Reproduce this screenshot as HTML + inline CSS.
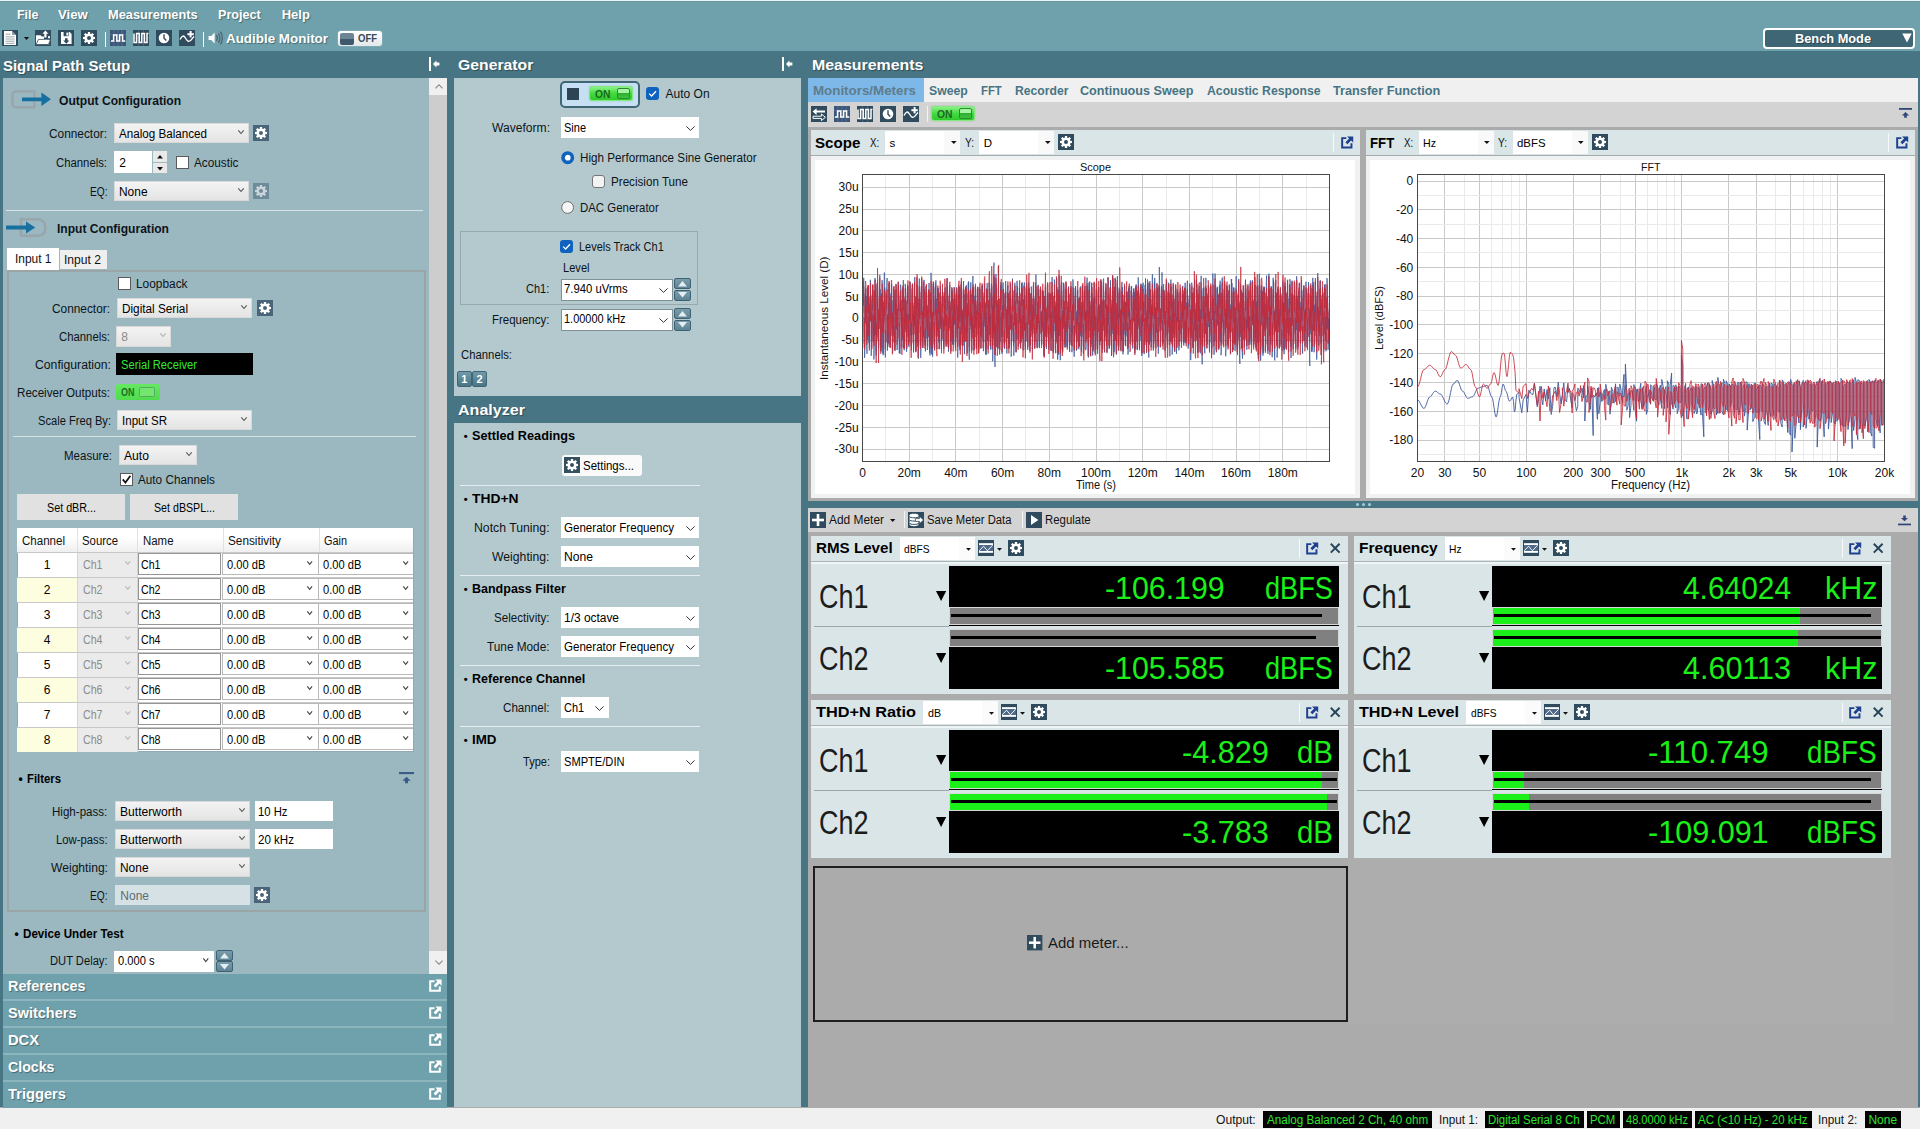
<!DOCTYPE html>
<html><head><meta charset="utf-8"><title>APx500</title><style>
html,body{margin:0;padding:0;}
body{width:1920px;height:1129px;position:relative;overflow:hidden;background:#ababab;
font-family:"Liberation Sans",sans-serif;font-size:12px;color:#000;}
div,span.t,svg.a{position:absolute;box-sizing:border-box;}
span.t{white-space:nowrap;transform-origin:0 0;line-height:normal;}
svg.a{overflow:visible;}
.cb{background:linear-gradient(#f3f3f3,#e4e4e4);border:1px solid #d9d9d9;}
.wb{background:#fff;border:1px solid #7a7a7a;}
</style></head><body>
<div style="left:0px;top:0px;width:1920px;height:51px;background:#6fa1ac;"></div>
<div style="left:0px;top:0px;width:1920px;height:1px;background:#e4f8f9;"></div>
<div style="left:0px;top:1px;width:1920px;height:1px;background:#6c959e;"></div>
<div style="left:0px;top:51px;width:1920px;height:1056px;background:#487584;"></div>
<span class="t" style="left:16.5px;top:7px;font-size:13px;color:#fff;font-weight:bold;transform:scaleX(0.960);text-shadow:1px 1px 1px rgba(0,0,0,.35);">File</span>
<span class="t" style="left:58.3px;top:7px;font-size:13px;color:#fff;font-weight:bold;transform:scaleX(1.011);text-shadow:1px 1px 1px rgba(0,0,0,.35);">View</span>
<span class="t" style="left:108.3px;top:7px;font-size:13px;color:#fff;font-weight:bold;transform:scaleX(0.985);text-shadow:1px 1px 1px rgba(0,0,0,.35);">Measurements</span>
<span class="t" style="left:218.3px;top:7px;font-size:13px;color:#fff;font-weight:bold;transform:scaleX(0.969);text-shadow:1px 1px 1px rgba(0,0,0,.35);">Project</span>
<span class="t" style="left:281.7px;top:7px;font-size:13px;color:#fff;font-weight:bold;text-shadow:1px 1px 1px rgba(0,0,0,.35);">Help</span>
<svg class="a" style="left:2px;top:30px;" width="16" height="16" viewBox="0 0 16 16"><rect width="16" height="16" fill="#2f4b5d"/><path d="M2 1H10L14 5V15H2Z" fill="#fff"/><path d="M10 1V5H14" fill="#2f4b5d" opacity=".55"/><path d="M3.5 4.2H8.5M3.5 6.8H12.5M3.5 9H12.5M3.5 11.2H12.5M3.5 13.3H12.5" stroke="#9aa6ae" stroke-width="1"/></svg>
<svg class="a" style="left:24px;top:37px;" width="5" height="3" viewBox="0 0 5 3"><path d="M0 0H5L2.5 3Z" fill="#111"/></svg>
<svg class="a" style="left:35px;top:30px;" width="16" height="16" viewBox="0 0 16 16"><rect width="16" height="16" fill="#2f4b5d"/><path d="M1 14.5V5.2H5.6L6.8 6.6H9V9H14.2V14.5Z" fill="#fff"/><path d="M3.4 9.4H15.6L13.4 14.5H1.2Z" fill="#fff" stroke="#2f4b5d" stroke-width="0.8"/><path d="M10.4 0.6L13.4 3.8H11.5V7.6H9.3V3.8H7.4Z" fill="#fff"/><rect x="13" y="6.2" width="2" height="2" fill="#fff"/></svg>
<svg class="a" style="left:58px;top:30px;" width="16" height="16" viewBox="0 0 16 16"><rect width="16" height="16" fill="#2f4b5d"/><path d="M3 2H11.6L13.6 4V14H3Z" fill="#fff"/><rect x="5.6" y="2" width="5" height="4.2" fill="#2f4b5d"/><rect x="8.4" y="2.6" width="1.6" height="3" fill="#fff"/><path d="M7 8.2H9.6V10.6H11.4L8.3 13.8L5.2 10.6H7Z" fill="#2f4b5d"/></svg>
<svg class="a" style="left:81px;top:30px;" width="16" height="16" viewBox="0 0 16 16"><rect width="16" height="16" fill="#2f4b5d"/><path d="M14.00 6.90 L14.00 9.10 L12.35 9.15 L11.89 10.26 L13.02 11.47 L11.47 13.02 L10.26 11.89 L9.15 12.35 L9.10 14.00 L6.90 14.00 L6.85 12.35 L5.74 11.89 L4.53 13.02 L2.98 11.47 L4.11 10.26 L3.65 9.15 L2.00 9.10 L2.00 6.90 L3.65 6.85 L4.11 5.74 L2.98 4.53 L4.53 2.98 L5.74 4.11 L6.85 3.65 L6.90 2.00 L9.10 2.00 L9.15 3.65 L10.26 4.11 L11.47 2.98 L13.02 4.53 L11.89 5.74 L12.35 6.85Z M10.00 8.00 A2.0 2.0 0 1 0 6.00 8.00 A2.0 2.0 0 1 0 10.00 8.00Z" fill="#fff" fill-rule="evenodd"/></svg>
<div style="left:104.5px;top:32px;width:1.5px;height:14.5px;background:#fff;"></div>
<svg class="a" style="left:110px;top:30px;" width="16" height="16" viewBox="0 0 16 16"><rect width="16" height="16" fill="#3c5679"/><path d="M0 4.5H16M0 11.5H16M4 0V16M8 0V16M12 0V16" stroke="#5a7599" stroke-width="0.7"/><path d="M1 11H3.6V5H6.8V11H9.6V5H12.6V11H15.2" fill="none" stroke="#fff" stroke-width="1.5"/></svg>
<svg class="a" style="left:133px;top:30px;" width="16" height="16" viewBox="0 0 16 16"><rect width="16" height="16" fill="#2f4b5d"/><path d="M0 8H16M5.5 0V16M10.5 0V16" stroke="#566f82" stroke-width="0.7"/><path d="M1 3.4V12.6H3.6V3.4H6.2V12.6H8.8V3.4H11.4V12.6H14V3.4H15.4" fill="none" stroke="#fff" stroke-width="1.5"/></svg>
<svg class="a" style="left:156px;top:30px;" width="16" height="16" viewBox="0 0 16 16"><rect width="16" height="16" fill="#2f4b5d"/><circle cx="8" cy="8" r="5.3" fill="#fff"/><path d="M8 4.2V8.2L10.3 10.6" fill="none" stroke="#2f4b5d" stroke-width="1.4"/></svg>
<svg class="a" style="left:179px;top:30px;" width="16" height="16" viewBox="0 0 16 16"><rect width="16" height="16" fill="#2f4b5d"/><path d="M1 9.5C3 5.5 4.6 5 6.4 8S10 13.5 13.4 8.4L15 6.5" fill="none" stroke="#fff" stroke-width="1.4"/><rect x="10.6" y="1" width="2" height="6.4" fill="#fff"/><rect x="8.4" y="3.2" width="6.4" height="2" fill="#fff"/></svg>
<div style="left:202.5px;top:32px;width:1.5px;height:14.5px;background:#fff;"></div>
<svg class="a" style="left:208px;top:30px;" width="15" height="16" viewBox="0 0 15 16"><path d="M0.6 6H3.4L6.6 2.6V13.4L3.4 10H0.6Z" fill="#fff"/><path d="M8.4 5.2C9.6 6.8 9.6 9.2 8.4 10.8M10.4 3.4C12.4 6 12.4 10 10.4 12.6M12.4 1.6C15 5.2 15 10.8 12.4 14.4" fill="none" stroke="#4c6670" stroke-width="1.3"/></svg>
<span class="t" style="left:226.0px;top:31px;font-size:13px;color:#fff;font-weight:bold;transform:scaleX(1.031);text-shadow:1px 1px 1px rgba(0,0,0,.35);">Audible Monitor</span>
<div style="left:338px;top:31px;width:44px;height:15px;border-radius:3px;background:linear-gradient(#ffffff,#e4e8ea);box-shadow:0 0 1px #fff;"></div>
<div style="left:340px;top:32.5px;width:14px;height:12px;border-radius:2px;background:linear-gradient(#6d8494 48%,#3f586b 52%);"></div>
<span class="t" style="left:357.5px;top:33.4px;font-size:10px;color:#34495a;font-weight:bold;transform:scaleX(0.950);">OFF</span>
<div style="left:1763px;top:28px;width:152px;height:21px;background:#3f6675;border:2px solid #fff;border-radius:4px;"></div>
<span class="t" style="left:1795.0px;top:32px;font-size:12.5px;color:#fff;font-weight:bold;transform:scaleX(1.023);text-shadow:1px 1px 1px rgba(0,0,0,.35);">Bench Mode</span>
<svg class="a" style="left:1902px;top:33px;" width="10" height="10" viewBox="0 0 10 10"><path d="M0.3 0.6H9.7L5 9.6Z" fill="#fff"/></svg>
<span class="t" style="left:3.2px;top:56.599999999999994px;font-size:15.5px;color:#fff;font-weight:bold;transform:scaleX(0.964);text-shadow:1px 1px 1px rgba(0,0,0,.35);">Signal Path Setup</span>
<svg class="a" style="left:429px;top:57px;" width="11" height="14" viewBox="0 0 11 14"><rect x="0" y="0" width="2" height="14" fill="#fff"/><path d="M4 7 L7.4 3.4 V5.6 H10.4 V8.4 H7.4 V10.6 Z" fill="#fff"/></svg>
<div style="left:3px;top:78px;width:426px;height:896px;background:#9bb7c0;"></div>
<div style="left:429px;top:78px;width:18px;height:896px;background:#cdcdcd;"></div>
<div style="left:429px;top:78px;width:18px;height:17px;background:#f0f0f0;"></div>
<div style="left:429px;top:951px;width:18px;height:23px;background:#f0f0f0;"></div>
<svg class="a" style="left:434.5px;top:84px;" width="8" height="5" viewBox="0 0 8 5"><path d="M0.4 4.4L4 0.8L7.6 4.4" fill="none" stroke="#8a8a8a" stroke-width="1.1"/></svg>
<svg class="a" style="left:434.5px;top:960px;" width="8" height="5" viewBox="0 0 8 5"><path d="M0.4 0.6L4 4.2L7.6 0.6" fill="none" stroke="#8a8a8a" stroke-width="1.1"/></svg>
<svg class="a" style="left:11px;top:90px;" width="42" height="19" viewBox="0 0 42 19"><path d="M23.4 1.4H5.4Q1.4 1.4 1.4 5.4V13.2Q1.4 17.2 5.4 17.2H23.4Z" fill="none" stroke="#98a6ac" stroke-width="2.4"/><path d="M11 7.4H30.4V2.6L40 9.3L30.4 16V11.2H11Z" fill="#17709f"/></svg>
<span class="t" style="left:59.3px;top:93.7px;font-size:12.5px;color:#0c1418;font-weight:bold;transform:scaleX(0.966);">Output Configuration</span>
<span class="t" style="left:49.3px;top:127px;font-size:12px;color:#0c1418;transform:scaleX(0.988);">Connector:</span>
<div class="cb" style="left:114px;top:123px;width:135px;height:20px;"></div>
<span class="t" style="left:119.2px;top:127px;font-size:12px;color:#000;transform:scaleX(0.970);">Analog Balanced</span>
<svg class="a" style="left:237.8px;top:129.7px;" width="6" height="4.5" viewBox="0 0 6 4.5"><path d="M0.3 0.3 L3.0 3.5 L5.7 0.3" fill="none" stroke="#555" stroke-width="1.1"/></svg>
<svg class="a" style="left:253px;top:125px;" width="16" height="16" viewBox="0 0 16 16"><rect width="16" height="16" fill="#4a6579"/><path d="M14.00 6.90 L14.00 9.10 L12.35 9.15 L11.89 10.26 L13.02 11.47 L11.47 13.02 L10.26 11.89 L9.15 12.35 L9.10 14.00 L6.90 14.00 L6.85 12.35 L5.74 11.89 L4.53 13.02 L2.98 11.47 L4.11 10.26 L3.65 9.15 L2.00 9.10 L2.00 6.90 L3.65 6.85 L4.11 5.74 L2.98 4.53 L4.53 2.98 L5.74 4.11 L6.85 3.65 L6.90 2.00 L9.10 2.00 L9.15 3.65 L10.26 4.11 L11.47 2.98 L13.02 4.53 L11.89 5.74 L12.35 6.85Z M10.00 8.00 A2.0 2.0 0 1 0 6.00 8.00 A2.0 2.0 0 1 0 10.00 8.00Z" fill="#fff" fill-rule="evenodd"/></svg>
<span class="t" style="left:56.3px;top:155.7px;font-size:12px;color:#0c1418;transform:scaleX(0.944);">Channels:</span>
<div style="left:114px;top:151px;width:38px;height:22px;background:#fff;"></div>
<span class="t" style="left:119.3px;top:155.7px;font-size:12px;color:#000;">2</span>
<div style="left:153px;top:151px;width:14px;height:10.5px;background:#e9e9e9;"></div>
<div style="left:153px;top:162.5px;width:14px;height:10.5px;background:#e9e9e9;"></div>
<svg class="a" style="left:157px;top:155px;" width="6" height="3.5" viewBox="0 0 6 3.5"><path d="M0 3.5H6L3.0 0Z" fill="#111"/></svg>
<svg class="a" style="left:157px;top:166.5px;" width="6" height="3.5" viewBox="0 0 6 3.5"><path d="M0 0H6L3.0 3.5Z" fill="#111"/></svg>
<div style="left:175.5px;top:156px;width:13px;height:13px;background:#fff;border:1px solid #5a5a5a;"></div>
<span class="t" style="left:194.2px;top:155.7px;font-size:12px;color:#0c1418;transform:scaleX(0.981);">Acoustic</span>
<span class="t" style="left:89.8px;top:184.8px;font-size:12px;color:#0c1418;transform:scaleX(0.846);">EQ:</span>
<div class="cb" style="left:114px;top:181px;width:135px;height:20px;"></div>
<span class="t" style="left:119.2px;top:185px;font-size:12px;color:#000;transform:scaleX(0.994);">None</span>
<svg class="a" style="left:237.8px;top:187.7px;" width="6" height="4.5" viewBox="0 0 6 4.5"><path d="M0.3 0.3 L3.0 3.5 L5.7 0.3" fill="none" stroke="#555" stroke-width="1.1"/></svg>
<svg class="a" style="left:253px;top:183px;" width="16" height="16" viewBox="0 0 16 16"><rect width="16" height="16" fill="#6e8b9b"/><path d="M14.00 6.90 L14.00 9.10 L12.35 9.15 L11.89 10.26 L13.02 11.47 L11.47 13.02 L10.26 11.89 L9.15 12.35 L9.10 14.00 L6.90 14.00 L6.85 12.35 L5.74 11.89 L4.53 13.02 L2.98 11.47 L4.11 10.26 L3.65 9.15 L2.00 9.10 L2.00 6.90 L3.65 6.85 L4.11 5.74 L2.98 4.53 L4.53 2.98 L5.74 4.11 L6.85 3.65 L6.90 2.00 L9.10 2.00 L9.15 3.65 L10.26 4.11 L11.47 2.98 L13.02 4.53 L11.89 5.74 L12.35 6.85Z M10.00 8.00 A2.0 2.0 0 1 0 6.00 8.00 A2.0 2.0 0 1 0 10.00 8.00Z" fill="#c9d5da" fill-rule="evenodd"/></svg>
<div style="left:6px;top:210px;width:417px;height:1px;background:#d9e3e7;"></div>
<svg class="a" style="left:6px;top:217px;" width="42" height="21" viewBox="0 0 42 21"><path d="M15 2.2H31C37 2.2 39.4 5 39.4 10.5S37 18.8 31 18.8H15Z" fill="none" stroke="#98a6ac" stroke-width="2.4"/><path d="M0 8.6H20V4.4L29.2 10.5L20 16.6V12.4H0Z" fill="#17709f"/></svg>
<span class="t" style="left:57.2px;top:222px;font-size:12.5px;color:#0c1418;font-weight:bold;transform:scaleX(0.966);">Input Configuration</span>
<div style="left:7px;top:269.5px;width:419px;height:642.5px;border:2px solid #9ba5a5;"></div>
<div style="left:7px;top:248px;width:52px;height:22.3px;background:#fff;"></div>
<div style="left:60px;top:250px;width:47.3px;height:19.2px;background:#efefef;"></div>
<span class="t" style="left:14.5px;top:251.60000000000002px;font-size:12px;color:#111;transform:scaleX(0.995);">Input 1</span>
<span class="t" style="left:64.2px;top:252.60000000000002px;font-size:12px;color:#111;transform:scaleX(1.008);">Input 2</span>
<div style="left:117.5px;top:277px;width:13px;height:13px;background:#fff;border:1px solid #5a5a5a;"></div>
<span class="t" style="left:136.4px;top:277px;font-size:12px;color:#0c1418;transform:scaleX(0.990);">Loopback</span>
<span class="t" style="left:52.0px;top:302px;font-size:12px;color:#0c1418;transform:scaleX(0.988);">Connector:</span>
<div class="cb" style="left:117px;top:298px;width:135px;height:20px;"></div>
<span class="t" style="left:122.2px;top:302px;font-size:12px;color:#000;transform:scaleX(0.980);">Digital Serial</span>
<svg class="a" style="left:240.8px;top:304.7px;" width="6" height="4.5" viewBox="0 0 6 4.5"><path d="M0.3 0.3 L3.0 3.5 L5.7 0.3" fill="none" stroke="#555" stroke-width="1.1"/></svg>
<svg class="a" style="left:257px;top:300px;" width="16" height="16" viewBox="0 0 16 16"><rect width="16" height="16" fill="#4a6579"/><path d="M14.00 6.90 L14.00 9.10 L12.35 9.15 L11.89 10.26 L13.02 11.47 L11.47 13.02 L10.26 11.89 L9.15 12.35 L9.10 14.00 L6.90 14.00 L6.85 12.35 L5.74 11.89 L4.53 13.02 L2.98 11.47 L4.11 10.26 L3.65 9.15 L2.00 9.10 L2.00 6.90 L3.65 6.85 L4.11 5.74 L2.98 4.53 L4.53 2.98 L5.74 4.11 L6.85 3.65 L6.90 2.00 L9.10 2.00 L9.15 3.65 L10.26 4.11 L11.47 2.98 L13.02 4.53 L11.89 5.74 L12.35 6.85Z M10.00 8.00 A2.0 2.0 0 1 0 6.00 8.00 A2.0 2.0 0 1 0 10.00 8.00Z" fill="#fff" fill-rule="evenodd"/></svg>
<span class="t" style="left:59.0px;top:330px;font-size:12px;color:#0c1418;transform:scaleX(0.944);">Channels:</span>
<div class="cb" style="left:116px;top:326px;width:55px;height:21px;"></div>
<span class="t" style="left:121.2px;top:330px;font-size:12px;color:#8a8a8a;">8</span>
<svg class="a" style="left:159.8px;top:332.7px;" width="6" height="4.5" viewBox="0 0 6 4.5"><path d="M0.3 0.3 L3.0 3.5 L5.7 0.3" fill="none" stroke="#b0b0b0" stroke-width="1.1"/></svg>
<span class="t" style="left:34.5px;top:358px;font-size:12px;color:#0c1418;transform:scaleX(1.017);">Configuration:</span>
<div style="left:116px;top:353px;width:137px;height:22px;background:#000;"></div>
<span class="t" style="left:121.0px;top:358px;font-size:12px;color:#33e833;transform:scaleX(0.934);">Serial Receiver</span>
<span class="t" style="left:17.0px;top:386px;font-size:12px;color:#0c1418;transform:scaleX(0.968);">Receiver Outputs:</span>
<div style="left:116px;top:384px;width:44px;height:16px;border-radius:2px;background:linear-gradient(#66e863,#4fdc4c);"></div>
<span class="t" style="left:121.2px;top:385.8px;font-size:10.5px;color:#1f6b24;font-weight:bold;transform:scaleX(0.857);">ON</span>
<div style="left:139px;top:386.6px;width:16.4px;height:10.6px;border-radius:1.5px;background:#72e66f;border:1.2px solid #58a865;"></div>
<span class="t" style="left:37.5px;top:414px;font-size:12px;color:#0c1418;transform:scaleX(0.928);">Scale Freq By:</span>
<div class="cb" style="left:117px;top:410px;width:135px;height:20px;"></div>
<span class="t" style="left:122.2px;top:414px;font-size:12px;color:#000;transform:scaleX(0.964);">Input SR</span>
<svg class="a" style="left:240.8px;top:416.7px;" width="6" height="4.5" viewBox="0 0 6 4.5"><path d="M0.3 0.3 L3.0 3.5 L5.7 0.3" fill="none" stroke="#555" stroke-width="1.1"/></svg>
<div style="left:13px;top:436px;width:403px;height:1px;background:#d9e3e7;"></div>
<span class="t" style="left:64.0px;top:449px;font-size:12px;color:#0c1418;transform:scaleX(0.960);">Measure:</span>
<div class="cb" style="left:119px;top:445px;width:78px;height:20px;"></div>
<span class="t" style="left:124.2px;top:449px;font-size:12px;color:#000;transform:scaleX(1.013);">Auto</span>
<svg class="a" style="left:185.8px;top:451.7px;" width="6" height="4.5" viewBox="0 0 6 4.5"><path d="M0.3 0.3 L3.0 3.5 L5.7 0.3" fill="none" stroke="#555" stroke-width="1.1"/></svg>
<div style="left:119.5px;top:473px;width:13px;height:13px;background:#fff;border:1px solid #5a5a5a;"></div>
<svg class="a" style="left:119.5px;top:473px;" width="13" height="13" viewBox="0 0 13 13"><path d="M2.8 6.4L5.4 9.6L10.4 2.8" fill="none" stroke="#111" stroke-width="1.7"/></svg>
<span class="t" style="left:138.3px;top:473px;font-size:12px;color:#0c1418;transform:scaleX(0.978);">Auto Channels</span>
<div style="left:17px;top:494px;width:108px;height:26px;background:#e1e1e1;"></div>
<span class="t" style="left:46.5px;top:500.5px;font-size:12px;color:#000;transform:scaleX(0.896);">Set dBR...</span>
<div style="left:130px;top:494px;width:108px;height:26px;background:#e1e1e1;"></div>
<span class="t" style="left:153.5px;top:500.5px;font-size:12px;color:#000;transform:scaleX(0.888);">Set dBSPL...</span>
<div style="left:16.5px;top:527.5px;width:397px;height:224px;background:#fff;border:1px solid #8faab4;"></div>
<div style="left:17px;top:528px;width:396px;height:23.5px;background:linear-gradient(#fff 40%,#efefef);"></div>
<div style="left:76.5px;top:528px;width:1px;height:23.5px;background:#e2e2e2;"></div>
<div style="left:136.5px;top:528px;width:1px;height:23.5px;background:#e2e2e2;"></div>
<div style="left:222.5px;top:528px;width:1px;height:23.5px;background:#e2e2e2;"></div>
<div style="left:318.5px;top:528px;width:1px;height:23.5px;background:#e2e2e2;"></div>
<span class="t" style="left:22.0px;top:534px;font-size:12px;color:#111;transform:scaleX(0.962);">Channel</span>
<span class="t" style="left:82.2px;top:534px;font-size:12px;color:#111;transform:scaleX(0.947);">Source</span>
<span class="t" style="left:142.5px;top:534px;font-size:12px;color:#111;transform:scaleX(0.953);">Name</span>
<span class="t" style="left:228.0px;top:534px;font-size:12px;color:#111;transform:scaleX(0.981);">Sensitivity</span>
<span class="t" style="left:324.4px;top:534px;font-size:12px;color:#111;transform:scaleX(0.907);">Gain</span>
<div style="left:17px;top:551.5px;width:396px;height:1px;background:#c8c8c8;"></div>
<div style="left:76.5px;top:552.5px;width:60px;height:24px;background:#ebebeb;"></div>
<div style="left:76.5px;top:552.5px;width:1px;height:24px;background:#d5d5d5;"></div>
<div style="left:136.5px;top:552.5px;width:1px;height:24px;background:#d5d5d5;"></div>
<span class="t" style="left:43.7px;top:558.0px;font-size:12px;color:#000;">1</span>
<span class="t" style="left:82.5px;top:558.0px;font-size:12px;color:#8c8c8c;transform:scaleX(0.886);">Ch1</span>
<svg class="a" style="left:125px;top:561.1px;" width="5.6" height="4.2" viewBox="0 0 5.6 4.2"><path d="M0.3 0.3 L2.8 3.2 L5.3 0.3" fill="none" stroke="#b8b8b8" stroke-width="1.1"/></svg>
<div style="left:138px;top:553.0px;width:83px;height:22px;background:#fff;border:1px solid #959595;"></div>
<span class="t" style="left:141.3px;top:558.0px;font-size:12px;color:#000;transform:scaleX(0.886);">Ch1</span>
<div style="left:222px;top:553.0px;width:97px;height:22px;background:#fff;border:1px solid #b9b9b9;"></div>
<div style="left:318px;top:553.0px;width:95px;height:22px;background:#fff;border:1px solid #b9b9b9;border-right:none;"></div>
<span class="t" style="left:227.3px;top:558.0px;font-size:12px;color:#000;transform:scaleX(0.926);">0.00 dB</span>
<span class="t" style="left:323.2px;top:558.0px;font-size:12px;color:#000;transform:scaleX(0.926);">0.00 dB</span>
<svg class="a" style="left:307.2px;top:560.9px;" width="5.4" height="4.4" viewBox="0 0 5.4 4.4"><path d="M0.3 0.3 L2.7 3.4 L5.1000000000000005 0.3" fill="none" stroke="#444" stroke-width="1.1"/></svg>
<svg class="a" style="left:403.2px;top:560.9px;" width="5.4" height="4.4" viewBox="0 0 5.4 4.4"><path d="M0.3 0.3 L2.7 3.4 L5.1000000000000005 0.3" fill="none" stroke="#444" stroke-width="1.1"/></svg>
<div style="left:17px;top:576.5px;width:396px;height:1px;background:#c8c8c8;"></div>
<div style="left:17px;top:577.5px;width:59.5px;height:24px;background:#fdfde0;"></div>
<div style="left:76.5px;top:577.5px;width:60px;height:24px;background:#ebebeb;"></div>
<div style="left:76.5px;top:577.5px;width:1px;height:24px;background:#d5d5d5;"></div>
<div style="left:136.5px;top:577.5px;width:1px;height:24px;background:#d5d5d5;"></div>
<span class="t" style="left:43.7px;top:583.0px;font-size:12px;color:#000;">2</span>
<span class="t" style="left:82.5px;top:583.0px;font-size:12px;color:#8c8c8c;transform:scaleX(0.886);">Ch2</span>
<svg class="a" style="left:125px;top:586.1px;" width="5.6" height="4.2" viewBox="0 0 5.6 4.2"><path d="M0.3 0.3 L2.8 3.2 L5.3 0.3" fill="none" stroke="#b8b8b8" stroke-width="1.1"/></svg>
<div style="left:138px;top:578.0px;width:83px;height:22px;background:#fff;border:1px solid #959595;"></div>
<span class="t" style="left:141.3px;top:583.0px;font-size:12px;color:#000;transform:scaleX(0.886);">Ch2</span>
<div style="left:222px;top:578.0px;width:97px;height:22px;background:#fff;border:1px solid #b9b9b9;"></div>
<div style="left:318px;top:578.0px;width:95px;height:22px;background:#fff;border:1px solid #b9b9b9;border-right:none;"></div>
<span class="t" style="left:227.3px;top:583.0px;font-size:12px;color:#000;transform:scaleX(0.926);">0.00 dB</span>
<span class="t" style="left:323.2px;top:583.0px;font-size:12px;color:#000;transform:scaleX(0.926);">0.00 dB</span>
<svg class="a" style="left:307.2px;top:585.9px;" width="5.4" height="4.4" viewBox="0 0 5.4 4.4"><path d="M0.3 0.3 L2.7 3.4 L5.1000000000000005 0.3" fill="none" stroke="#444" stroke-width="1.1"/></svg>
<svg class="a" style="left:403.2px;top:585.9px;" width="5.4" height="4.4" viewBox="0 0 5.4 4.4"><path d="M0.3 0.3 L2.7 3.4 L5.1000000000000005 0.3" fill="none" stroke="#444" stroke-width="1.1"/></svg>
<div style="left:17px;top:601.5px;width:396px;height:1px;background:#c8c8c8;"></div>
<div style="left:76.5px;top:602.5px;width:60px;height:24px;background:#ebebeb;"></div>
<div style="left:76.5px;top:602.5px;width:1px;height:24px;background:#d5d5d5;"></div>
<div style="left:136.5px;top:602.5px;width:1px;height:24px;background:#d5d5d5;"></div>
<span class="t" style="left:43.7px;top:608.0px;font-size:12px;color:#000;">3</span>
<span class="t" style="left:82.5px;top:608.0px;font-size:12px;color:#8c8c8c;transform:scaleX(0.886);">Ch3</span>
<svg class="a" style="left:125px;top:611.1px;" width="5.6" height="4.2" viewBox="0 0 5.6 4.2"><path d="M0.3 0.3 L2.8 3.2 L5.3 0.3" fill="none" stroke="#b8b8b8" stroke-width="1.1"/></svg>
<div style="left:138px;top:603.0px;width:83px;height:22px;background:#fff;border:1px solid #959595;"></div>
<span class="t" style="left:141.3px;top:608.0px;font-size:12px;color:#000;transform:scaleX(0.886);">Ch3</span>
<div style="left:222px;top:603.0px;width:97px;height:22px;background:#fff;border:1px solid #b9b9b9;"></div>
<div style="left:318px;top:603.0px;width:95px;height:22px;background:#fff;border:1px solid #b9b9b9;border-right:none;"></div>
<span class="t" style="left:227.3px;top:608.0px;font-size:12px;color:#000;transform:scaleX(0.926);">0.00 dB</span>
<span class="t" style="left:323.2px;top:608.0px;font-size:12px;color:#000;transform:scaleX(0.926);">0.00 dB</span>
<svg class="a" style="left:307.2px;top:610.9px;" width="5.4" height="4.4" viewBox="0 0 5.4 4.4"><path d="M0.3 0.3 L2.7 3.4 L5.1000000000000005 0.3" fill="none" stroke="#444" stroke-width="1.1"/></svg>
<svg class="a" style="left:403.2px;top:610.9px;" width="5.4" height="4.4" viewBox="0 0 5.4 4.4"><path d="M0.3 0.3 L2.7 3.4 L5.1000000000000005 0.3" fill="none" stroke="#444" stroke-width="1.1"/></svg>
<div style="left:17px;top:626.5px;width:396px;height:1px;background:#c8c8c8;"></div>
<div style="left:17px;top:627.5px;width:59.5px;height:24px;background:#fdfde0;"></div>
<div style="left:76.5px;top:627.5px;width:60px;height:24px;background:#ebebeb;"></div>
<div style="left:76.5px;top:627.5px;width:1px;height:24px;background:#d5d5d5;"></div>
<div style="left:136.5px;top:627.5px;width:1px;height:24px;background:#d5d5d5;"></div>
<span class="t" style="left:43.7px;top:633.0px;font-size:12px;color:#000;">4</span>
<span class="t" style="left:82.5px;top:633.0px;font-size:12px;color:#8c8c8c;transform:scaleX(0.886);">Ch4</span>
<svg class="a" style="left:125px;top:636.1px;" width="5.6" height="4.2" viewBox="0 0 5.6 4.2"><path d="M0.3 0.3 L2.8 3.2 L5.3 0.3" fill="none" stroke="#b8b8b8" stroke-width="1.1"/></svg>
<div style="left:138px;top:628.0px;width:83px;height:22px;background:#fff;border:1px solid #959595;"></div>
<span class="t" style="left:141.3px;top:633.0px;font-size:12px;color:#000;transform:scaleX(0.886);">Ch4</span>
<div style="left:222px;top:628.0px;width:97px;height:22px;background:#fff;border:1px solid #b9b9b9;"></div>
<div style="left:318px;top:628.0px;width:95px;height:22px;background:#fff;border:1px solid #b9b9b9;border-right:none;"></div>
<span class="t" style="left:227.3px;top:633.0px;font-size:12px;color:#000;transform:scaleX(0.926);">0.00 dB</span>
<span class="t" style="left:323.2px;top:633.0px;font-size:12px;color:#000;transform:scaleX(0.926);">0.00 dB</span>
<svg class="a" style="left:307.2px;top:635.9px;" width="5.4" height="4.4" viewBox="0 0 5.4 4.4"><path d="M0.3 0.3 L2.7 3.4 L5.1000000000000005 0.3" fill="none" stroke="#444" stroke-width="1.1"/></svg>
<svg class="a" style="left:403.2px;top:635.9px;" width="5.4" height="4.4" viewBox="0 0 5.4 4.4"><path d="M0.3 0.3 L2.7 3.4 L5.1000000000000005 0.3" fill="none" stroke="#444" stroke-width="1.1"/></svg>
<div style="left:17px;top:651.5px;width:396px;height:1px;background:#c8c8c8;"></div>
<div style="left:76.5px;top:652.5px;width:60px;height:24px;background:#ebebeb;"></div>
<div style="left:76.5px;top:652.5px;width:1px;height:24px;background:#d5d5d5;"></div>
<div style="left:136.5px;top:652.5px;width:1px;height:24px;background:#d5d5d5;"></div>
<span class="t" style="left:43.7px;top:658.0px;font-size:12px;color:#000;">5</span>
<span class="t" style="left:82.5px;top:658.0px;font-size:12px;color:#8c8c8c;transform:scaleX(0.886);">Ch5</span>
<svg class="a" style="left:125px;top:661.1px;" width="5.6" height="4.2" viewBox="0 0 5.6 4.2"><path d="M0.3 0.3 L2.8 3.2 L5.3 0.3" fill="none" stroke="#b8b8b8" stroke-width="1.1"/></svg>
<div style="left:138px;top:653.0px;width:83px;height:22px;background:#fff;border:1px solid #959595;"></div>
<span class="t" style="left:141.3px;top:658.0px;font-size:12px;color:#000;transform:scaleX(0.886);">Ch5</span>
<div style="left:222px;top:653.0px;width:97px;height:22px;background:#fff;border:1px solid #b9b9b9;"></div>
<div style="left:318px;top:653.0px;width:95px;height:22px;background:#fff;border:1px solid #b9b9b9;border-right:none;"></div>
<span class="t" style="left:227.3px;top:658.0px;font-size:12px;color:#000;transform:scaleX(0.926);">0.00 dB</span>
<span class="t" style="left:323.2px;top:658.0px;font-size:12px;color:#000;transform:scaleX(0.926);">0.00 dB</span>
<svg class="a" style="left:307.2px;top:660.9px;" width="5.4" height="4.4" viewBox="0 0 5.4 4.4"><path d="M0.3 0.3 L2.7 3.4 L5.1000000000000005 0.3" fill="none" stroke="#444" stroke-width="1.1"/></svg>
<svg class="a" style="left:403.2px;top:660.9px;" width="5.4" height="4.4" viewBox="0 0 5.4 4.4"><path d="M0.3 0.3 L2.7 3.4 L5.1000000000000005 0.3" fill="none" stroke="#444" stroke-width="1.1"/></svg>
<div style="left:17px;top:676.5px;width:396px;height:1px;background:#c8c8c8;"></div>
<div style="left:17px;top:677.5px;width:59.5px;height:24px;background:#fdfde0;"></div>
<div style="left:76.5px;top:677.5px;width:60px;height:24px;background:#ebebeb;"></div>
<div style="left:76.5px;top:677.5px;width:1px;height:24px;background:#d5d5d5;"></div>
<div style="left:136.5px;top:677.5px;width:1px;height:24px;background:#d5d5d5;"></div>
<span class="t" style="left:43.7px;top:683.0px;font-size:12px;color:#000;">6</span>
<span class="t" style="left:82.5px;top:683.0px;font-size:12px;color:#8c8c8c;transform:scaleX(0.886);">Ch6</span>
<svg class="a" style="left:125px;top:686.1px;" width="5.6" height="4.2" viewBox="0 0 5.6 4.2"><path d="M0.3 0.3 L2.8 3.2 L5.3 0.3" fill="none" stroke="#b8b8b8" stroke-width="1.1"/></svg>
<div style="left:138px;top:678.0px;width:83px;height:22px;background:#fff;border:1px solid #959595;"></div>
<span class="t" style="left:141.3px;top:683.0px;font-size:12px;color:#000;transform:scaleX(0.886);">Ch6</span>
<div style="left:222px;top:678.0px;width:97px;height:22px;background:#fff;border:1px solid #b9b9b9;"></div>
<div style="left:318px;top:678.0px;width:95px;height:22px;background:#fff;border:1px solid #b9b9b9;border-right:none;"></div>
<span class="t" style="left:227.3px;top:683.0px;font-size:12px;color:#000;transform:scaleX(0.926);">0.00 dB</span>
<span class="t" style="left:323.2px;top:683.0px;font-size:12px;color:#000;transform:scaleX(0.926);">0.00 dB</span>
<svg class="a" style="left:307.2px;top:685.9px;" width="5.4" height="4.4" viewBox="0 0 5.4 4.4"><path d="M0.3 0.3 L2.7 3.4 L5.1000000000000005 0.3" fill="none" stroke="#444" stroke-width="1.1"/></svg>
<svg class="a" style="left:403.2px;top:685.9px;" width="5.4" height="4.4" viewBox="0 0 5.4 4.4"><path d="M0.3 0.3 L2.7 3.4 L5.1000000000000005 0.3" fill="none" stroke="#444" stroke-width="1.1"/></svg>
<div style="left:17px;top:701.5px;width:396px;height:1px;background:#c8c8c8;"></div>
<div style="left:76.5px;top:702.5px;width:60px;height:24px;background:#ebebeb;"></div>
<div style="left:76.5px;top:702.5px;width:1px;height:24px;background:#d5d5d5;"></div>
<div style="left:136.5px;top:702.5px;width:1px;height:24px;background:#d5d5d5;"></div>
<span class="t" style="left:43.7px;top:708.0px;font-size:12px;color:#000;">7</span>
<span class="t" style="left:82.5px;top:708.0px;font-size:12px;color:#8c8c8c;transform:scaleX(0.886);">Ch7</span>
<svg class="a" style="left:125px;top:711.1px;" width="5.6" height="4.2" viewBox="0 0 5.6 4.2"><path d="M0.3 0.3 L2.8 3.2 L5.3 0.3" fill="none" stroke="#b8b8b8" stroke-width="1.1"/></svg>
<div style="left:138px;top:703.0px;width:83px;height:22px;background:#fff;border:1px solid #959595;"></div>
<span class="t" style="left:141.3px;top:708.0px;font-size:12px;color:#000;transform:scaleX(0.886);">Ch7</span>
<div style="left:222px;top:703.0px;width:97px;height:22px;background:#fff;border:1px solid #b9b9b9;"></div>
<div style="left:318px;top:703.0px;width:95px;height:22px;background:#fff;border:1px solid #b9b9b9;border-right:none;"></div>
<span class="t" style="left:227.3px;top:708.0px;font-size:12px;color:#000;transform:scaleX(0.926);">0.00 dB</span>
<span class="t" style="left:323.2px;top:708.0px;font-size:12px;color:#000;transform:scaleX(0.926);">0.00 dB</span>
<svg class="a" style="left:307.2px;top:710.9px;" width="5.4" height="4.4" viewBox="0 0 5.4 4.4"><path d="M0.3 0.3 L2.7 3.4 L5.1000000000000005 0.3" fill="none" stroke="#444" stroke-width="1.1"/></svg>
<svg class="a" style="left:403.2px;top:710.9px;" width="5.4" height="4.4" viewBox="0 0 5.4 4.4"><path d="M0.3 0.3 L2.7 3.4 L5.1000000000000005 0.3" fill="none" stroke="#444" stroke-width="1.1"/></svg>
<div style="left:17px;top:726.5px;width:396px;height:1px;background:#c8c8c8;"></div>
<div style="left:17px;top:727.5px;width:59.5px;height:24px;background:#fdfde0;"></div>
<div style="left:76.5px;top:727.5px;width:60px;height:24px;background:#ebebeb;"></div>
<div style="left:76.5px;top:727.5px;width:1px;height:24px;background:#d5d5d5;"></div>
<div style="left:136.5px;top:727.5px;width:1px;height:24px;background:#d5d5d5;"></div>
<span class="t" style="left:43.7px;top:733.0px;font-size:12px;color:#000;">8</span>
<span class="t" style="left:82.5px;top:733.0px;font-size:12px;color:#8c8c8c;transform:scaleX(0.886);">Ch8</span>
<svg class="a" style="left:125px;top:736.1px;" width="5.6" height="4.2" viewBox="0 0 5.6 4.2"><path d="M0.3 0.3 L2.8 3.2 L5.3 0.3" fill="none" stroke="#b8b8b8" stroke-width="1.1"/></svg>
<div style="left:138px;top:728.0px;width:83px;height:22px;background:#fff;border:1px solid #959595;"></div>
<span class="t" style="left:141.3px;top:733.0px;font-size:12px;color:#000;transform:scaleX(0.886);">Ch8</span>
<div style="left:222px;top:728.0px;width:97px;height:22px;background:#fff;border:1px solid #b9b9b9;"></div>
<div style="left:318px;top:728.0px;width:95px;height:22px;background:#fff;border:1px solid #b9b9b9;border-right:none;"></div>
<span class="t" style="left:227.3px;top:733.0px;font-size:12px;color:#000;transform:scaleX(0.926);">0.00 dB</span>
<span class="t" style="left:323.2px;top:733.0px;font-size:12px;color:#000;transform:scaleX(0.926);">0.00 dB</span>
<svg class="a" style="left:307.2px;top:735.9px;" width="5.4" height="4.4" viewBox="0 0 5.4 4.4"><path d="M0.3 0.3 L2.7 3.4 L5.1000000000000005 0.3" fill="none" stroke="#444" stroke-width="1.1"/></svg>
<svg class="a" style="left:403.2px;top:735.9px;" width="5.4" height="4.4" viewBox="0 0 5.4 4.4"><path d="M0.3 0.3 L2.7 3.4 L5.1000000000000005 0.3" fill="none" stroke="#444" stroke-width="1.1"/></svg>
<span class="t" style="left:18.6px;top:771.9px;font-size:12px;color:#000;font-weight:bold;">•</span>
<span class="t" style="left:26.5px;top:771.9px;font-size:12px;color:#000;font-weight:bold;transform:scaleX(0.944);">Filters</span>
<svg class="a" style="left:399px;top:772px;" width="15" height="11.6" viewBox="0 0 13 10"><rect x="0" y="0" width="13" height="1.8" fill="#3a5a88"/><path d="M6.5 4.1 L10.1 7.5 H7.8 V9.8 H5.2 V7.5 H2.9 Z" fill="#3a5a88"/></svg>
<span class="t" style="left:52.4px;top:804.6px;font-size:12px;color:#0c1418;transform:scaleX(0.964);">High-pass:</span>
<div class="cb" style="left:115px;top:801px;width:135px;height:20px;"></div>
<span class="t" style="left:120.2px;top:805px;font-size:12px;color:#000;transform:scaleX(1.010);">Butterworth</span>
<svg class="a" style="left:238.8px;top:807.7px;" width="6" height="4.5" viewBox="0 0 6 4.5"><path d="M0.3 0.3 L3.0 3.5 L5.7 0.3" fill="none" stroke="#555" stroke-width="1.1"/></svg>
<div style="left:254.8px;top:801px;width:78.2px;height:20px;background:#fff;"></div>
<span class="t" style="left:257.5px;top:804.6px;font-size:12px;color:#000;transform:scaleX(0.941);">10 Hz</span>
<span class="t" style="left:56.2px;top:832.7px;font-size:12px;color:#0c1418;transform:scaleX(0.942);">Low-pass:</span>
<div class="cb" style="left:115px;top:829px;width:135px;height:20px;"></div>
<span class="t" style="left:120.2px;top:833px;font-size:12px;color:#000;transform:scaleX(1.010);">Butterworth</span>
<svg class="a" style="left:238.8px;top:835.7px;" width="6" height="4.5" viewBox="0 0 6 4.5"><path d="M0.3 0.3 L3.0 3.5 L5.7 0.3" fill="none" stroke="#555" stroke-width="1.1"/></svg>
<div style="left:254.8px;top:829px;width:78.2px;height:20px;background:#fff;"></div>
<span class="t" style="left:257.5px;top:832.7px;font-size:12px;color:#000;transform:scaleX(0.964);">20 kHz</span>
<span class="t" style="left:50.7px;top:860.7px;font-size:12px;color:#0c1418;transform:scaleX(1.009);">Weighting:</span>
<div class="cb" style="left:115px;top:857px;width:135px;height:20px;"></div>
<span class="t" style="left:120.2px;top:861px;font-size:12px;color:#000;transform:scaleX(0.994);">None</span>
<svg class="a" style="left:238.8px;top:863.7px;" width="6" height="4.5" viewBox="0 0 6 4.5"><path d="M0.3 0.3 L3.0 3.5 L5.7 0.3" fill="none" stroke="#555" stroke-width="1.1"/></svg>
<span class="t" style="left:90.2px;top:888.7px;font-size:12px;color:#0c1418;transform:scaleX(0.846);">EQ:</span>
<div style="left:115px;top:885px;width:135px;height:20px;background:#d5e1e5;"></div>
<span class="t" style="left:120.3px;top:888.7px;font-size:12px;color:#5f6b70;">None</span>
<svg class="a" style="left:254px;top:887px;" width="16" height="16" viewBox="0 0 16 16"><rect width="16" height="16" fill="#4a6579"/><path d="M14.00 6.90 L14.00 9.10 L12.35 9.15 L11.89 10.26 L13.02 11.47 L11.47 13.02 L10.26 11.89 L9.15 12.35 L9.10 14.00 L6.90 14.00 L6.85 12.35 L5.74 11.89 L4.53 13.02 L2.98 11.47 L4.11 10.26 L3.65 9.15 L2.00 9.10 L2.00 6.90 L3.65 6.85 L4.11 5.74 L2.98 4.53 L4.53 2.98 L5.74 4.11 L6.85 3.65 L6.90 2.00 L9.10 2.00 L9.15 3.65 L10.26 4.11 L11.47 2.98 L13.02 4.53 L11.89 5.74 L12.35 6.85Z M10.00 8.00 A2.0 2.0 0 1 0 6.00 8.00 A2.0 2.0 0 1 0 10.00 8.00Z" fill="#fff" fill-rule="evenodd"/></svg>
<span class="t" style="left:14.6px;top:926.6px;font-size:12px;color:#000;font-weight:bold;">•</span>
<span class="t" style="left:22.6px;top:926.6px;font-size:12px;color:#000;font-weight:bold;transform:scaleX(0.968);">Device Under Test</span>
<span class="t" style="left:49.8px;top:954.3px;font-size:12px;color:#0c1418;transform:scaleX(0.931);">DUT Delay:</span>
<div style="left:114px;top:951px;width:100px;height:20.5px;background:#fff;"></div>
<span class="t" style="left:118.0px;top:954.3px;font-size:12px;color:#000;transform:scaleX(0.927);">0.000 s</span>
<svg class="a" style="left:203px;top:958px;" width="5.6" height="4.6" viewBox="0 0 5.6 4.6"><path d="M0.3 0.3 L2.8 3.6 L5.3 0.3" fill="none" stroke="#444" stroke-width="1.1"/></svg>
<div style="left:215.5px;top:950.3px;width:17.5px;height:10.75px;background:linear-gradient(#7a9dad,#5d8394);border:1px solid #3f6273;border-radius:2px;"></div>
<div style="left:215.5px;top:961.05px;width:17.5px;height:10.75px;background:linear-gradient(#7a9dad,#5d8394);border:1px solid #3f6273;border-radius:2px;"></div>
<svg class="a" style="left:219.75px;top:952.9px;" width="9" height="5.5" viewBox="0 0 9 5.5"><path d="M0 5.5L4.5 0L9 5.5Z" fill="#e6eef1"/></svg>
<svg class="a" style="left:219.75px;top:963.8499999999999px;" width="9" height="5.5" viewBox="0 0 9 5.5"><path d="M0 0L4.5 5.5L9 0Z" fill="#e6eef1"/></svg>
<div style="left:3px;top:974px;width:444px;height:27px;background:#8db5be;"></div>
<div style="left:3px;top:974px;width:444px;height:25px;background:#6fa1ac;"></div>
<span class="t" style="left:7.5px;top:976.8px;font-size:15.5px;color:#fff;font-weight:bold;transform:scaleX(0.927);text-shadow:1px 1px 1px rgba(0,0,0,.35);">References</span>
<svg class="a" style="left:428.5px;top:979px;" width="13" height="13" viewBox="0 0 13 13"><path d="M5.5 2.2H1.2V11.8H10.8V7.5" fill="none" stroke="#fff" stroke-width="2"/><path d="M6.2 0.4H12.6V6.8L10.4 4.6L6.6 8.4L4.6 6.4L8.4 2.6Z" fill="#fff"/></svg>
<div style="left:3px;top:1001px;width:444px;height:27px;background:#8db5be;"></div>
<div style="left:3px;top:1001px;width:444px;height:25px;background:#6fa1ac;"></div>
<span class="t" style="left:7.5px;top:1003.8px;font-size:15.5px;color:#fff;font-weight:bold;transform:scaleX(0.935);text-shadow:1px 1px 1px rgba(0,0,0,.35);">Switchers</span>
<svg class="a" style="left:428.5px;top:1006px;" width="13" height="13" viewBox="0 0 13 13"><path d="M5.5 2.2H1.2V11.8H10.8V7.5" fill="none" stroke="#fff" stroke-width="2"/><path d="M6.2 0.4H12.6V6.8L10.4 4.6L6.6 8.4L4.6 6.4L8.4 2.6Z" fill="#fff"/></svg>
<div style="left:3px;top:1028px;width:444px;height:27px;background:#8db5be;"></div>
<div style="left:3px;top:1028px;width:444px;height:25px;background:#6fa1ac;"></div>
<span class="t" style="left:7.5px;top:1030.8px;font-size:15.5px;color:#fff;font-weight:bold;transform:scaleX(0.947);text-shadow:1px 1px 1px rgba(0,0,0,.35);">DCX</span>
<svg class="a" style="left:428.5px;top:1033px;" width="13" height="13" viewBox="0 0 13 13"><path d="M5.5 2.2H1.2V11.8H10.8V7.5" fill="none" stroke="#fff" stroke-width="2"/><path d="M6.2 0.4H12.6V6.8L10.4 4.6L6.6 8.4L4.6 6.4L8.4 2.6Z" fill="#fff"/></svg>
<div style="left:3px;top:1055px;width:444px;height:27px;background:#8db5be;"></div>
<div style="left:3px;top:1055px;width:444px;height:25px;background:#6fa1ac;"></div>
<span class="t" style="left:7.5px;top:1057.8px;font-size:15.5px;color:#fff;font-weight:bold;transform:scaleX(0.915);text-shadow:1px 1px 1px rgba(0,0,0,.35);">Clocks</span>
<svg class="a" style="left:428.5px;top:1060px;" width="13" height="13" viewBox="0 0 13 13"><path d="M5.5 2.2H1.2V11.8H10.8V7.5" fill="none" stroke="#fff" stroke-width="2"/><path d="M6.2 0.4H12.6V6.8L10.4 4.6L6.6 8.4L4.6 6.4L8.4 2.6Z" fill="#fff"/></svg>
<div style="left:3px;top:1082px;width:444px;height:27px;background:#8db5be;"></div>
<div style="left:3px;top:1082px;width:444px;height:25px;background:#6fa1ac;"></div>
<span class="t" style="left:7.5px;top:1084.8px;font-size:15.5px;color:#fff;font-weight:bold;transform:scaleX(0.948);text-shadow:1px 1px 1px rgba(0,0,0,.35);">Triggers</span>
<svg class="a" style="left:428.5px;top:1087px;" width="13" height="13" viewBox="0 0 13 13"><path d="M5.5 2.2H1.2V11.8H10.8V7.5" fill="none" stroke="#fff" stroke-width="2"/><path d="M6.2 0.4H12.6V6.8L10.4 4.6L6.6 8.4L4.6 6.4L8.4 2.6Z" fill="#fff"/></svg>
<div style="left:3px;top:1106px;width:444px;height:1.5px;background:#6fa1ac;"></div>
<span class="t" style="left:458.3px;top:56.2px;font-size:15.5px;color:#fff;font-weight:bold;transform:scaleX(1.016);text-shadow:1px 1px 1px rgba(0,0,0,.35);">Generator</span>
<svg class="a" style="left:782px;top:56.5px;" width="11" height="14" viewBox="0 0 11 14"><rect x="0" y="0" width="2" height="14" fill="#fff"/><path d="M4 7 L7.4 3.4 V5.6 H10.4 V8.4 H7.4 V10.6 Z" fill="#fff"/></svg>
<div style="left:454px;top:78px;width:347px;height:317.5px;background:#b4c9ce;"></div>
<div style="left:560px;top:81px;width:80px;height:27px;background:#c6dff3;border:2px solid #3f6675;border-radius:5px;"></div>
<div style="left:567px;top:88.3px;width:12px;height:11.7px;background:#2c4454;"></div>
<div style="left:589px;top:86px;width:44px;height:15px;border-radius:3px;background:linear-gradient(#8af287,#43da40 50%,#2fc92d);border:1px solid #86e883;box-shadow:0 0 1px #3aa63a;"></div>
<span class="t" style="left:594.6px;top:87.5px;font-size:11px;color:#1c6a22;font-weight:bold;transform:scaleX(0.939);">ON</span>
<div style="left:616.8px;top:88.4px;width:13.6px;height:10.2px;border-radius:2px;background:linear-gradient(#a5f3a3 42%,#2fae33 50%,#3fc43f);border:1px solid #2a8a30;"></div>
<div style="left:646px;top:87.2px;width:13px;height:13px;background:#0f63bf;border-radius:3px;"></div>
<svg class="a" style="left:646px;top:87.2px;" width="13" height="13" viewBox="0 0 13 13"><path d="M3.2 6.6L5.6 9L10 4.2" fill="none" stroke="#fff" stroke-width="1.3"/></svg>
<span class="t" style="left:665.6px;top:87.1px;font-size:12px;color:#0c1418;">Auto On</span>
<span class="t" style="left:492.0px;top:120.5px;font-size:12px;color:#0c1418;transform:scaleX(1.008);">Waveform:</span>
<div style="left:560.5px;top:117px;width:138.4px;height:21px;background:#fff;border:1px solid #fff;"></div>
<span class="t" style="left:564.3px;top:121.19999999999999px;font-size:12px;color:#000;transform:scaleX(0.916);">Sine</span>
<svg class="a" style="left:685.6999999999999px;top:125.5px;" width="9" height="5" viewBox="0 0 9 5"><path d="M0.4 0.4L4.5 4.4L8.6 0.4" fill="none" stroke="#333" stroke-width="1"/></svg>
<svg class="a" style="left:561px;top:151px;" width="13.4" height="13.4" viewBox="0 0 13.4 13.4"><circle cx="6.7" cy="6.7" r="4.7" fill="#fff" stroke="#0f63bf" stroke-width="3.6"/></svg>
<span class="t" style="left:580.4px;top:150.5px;font-size:12px;color:#0c1418;transform:scaleX(0.973);">High Performance Sine Generator</span>
<div style="left:592px;top:175.4px;width:13px;height:12.4px;background:#f3f3f3;border:1px solid #767676;border-radius:3px;"></div>
<span class="t" style="left:611.0px;top:174.9px;font-size:12px;color:#0c1418;transform:scaleX(0.970);">Precision Tune</span>
<svg class="a" style="left:561px;top:201px;" width="13.4" height="13.4" viewBox="0 0 13.4 13.4"><circle cx="6.6" cy="6.5" r="5.9" fill="#f5f5f5" stroke="#6a6a6a" stroke-width="1"/></svg>
<span class="t" style="left:580.2px;top:201px;font-size:12px;color:#0c1418;transform:scaleX(0.952);">DAC Generator</span>
<div style="left:460px;top:230.5px;width:238px;height:74px;border:1px solid #97a9b0;"></div>
<div style="left:560px;top:239.8px;width:13px;height:13px;background:#0f63bf;border-radius:3px;"></div>
<svg class="a" style="left:560px;top:239.8px;" width="13" height="13" viewBox="0 0 13 13"><path d="M3.2 6.6L5.6 9L10 4.2" fill="none" stroke="#fff" stroke-width="1.3"/></svg>
<span class="t" style="left:579.2px;top:240px;font-size:12px;color:#0c1418;transform:scaleX(0.914);">Levels Track Ch1</span>
<span class="t" style="left:563.0px;top:260.6px;font-size:12px;color:#0c1418;transform:scaleX(0.924);">Level</span>
<span class="t" style="left:526.4px;top:282.2px;font-size:12px;color:#0c1418;transform:scaleX(0.915);">Ch1:</span>
<div style="left:560.5px;top:278.5px;width:112px;height:22px;background:#fff;border:1px solid #7f9198;"></div>
<span class="t" style="left:563.5px;top:281.7px;font-size:12px;color:#000;transform:scaleX(0.941);">7.940 uVrms</span>
<svg class="a" style="left:659.3px;top:287.5px;" width="9" height="5" viewBox="0 0 9 5"><path d="M0.4 0.4L4.5 4.4L8.6 0.4" fill="none" stroke="#333" stroke-width="1"/></svg>
<div style="left:674.4px;top:278.2px;width:16.8px;height:11.3px;background:linear-gradient(#7a9dad,#5d8394);border:1px solid #3f6273;border-radius:2px;"></div>
<div style="left:674.4px;top:289.5px;width:16.8px;height:11.3px;background:linear-gradient(#7a9dad,#5d8394);border:1px solid #3f6273;border-radius:2px;"></div>
<svg class="a" style="left:678.3px;top:280.8px;" width="9" height="5.5" viewBox="0 0 9 5.5"><path d="M0 5.5L4.5 0L9 5.5Z" fill="#e6eef1"/></svg>
<svg class="a" style="left:678.3px;top:292.3px;" width="9" height="5.5" viewBox="0 0 9 5.5"><path d="M0 0L4.5 5.5L9 0Z" fill="#e6eef1"/></svg>
<span class="t" style="left:492.3px;top:312.7px;font-size:12px;color:#0c1418;transform:scaleX(0.955);">Frequency:</span>
<div style="left:560.5px;top:308.5px;width:112px;height:22px;background:#fff;border:1px solid #7f9198;"></div>
<span class="t" style="left:563.5px;top:311.7px;font-size:12px;color:#000;transform:scaleX(0.913);">1.00000 kHz</span>
<svg class="a" style="left:659.3px;top:317.5px;" width="9" height="5" viewBox="0 0 9 5"><path d="M0.4 0.4L4.5 4.4L8.6 0.4" fill="none" stroke="#333" stroke-width="1"/></svg>
<div style="left:674.4px;top:308.2px;width:16.8px;height:11.3px;background:linear-gradient(#7a9dad,#5d8394);border:1px solid #3f6273;border-radius:2px;"></div>
<div style="left:674.4px;top:319.5px;width:16.8px;height:11.3px;background:linear-gradient(#7a9dad,#5d8394);border:1px solid #3f6273;border-radius:2px;"></div>
<svg class="a" style="left:678.3px;top:310.8px;" width="9" height="5.5" viewBox="0 0 9 5.5"><path d="M0 5.5L4.5 0L9 5.5Z" fill="#e6eef1"/></svg>
<svg class="a" style="left:678.3px;top:322.3px;" width="9" height="5.5" viewBox="0 0 9 5.5"><path d="M0 0L4.5 5.5L9 0Z" fill="#e6eef1"/></svg>
<span class="t" style="left:460.5px;top:347.9px;font-size:12px;color:#0c1418;transform:scaleX(0.944);">Channels:</span>
<div style="left:457.0px;top:371.4px;width:14.6px;height:15.4px;background:linear-gradient(#7199a9,#4a7585);border:1px solid #3f6677;border-radius:2px;"></div>
<span class="t" style="left:461.2px;top:373.3px;font-size:11px;color:#fff;font-weight:bold;">1</span>
<div style="left:472.3px;top:371.4px;width:14.6px;height:15.4px;background:linear-gradient(#7199a9,#4a7585);border:1px solid #3f6677;border-radius:2px;"></div>
<span class="t" style="left:476.5px;top:373.3px;font-size:11px;color:#fff;font-weight:bold;">2</span>
<span class="t" style="left:458.3px;top:401.2px;font-size:15.5px;color:#fff;font-weight:bold;transform:scaleX(1.037);text-shadow:1px 1px 1px rgba(0,0,0,.35);">Analyzer</span>
<div style="left:454px;top:423px;width:347px;height:684px;background:#b4c9ce;"></div>
<span class="t" style="left:463.8px;top:429.7px;font-size:11px;color:#000;font-weight:bold;">•</span>
<span class="t" style="left:472.0px;top:428.7px;font-size:12.5px;color:#000;font-weight:bold;transform:scaleX(1.016);">Settled Readings</span>
<div style="left:561.5px;top:454.8px;width:80.6px;height:21.2px;background:#fafafa;border-radius:3px;"></div>
<svg class="a" style="left:564px;top:457px;" width="16" height="16" viewBox="0 0 16 16"><rect width="16" height="16" fill="#35505f"/><path d="M14.00 6.90 L14.00 9.10 L12.35 9.15 L11.89 10.26 L13.02 11.47 L11.47 13.02 L10.26 11.89 L9.15 12.35 L9.10 14.00 L6.90 14.00 L6.85 12.35 L5.74 11.89 L4.53 13.02 L2.98 11.47 L4.11 10.26 L3.65 9.15 L2.00 9.10 L2.00 6.90 L3.65 6.85 L4.11 5.74 L2.98 4.53 L4.53 2.98 L5.74 4.11 L6.85 3.65 L6.90 2.00 L9.10 2.00 L9.15 3.65 L10.26 4.11 L11.47 2.98 L13.02 4.53 L11.89 5.74 L12.35 6.85Z M10.00 8.00 A2.0 2.0 0 1 0 6.00 8.00 A2.0 2.0 0 1 0 10.00 8.00Z" fill="#fff" fill-rule="evenodd"/></svg>
<span class="t" style="left:583.2px;top:459.2px;font-size:12px;color:#000;transform:scaleX(0.956);">Settings...</span>
<div style="left:460px;top:485px;width:240px;height:1px;background:#e6edef;"></div>
<span class="t" style="left:463.8px;top:492.6px;font-size:11px;color:#000;font-weight:bold;">•</span>
<span class="t" style="left:472.0px;top:491.6px;font-size:12.5px;color:#000;font-weight:bold;transform:scaleX(1.107);">THD+N</span>
<span class="t" style="left:474.3px;top:520.9px;font-size:12px;color:#0c1418;transform:scaleX(1.020);">Notch Tuning:</span>
<div style="left:560.5px;top:517px;width:138.4px;height:21px;background:#fff;border:1px solid #fff;"></div>
<span class="t" style="left:564.3px;top:521.2px;font-size:12px;color:#000;transform:scaleX(0.964);">Generator Frequency</span>
<svg class="a" style="left:685.6999999999999px;top:525.5px;" width="9" height="5" viewBox="0 0 9 5"><path d="M0.4 0.4L4.5 4.4L8.6 0.4" fill="none" stroke="#333" stroke-width="1"/></svg>
<span class="t" style="left:492.3px;top:549.9px;font-size:12px;color:#0c1418;transform:scaleX(1.018);">Weighting:</span>
<div style="left:560.5px;top:546px;width:138.4px;height:21px;background:#fff;border:1px solid #fff;"></div>
<span class="t" style="left:564.3px;top:550.2px;font-size:12px;color:#000;transform:scaleX(1.011);">None</span>
<svg class="a" style="left:685.6999999999999px;top:554.5px;" width="9" height="5" viewBox="0 0 9 5"><path d="M0.4 0.4L4.5 4.4L8.6 0.4" fill="none" stroke="#333" stroke-width="1"/></svg>
<div style="left:460px;top:575px;width:240px;height:1px;background:#e6edef;"></div>
<span class="t" style="left:463.8px;top:582.6px;font-size:11px;color:#000;font-weight:bold;">•</span>
<span class="t" style="left:472.0px;top:581.6px;font-size:12.5px;color:#000;font-weight:bold;">Bandpass Filter</span>
<span class="t" style="left:494.3px;top:610.9px;font-size:12px;color:#0c1418;transform:scaleX(0.968);">Selectivity:</span>
<div style="left:560.5px;top:607px;width:138.4px;height:21px;background:#fff;border:1px solid #fff;"></div>
<span class="t" style="left:564.3px;top:611.2px;font-size:12px;color:#000;transform:scaleX(0.993);">1/3 octave</span>
<svg class="a" style="left:685.6999999999999px;top:615.5px;" width="9" height="5" viewBox="0 0 9 5"><path d="M0.4 0.4L4.5 4.4L8.6 0.4" fill="none" stroke="#333" stroke-width="1"/></svg>
<span class="t" style="left:487.3px;top:639.9px;font-size:12px;color:#0c1418;transform:scaleX(0.983);">Tune Mode:</span>
<div style="left:560.5px;top:636px;width:138.4px;height:21px;background:#fff;border:1px solid #fff;"></div>
<span class="t" style="left:564.3px;top:640.2px;font-size:12px;color:#000;transform:scaleX(0.964);">Generator Frequency</span>
<svg class="a" style="left:685.6999999999999px;top:644.5px;" width="9" height="5" viewBox="0 0 9 5"><path d="M0.4 0.4L4.5 4.4L8.6 0.4" fill="none" stroke="#333" stroke-width="1"/></svg>
<div style="left:460px;top:665px;width:240px;height:1px;background:#e6edef;"></div>
<span class="t" style="left:463.8px;top:672.6px;font-size:11px;color:#000;font-weight:bold;">•</span>
<span class="t" style="left:472.0px;top:671.6px;font-size:12.5px;color:#000;font-weight:bold;">Reference Channel</span>
<span class="t" style="left:503.3px;top:700.9px;font-size:12px;color:#0c1418;transform:scaleX(0.968);">Channel:</span>
<div style="left:560.5px;top:697px;width:48px;height:21px;background:#fff;border:1px solid #fff;"></div>
<span class="t" style="left:564.3px;top:701.2px;font-size:12px;color:#000;transform:scaleX(0.909);">Ch1</span>
<svg class="a" style="left:595.3px;top:705.5px;" width="9" height="5" viewBox="0 0 9 5"><path d="M0.4 0.4L4.5 4.4L8.6 0.4" fill="none" stroke="#333" stroke-width="1"/></svg>
<div style="left:460px;top:726px;width:240px;height:1px;background:#e6edef;"></div>
<span class="t" style="left:463.8px;top:733.6px;font-size:11px;color:#000;font-weight:bold;">•</span>
<span class="t" style="left:472.0px;top:732.6px;font-size:12.5px;color:#000;font-weight:bold;transform:scaleX(1.069);">IMD</span>
<span class="t" style="left:522.8px;top:754.9px;font-size:12px;color:#0c1418;transform:scaleX(0.920);">Type:</span>
<div style="left:560.5px;top:751px;width:138.4px;height:21px;background:#fff;border:1px solid #fff;"></div>
<span class="t" style="left:564.3px;top:755.2px;font-size:12px;color:#000;transform:scaleX(0.926);">SMPTE/DIN</span>
<svg class="a" style="left:685.6999999999999px;top:759.5px;" width="9" height="5" viewBox="0 0 9 5"><path d="M0.4 0.4L4.5 4.4L8.6 0.4" fill="none" stroke="#333" stroke-width="1"/></svg>
<span class="t" style="left:812.3px;top:56.2px;font-size:15.5px;color:#fff;font-weight:bold;transform:scaleX(1.027);text-shadow:1px 1px 1px rgba(0,0,0,.35);">Measurements</span>
<div style="left:808px;top:78px;width:1110px;height:24px;background:#f0f0f0;"></div>
<div style="left:808px;top:78px;width:116px;height:24px;background:#7db8e8;"></div>
<span class="t" style="left:813.3px;top:83px;font-size:13px;color:#5d7c8c;font-weight:bold;transform:scaleX(1.026);">Monitors/Meters</span>
<span class="t" style="left:929.2px;top:83px;font-size:13px;color:#467484;font-weight:bold;transform:scaleX(0.940);">Sweep</span>
<span class="t" style="left:980.7px;top:83px;font-size:13px;color:#467484;font-weight:bold;transform:scaleX(0.869);">FFT</span>
<span class="t" style="left:1014.5px;top:83px;font-size:13px;color:#467484;font-weight:bold;transform:scaleX(0.937);">Recorder</span>
<span class="t" style="left:1080.2px;top:83px;font-size:13px;color:#467484;font-weight:bold;transform:scaleX(0.970);">Continuous Sweep</span>
<span class="t" style="left:1206.5px;top:83px;font-size:13px;color:#467484;font-weight:bold;transform:scaleX(0.941);">Acoustic Response</span>
<span class="t" style="left:1332.5px;top:83px;font-size:13px;color:#467484;font-weight:bold;transform:scaleX(0.977);">Transfer Function</span>
<div style="left:808px;top:102px;width:1110px;height:25px;background:#d3d3d3;"></div>
<div style="left:808px;top:127px;width:1110px;height:374px;background:#ababab;"></div>
<svg class="a" style="left:811px;top:106px;" width="16" height="16" viewBox="0 0 16 16"><rect width="16" height="16" fill="#2f4b5d"/><path d="M14 4.6H5.6V2.2L1.6 5.6L5.6 9V6.6H14Z" fill="#fff"/><path d="M2 10.2H10.4V8L14.4 11.3L10.4 14.6V12.4H2Z" fill="none" stroke="#fff" stroke-width="1"/></svg>
<svg class="a" style="left:834px;top:106px;" width="16" height="16" viewBox="0 0 16 16"><rect width="16" height="16" fill="#3c5679"/><path d="M0 4.5H16M0 11.5H16M4 0V16M8 0V16M12 0V16" stroke="#5a7599" stroke-width="0.7"/><path d="M1 11H3.6V5H6.8V11H9.6V5H12.6V11H15.2" fill="none" stroke="#fff" stroke-width="1.5"/></svg>
<svg class="a" style="left:857px;top:106px;" width="16" height="16" viewBox="0 0 16 16"><rect width="16" height="16" fill="#2f4b5d"/><path d="M0 8H16M5.5 0V16M10.5 0V16" stroke="#566f82" stroke-width="0.7"/><path d="M1 3.4V12.6H3.6V3.4H6.2V12.6H8.8V3.4H11.4V12.6H14V3.4H15.4" fill="none" stroke="#fff" stroke-width="1.5"/></svg>
<svg class="a" style="left:880px;top:106px;" width="16" height="16" viewBox="0 0 16 16"><rect width="16" height="16" fill="#2f4b5d"/><circle cx="8" cy="8" r="5.3" fill="#fff"/><path d="M8 4.2V8.2L10.3 10.6" fill="none" stroke="#2f4b5d" stroke-width="1.4"/></svg>
<svg class="a" style="left:903px;top:106px;" width="16" height="16" viewBox="0 0 16 16"><rect width="16" height="16" fill="#2f4b5d"/><path d="M1 9.5C3 5.5 4.6 5 6.4 8S10 13.5 13.4 8.4L15 6.5" fill="none" stroke="#fff" stroke-width="1.4"/><rect x="10.6" y="1" width="2" height="6.4" fill="#fff"/><rect x="8.4" y="3.2" width="6.4" height="2" fill="#fff"/></svg>
<div style="left:926.6px;top:106px;width:1px;height:16px;background:#f4f4f4;"></div>
<div style="left:931px;top:106px;width:44px;height:15.4px;border-radius:3px;background:linear-gradient(#8af287,#43da40 50%,#2fc92d);border:1px solid #86e883;box-shadow:0 0 1px #3aa63a;"></div>
<span class="t" style="left:936.6px;top:107.7px;font-size:11px;color:#1c6a22;font-weight:bold;transform:scaleX(0.939);">ON</span>
<div style="left:958.8px;top:108.4px;width:13.6px;height:10.600000000000001px;border-radius:2px;background:linear-gradient(#a5f3a3 42%,#2fae33 50%,#3fc43f);border:1px solid #2a8a30;"></div>
<svg class="a" style="left:1899px;top:108px;" width="13" height="10" viewBox="0 0 13 10"><rect x="0" y="0" width="13" height="1.8" fill="#2f4678"/><path d="M6.5 4.1 L10.1 7.5 H7.8 V9.8 H5.2 V7.5 H2.9 Z" fill="#2f4678"/></svg>
<div style="left:811px;top:130px;width:549px;height:368px;background:#f0f1f1;"></div>
<div style="left:811px;top:130px;width:549px;height:24.6px;background:#dae5e8;"></div>
<div style="left:811px;top:154.6px;width:549px;height:1.2px;background:#a4abae;"></div>
<span class="t" style="left:815.4px;top:133.6px;font-size:15.5px;color:#000;font-weight:bold;transform:scaleX(0.976);">Scope</span>
<span class="t" style="left:870.4px;top:135.6px;font-size:12px;color:#0c1418;transform:scaleX(0.811);">X:</span>
<div style="left:884.9px;top:130.6px;width:75.2px;height:23.6px;background:#fff;"></div>
<div style="left:943.9px;top:130.6px;width:16.2px;height:23.6px;background:#f9f9f9;"></div>
<span class="t" style="left:889.4px;top:136.8px;font-size:11.5px;color:#000;">s</span>
<svg class="a" style="left:950.6999999999999px;top:141.2px;" width="5.6" height="3" viewBox="0 0 5.6 3"><path d="M0 0H5.6L2.8 3Z" fill="#111"/></svg>
<span class="t" style="left:964.5px;top:135.6px;font-size:12px;color:#0c1418;transform:scaleX(0.843);">Y:</span>
<div style="left:978.9px;top:130.6px;width:75.2px;height:23.6px;background:#fff;"></div>
<div style="left:1037.9px;top:130.6px;width:16.2px;height:23.6px;background:#f9f9f9;"></div>
<span class="t" style="left:983.7px;top:136.8px;font-size:11.5px;color:#000;">D</span>
<svg class="a" style="left:1044.7px;top:141.2px;" width="5.6" height="3" viewBox="0 0 5.6 3"><path d="M0 0H5.6L2.8 3Z" fill="#111"/></svg>
<svg class="a" style="left:1058.1px;top:134.2px;" width="16" height="16" viewBox="0 0 16 16"><rect width="16" height="16" fill="#2f4b5d"/><path d="M14.00 6.90 L14.00 9.10 L12.35 9.15 L11.89 10.26 L13.02 11.47 L11.47 13.02 L10.26 11.89 L9.15 12.35 L9.10 14.00 L6.90 14.00 L6.85 12.35 L5.74 11.89 L4.53 13.02 L2.98 11.47 L4.11 10.26 L3.65 9.15 L2.00 9.10 L2.00 6.90 L3.65 6.85 L4.11 5.74 L2.98 4.53 L4.53 2.98 L5.74 4.11 L6.85 3.65 L6.90 2.00 L9.10 2.00 L9.15 3.65 L10.26 4.11 L11.47 2.98 L13.02 4.53 L11.89 5.74 L12.35 6.85Z M10.00 8.00 A2.0 2.0 0 1 0 6.00 8.00 A2.0 2.0 0 1 0 10.00 8.00Z" fill="#fff" fill-rule="evenodd"/></svg>
<div style="left:1333.4px;top:133px;width:1px;height:19px;background:#f7f9fa;"></div>
<svg class="a" style="left:1340.6px;top:135.6px;" width="12.6" height="12.6" viewBox="0 0 13 13"><path d="M5.5 2.2H1.2V11.8H10.8V7.5" fill="none" stroke="#1f3f8f" stroke-width="2"/><path d="M6.2 0.4H12.6V6.8L10.4 4.6L6.6 8.4L4.6 6.4L8.4 2.6Z" fill="#1f3f8f"/></svg>
<div style="left:1365.8px;top:130px;width:549.2px;height:368px;background:#f0f1f1;"></div>
<div style="left:1365.8px;top:130px;width:549.2px;height:24.6px;background:#dae5e8;"></div>
<div style="left:1365.8px;top:154.6px;width:549.2px;height:1.2px;background:#a4abae;"></div>
<span class="t" style="left:1370.2px;top:133.6px;font-size:15.5px;color:#000;font-weight:bold;transform:scaleX(0.852);">FFT</span>
<span class="t" style="left:1404.0px;top:135.6px;font-size:12px;color:#0c1418;transform:scaleX(0.811);">X:</span>
<div style="left:1418.5px;top:130.6px;width:75.2px;height:23.6px;background:#fff;"></div>
<div style="left:1477.5px;top:130.6px;width:16.2px;height:23.6px;background:#f9f9f9;"></div>
<span class="t" style="left:1423.0px;top:136.8px;font-size:11.5px;color:#000;transform:scaleX(0.925);">Hz</span>
<svg class="a" style="left:1484.3px;top:141.2px;" width="5.6" height="3" viewBox="0 0 5.6 3"><path d="M0 0H5.6L2.8 3Z" fill="#111"/></svg>
<span class="t" style="left:1498.1px;top:135.6px;font-size:12px;color:#0c1418;transform:scaleX(0.843);">Y:</span>
<div style="left:1512.5px;top:130.6px;width:75.2px;height:23.6px;background:#fff;"></div>
<div style="left:1571.5px;top:130.6px;width:16.2px;height:23.6px;background:#f9f9f9;"></div>
<span class="t" style="left:1517.3px;top:136.8px;font-size:11.5px;color:#000;transform:scaleX(0.991);">dBFS</span>
<svg class="a" style="left:1578.3px;top:141.2px;" width="5.6" height="3" viewBox="0 0 5.6 3"><path d="M0 0H5.6L2.8 3Z" fill="#111"/></svg>
<svg class="a" style="left:1591.7px;top:134.2px;" width="16" height="16" viewBox="0 0 16 16"><rect width="16" height="16" fill="#2f4b5d"/><path d="M14.00 6.90 L14.00 9.10 L12.35 9.15 L11.89 10.26 L13.02 11.47 L11.47 13.02 L10.26 11.89 L9.15 12.35 L9.10 14.00 L6.90 14.00 L6.85 12.35 L5.74 11.89 L4.53 13.02 L2.98 11.47 L4.11 10.26 L3.65 9.15 L2.00 9.10 L2.00 6.90 L3.65 6.85 L4.11 5.74 L2.98 4.53 L4.53 2.98 L5.74 4.11 L6.85 3.65 L6.90 2.00 L9.10 2.00 L9.15 3.65 L10.26 4.11 L11.47 2.98 L13.02 4.53 L11.89 5.74 L12.35 6.85Z M10.00 8.00 A2.0 2.0 0 1 0 6.00 8.00 A2.0 2.0 0 1 0 10.00 8.00Z" fill="#fff" fill-rule="evenodd"/></svg>
<div style="left:1888.4px;top:133px;width:1px;height:19px;background:#f7f9fa;"></div>
<svg class="a" style="left:1895.6px;top:135.6px;" width="12.6" height="12.6" viewBox="0 0 13 13"><path d="M5.5 2.2H1.2V11.8H10.8V7.5" fill="none" stroke="#1f3f8f" stroke-width="2"/><path d="M6.2 0.4H12.6V6.8L10.4 4.6L6.6 8.4L4.6 6.4L8.4 2.6Z" fill="#1f3f8f"/></svg>
<div style="left:815px;top:159.6px;width:540px;height:334.4px;background:#fff;"></div>
<svg class="a" style="left:0;top:0" width="1920" height="520" viewBox="0 0 1920 520"><path d="M885.5 174.5V461.5" stroke="#eaeaea" stroke-width="1"/><path d="M909.5 174.5V461.5" stroke="#c9c9c9" stroke-width="1"/><path d="M932.5 174.5V461.5" stroke="#eaeaea" stroke-width="1"/><path d="M955.5 174.5V461.5" stroke="#c9c9c9" stroke-width="1"/><path d="M979.5 174.5V461.5" stroke="#eaeaea" stroke-width="1"/><path d="M1002.5 174.5V461.5" stroke="#c9c9c9" stroke-width="1"/><path d="M1025.5 174.5V461.5" stroke="#eaeaea" stroke-width="1"/><path d="M1049.5 174.5V461.5" stroke="#c9c9c9" stroke-width="1"/><path d="M1072.5 174.5V461.5" stroke="#eaeaea" stroke-width="1"/><path d="M1096.5 174.5V461.5" stroke="#c9c9c9" stroke-width="1"/><path d="M1119.5 174.5V461.5" stroke="#eaeaea" stroke-width="1"/><path d="M1142.5 174.5V461.5" stroke="#c9c9c9" stroke-width="1"/><path d="M1166.5 174.5V461.5" stroke="#eaeaea" stroke-width="1"/><path d="M1189.5 174.5V461.5" stroke="#c9c9c9" stroke-width="1"/><path d="M1212.5 174.5V461.5" stroke="#eaeaea" stroke-width="1"/><path d="M1236.5 174.5V461.5" stroke="#c9c9c9" stroke-width="1"/><path d="M1259.5 174.5V461.5" stroke="#eaeaea" stroke-width="1"/><path d="M1282.5 174.5V461.5" stroke="#c9c9c9" stroke-width="1"/><path d="M1306.5 174.5V461.5" stroke="#eaeaea" stroke-width="1"/><path d="M862.5 449.5H1329.5" stroke="#c9c9c9" stroke-width="1"/><path d="M862.5 427.5H1329.5" stroke="#c9c9c9" stroke-width="1"/><path d="M862.5 405.5H1329.5" stroke="#c9c9c9" stroke-width="1"/><path d="M862.5 383.5H1329.5" stroke="#c9c9c9" stroke-width="1"/><path d="M862.5 361.5H1329.5" stroke="#c9c9c9" stroke-width="1"/><path d="M862.5 340.5H1329.5" stroke="#c9c9c9" stroke-width="1"/><path d="M862.5 318.5H1329.5" stroke="#c9c9c9" stroke-width="1"/><path d="M862.5 296.5H1329.5" stroke="#c9c9c9" stroke-width="1"/><path d="M862.5 274.5H1329.5" stroke="#c9c9c9" stroke-width="1"/><path d="M862.5 252.5H1329.5" stroke="#c9c9c9" stroke-width="1"/><path d="M862.5 230.5H1329.5" stroke="#c9c9c9" stroke-width="1"/><path d="M862.5 209.5H1329.5" stroke="#c9c9c9" stroke-width="1"/><path d="M862.5 187.5H1329.5" stroke="#c9c9c9" stroke-width="1"/><path d="M863.0 300.1 L863.0 291.7 L863.3 294.3 L863.3 301.7 L863.7 305.3 L863.7 277.8 L864.0 302.4 L864.0 323.7 L864.3 343.9 L864.3 317.4 L864.6 335.3 L864.6 357.8 L865.0 337.3 L865.0 315.7 L865.3 293.7 L865.3 312.1 L865.6 303.9 L865.6 289.3 L866.0 288.5 L866.0 302.3 L866.3 322.2 L866.3 296.0 L866.6 321.7 L866.6 342.6 L867.0 353.8 L867.0 326.0 L867.3 322.4 L867.3 339.9 L867.6 325.2 L867.6 304.5 L867.9 286.9 L867.9 305.2 L868.3 313.3 L868.3 289.2 L868.6 304.4 L868.6 334.6 L868.9 343.2 L868.9 318.1 L869.3 338.1 L869.3 347.8 L869.6 346.1 L869.6 320.1 L869.9 296.8 L869.9 322.0 L870.3 305.8 L870.3 279.8 L870.6 286.9 L870.6 311.1 L870.9 321.1 L870.9 295.5 L871.2 318.5 L871.2 355.8 L871.6 345.3 L871.6 326.9 L871.9 312.5 L871.9 340.9 L872.2 321.0 L872.2 300.9 L872.6 284.8 L872.6 310.3 L872.9 303.9 L872.9 289.9 L873.2 305.4 L873.2 332.9 L873.6 342.4 L873.6 314.4 L873.9 336.4 L873.9 359.4 L874.2 344.5 L874.2 308.9 L874.5 294.3 L874.5 335.9 L874.9 306.0 L874.9 278.0 L875.2 279.1 L875.2 296.0 L875.5 334.7 L875.5 296.1 L875.9 321.9 L875.9 339.6 L876.2 355.5 L876.2 330.8 L876.5 323.4 L876.5 351.6 L876.9 331.0 L876.9 292.5 L877.2 284.1 L877.2 309.0 L877.5 310.5 L877.5 280.9 L877.8 292.9 L877.8 329.7 L878.2 340.7 L878.2 310.6 L878.5 332.2 L878.5 348.5 L878.8 344.4 L878.8 324.3 L879.2 313.1 L879.2 329.0 L879.5 314.4 L879.5 285.5 L879.8 274.9 L879.8 297.8 L880.2 319.8 L880.2 289.2 L880.5 311.3 L880.5 345.9 L880.8 350.6 L880.8 330.0 L881.1 325.3 L881.1 346.8 L881.5 322.1 L881.5 298.9 L881.8 293.2 L881.8 306.8 L882.1 305.8 L882.1 280.2 L882.5 291.6 L882.5 310.1 L882.8 353.5 L882.8 313.5 L883.1 329.5 L883.1 355.2 L883.5 354.6 L883.5 331.4 L883.8 302.1 L883.8 322.5 L884.1 311.0 L884.1 286.3 L884.4 272.5 L884.4 316.1 L884.8 310.2 L884.8 287.6 L885.1 310.6 L885.1 350.4 L885.4 357.4 L885.4 332.8 L885.8 333.3 L885.8 342.6 L886.1 328.7 L886.1 310.5 L886.4 294.8 L886.4 309.6 L886.8 300.2 L886.8 285.3 L887.1 278.0 L887.1 314.8 L887.4 350.7 L887.4 314.5 L887.7 330.5 L887.7 346.7 L888.1 340.6 L888.1 332.7 L888.4 302.8 L888.4 343.5 L888.7 313.7 L888.7 292.4 L889.1 282.8 L889.1 302.0 L889.4 308.7 L889.4 282.4 L889.7 312.7 L889.7 328.0 L890.1 347.5 L890.1 335.8 L890.4 329.3 L890.4 344.6 L890.7 329.9 L890.7 307.4 L891.0 293.3 L891.0 318.4 L891.4 303.2 L891.4 284.9 L891.7 284.3 L891.7 311.4 L892.0 335.9 L892.0 300.2 L892.4 323.8 L892.4 352.8 L892.7 352.6 L892.7 328.3 L893.0 313.7 L893.0 335.9 L893.4 325.0 L893.4 296.6 L893.7 291.8 L893.7 310.0 L894.0 307.7 L894.0 289.5 L894.3 305.1 L894.3 339.4 L894.7 347.6 L894.7 329.4 L895.0 325.6 L895.0 350.9 L895.3 349.2 L895.3 315.3 L895.7 299.9 L895.7 321.8 L896.0 292.8 L896.0 283.9 L896.3 293.1 L896.3 303.4 L896.7 329.4 L896.7 312.8 L897.0 328.5 L897.0 350.0 L897.3 348.8 L897.3 336.3 L897.6 309.2 L897.6 338.0 L898.0 312.5 L898.0 289.6 L898.3 282.1 L898.3 303.8 L898.6 310.4 L898.6 292.1 L899.0 302.6 L899.0 330.4 L899.3 353.2 L899.3 329.6 L899.6 329.3 L899.6 344.2 L900.0 353.9 L900.0 311.1 L900.3 295.7 L900.3 308.7 L900.6 300.9 L900.6 284.6 L900.9 288.7 L900.9 307.5 L901.3 322.0 L901.3 308.3 L901.6 319.1 L901.6 341.5 L901.9 347.3 L901.9 334.0 L902.3 313.8 L902.3 340.0 L902.6 310.2 L902.6 298.4 L902.9 287.8 L902.9 308.4 L903.3 309.3 L903.3 280.1 L903.6 304.7 L903.6 322.7 L903.9 347.9 L903.9 329.4 L904.2 334.7 L904.2 350.3 L904.6 343.5 L904.6 324.9 L904.9 299.7 L904.9 329.8 L905.2 303.5 L905.2 283.9 L905.6 288.9 L905.6 301.2 L905.9 321.8 L905.9 301.0 L906.2 314.2 L906.2 342.6 L906.6 351.7 L906.6 332.5 L906.9 314.0 L906.9 336.8 L907.2 323.3 L907.2 303.3 L907.5 284.9 L907.5 304.1 L907.9 297.7 L907.9 285.8 L908.2 306.3 L908.2 326.8 L908.5 343.1 L908.5 314.3 L908.9 329.5 L908.9 346.9 L909.2 339.5 L909.2 315.2 L909.5 303.7 L909.5 320.4 L909.9 307.0 L909.9 281.3 L910.2 284.7 L910.2 304.3 L910.5 334.9 L910.5 302.8 L910.8 321.5 L910.8 333.2 L911.2 345.6 L911.2 334.2 L911.5 324.2 L911.5 350.3 L911.8 323.0 L911.8 299.1 L912.2 288.4 L912.2 297.5 L912.5 307.5 L912.5 283.6 L912.8 295.9 L912.8 314.9 L913.2 334.5 L913.2 313.7 L913.5 325.9 L913.5 351.7 L913.8 342.2 L913.8 324.4 L914.1 305.6 L914.1 324.4 L914.5 304.5 L914.5 288.8 L914.8 277.1 L914.8 304.7 L915.1 327.0 L915.1 297.2 L915.5 320.5 L915.5 348.4 L915.8 352.2 L915.8 327.5 L916.1 332.8 L916.1 342.7 L916.5 325.5 L916.5 306.6 L916.8 293.4 L916.8 309.3 L917.1 304.6 L917.1 285.1 L917.4 295.8 L917.4 318.7 L917.8 346.7 L917.8 318.4 L918.1 323.1 L918.1 345.3 L918.4 358.7 L918.4 328.0 L918.8 303.2 L918.8 325.2 L919.1 303.6 L919.1 284.1 L919.4 278.5 L919.4 304.7 L919.8 318.7 L919.8 298.8 L920.1 327.7 L920.1 340.3 L920.4 345.4 L920.4 335.5 L920.7 326.8 L920.7 357.8 L921.1 342.0 L921.1 306.0 L921.4 287.1 L921.4 303.9 L921.7 311.2 L921.7 278.3 L922.1 291.1 L922.1 315.0 L922.4 327.3 L922.4 313.5 L922.7 326.5 L922.7 347.9 L923.1 342.1 L923.1 328.6 L923.4 306.1 L923.4 337.3 L923.7 314.0 L923.7 289.9 L924.0 279.9 L924.0 303.1 L924.4 309.6 L924.4 289.2 L924.7 312.7 L924.7 336.5 L925.0 345.2 L925.0 333.9 L925.4 329.2 L925.4 351.4 L925.7 329.8 L925.7 316.4 L926.0 286.3 L926.0 310.6 L926.4 309.8 L926.4 285.5 L926.7 295.8 L926.7 312.7 L927.0 338.7 L927.0 306.4 L927.3 322.7 L927.3 350.0 L927.7 347.1 L927.7 325.6 L928.0 310.2 L928.0 337.5 L928.3 313.2 L928.3 302.2 L928.7 291.7 L928.7 298.9 L929.0 303.5 L929.0 283.0 L929.3 302.3 L929.3 333.2 L929.7 352.7 L929.7 329.8 L930.0 322.3 L930.0 355.4 L930.3 338.0 L930.3 315.2 L930.6 300.2 L930.6 317.6 L931.0 300.1 L931.0 272.8 L931.3 285.8 L931.3 316.2 L931.6 354.3 L931.6 310.7 L932.0 327.3 L932.0 347.8 L932.3 348.6 L932.3 329.0 L932.6 312.8 L932.6 356.6 L933.0 307.1 L933.0 286.7 L933.3 284.0 L933.3 299.4 L933.6 303.9 L933.6 282.2 L933.9 302.6 L933.9 338.4 L934.3 347.2 L934.3 322.5 L934.6 327.7 L934.6 348.5 L934.9 332.8 L934.9 319.8 L935.3 286.7 L935.3 314.5 L935.6 307.3 L935.6 288.1 L935.9 280.3 L935.9 313.8 L936.3 327.2 L936.3 298.6 L936.6 323.4 L936.6 340.8 L936.9 349.0 L936.9 329.4 L937.2 322.6 L937.2 331.0 L937.6 317.1 L937.6 297.9 L937.9 287.7 L937.9 301.6 L938.2 314.0 L938.2 288.3 L938.6 295.9 L938.6 326.7 L938.9 342.9 L938.9 320.5 L939.2 334.4 L939.2 349.1 L939.6 337.7 L939.6 317.5 L939.9 292.7 L939.9 325.1 L940.2 301.9 L940.2 286.9 L940.5 285.7 L940.5 311.4 L940.9 327.4 L940.9 303.3 L941.2 323.8 L941.2 342.5 L941.5 349.7 L941.5 334.9 L941.9 318.2 L941.9 340.6 L942.2 320.3 L942.2 300.0 L942.5 289.6 L942.5 303.1 L942.9 305.9 L942.9 295.8 L943.2 303.3 L943.2 326.7 L943.5 343.1 L943.5 319.7 L943.8 322.1 L943.8 348.8 L944.2 338.3 L944.2 323.1 L944.5 306.7 L944.5 326.7 L944.8 307.0 L944.8 289.3 L945.2 287.5 L945.2 303.9 L945.5 325.7 L945.5 298.7 L945.8 316.9 L945.8 342.1 L946.2 346.6 L946.2 334.0 L946.5 317.6 L946.5 342.7 L946.8 324.5 L946.8 296.3 L947.1 278.5 L947.1 310.2 L947.5 303.8 L947.5 290.9 L947.8 298.2 L947.8 322.2 L948.1 347.2 L948.1 321.3 L948.5 330.8 L948.5 351.8 L948.8 340.4 L948.8 324.6 L949.1 300.8 L949.1 328.1 L949.5 305.2 L949.5 289.4 L949.8 285.3 L949.8 305.1 L950.1 319.0 L950.1 306.1 L950.4 321.9 L950.4 338.1 L950.8 342.5 L950.8 331.8 L951.1 326.4 L951.1 340.9 L951.4 326.4 L951.4 302.6 L951.8 290.5 L951.8 305.4 L952.1 305.8 L952.1 288.2 L952.4 301.6 L952.4 316.7 L952.8 344.4 L952.8 313.2 L953.1 331.8 L953.1 345.0 L953.4 343.0 L953.4 322.0 L953.7 305.3 L953.7 324.1 L954.1 303.5 L954.1 287.0 L954.4 289.2 L954.4 303.6 L954.7 324.7 L954.7 294.6 L955.1 310.6 L955.1 334.9 L955.4 347.6 L955.4 332.7 L955.7 326.7 L955.7 342.4 L956.1 328.4 L956.1 304.3 L956.4 290.6 L956.4 308.7 L956.7 300.5 L956.7 287.5 L957.0 302.2 L957.0 317.4 L957.4 337.4 L957.4 319.1 L957.7 333.5 L957.7 357.6 L958.0 341.7 L958.0 326.4 L958.4 293.7 L958.4 328.4 L958.7 309.3 L958.7 285.3 L959.0 290.3 L959.0 301.7 L959.4 316.9 L959.4 286.8 L959.7 312.7 L959.7 344.4 L960.0 350.4 L960.0 327.0 L960.3 327.6 L960.3 349.0 L960.7 326.1 L960.7 304.8 L961.0 287.5 L961.0 321.7 L961.3 302.7 L961.3 281.6 L961.7 291.1 L961.7 314.3 L962.0 334.5 L962.0 316.1 L962.3 325.5 L962.3 342.5 L962.7 345.4 L962.7 324.1 L963.0 311.4 L963.0 345.9 L963.3 302.4 L963.3 287.8 L963.6 281.0 L963.6 313.4 L964.0 328.4 L964.0 297.6 L964.3 294.6 L964.3 343.0 L964.6 354.2 L964.6 333.8 L965.0 328.0 L965.0 341.7 L965.3 332.1 L965.3 313.3 L965.6 286.7 L965.6 310.5 L966.0 300.2 L966.0 291.1 L966.3 285.1 L966.3 307.7 L966.6 334.6 L966.6 315.3 L966.9 333.4 L966.9 347.9 L967.3 353.4 L967.3 331.0 L967.6 303.3 L967.6 330.6 L967.9 310.7 L967.9 293.9 L968.3 282.5 L968.3 300.6 L968.6 301.3 L968.6 281.4 L968.9 307.4 L968.9 347.7 L969.3 359.7 L969.3 330.8 L969.6 328.0 L969.6 339.8 L969.9 329.4 L969.9 318.3 L970.2 291.1 L970.2 325.4 L970.6 310.0 L970.6 284.1 L970.9 282.3 L970.9 313.6 L971.2 328.6 L971.2 294.1 L971.6 329.8 L971.6 343.8 L971.9 350.3 L971.9 337.2 L972.2 317.0 L972.2 332.6 L972.6 323.0 L972.6 298.3 L972.9 276.0 L972.9 304.2 L973.2 301.2 L973.2 288.2 L973.5 296.2 L973.5 334.2 L973.9 345.1 L973.9 324.5 L974.2 337.8 L974.2 350.0 L974.5 348.2 L974.5 304.0 L974.9 295.8 L974.9 315.4 L975.2 300.0 L975.2 288.6 L975.5 283.8 L975.5 317.2 L975.9 328.0 L975.9 304.8 L976.2 324.5 L976.2 348.5 L976.5 348.6 L976.5 328.1 L976.8 311.2 L976.8 335.0 L977.2 317.5 L977.2 296.0 L977.5 286.8 L977.5 302.0 L977.8 314.3 L977.8 287.4 L978.2 311.5 L978.2 330.3 L978.5 349.5 L978.5 319.7 L978.8 332.5 L978.8 349.7 L979.2 340.2 L979.2 319.0 L979.5 302.6 L979.5 318.7 L979.8 308.0 L979.8 291.2 L980.1 289.3 L980.1 306.3 L980.5 317.2 L980.5 303.6 L980.8 322.9 L980.8 347.1 L981.1 348.4 L981.1 330.3 L981.5 313.2 L981.5 337.3 L981.8 322.9 L981.8 306.7 L982.1 285.9 L982.1 307.7 L982.5 300.4 L982.5 284.7 L982.8 310.5 L982.8 321.9 L983.1 341.6 L983.1 320.9 L983.4 336.7 L983.4 351.2 L983.8 341.4 L983.8 320.6 L984.1 297.5 L984.1 326.7 L984.4 309.9 L984.4 283.6 L984.8 290.3 L984.8 304.7 L985.1 318.9 L985.1 302.2 L985.4 315.9 L985.4 349.6 L985.8 354.4 L985.8 336.2 L986.1 312.6 L986.1 355.0 L986.4 325.9 L986.4 305.0 L986.7 288.5 L986.7 308.8 L987.1 303.2 L987.1 283.1 L987.4 293.8 L987.4 326.3 L987.7 339.5 L987.7 325.3 L988.1 326.5 L988.1 349.3 L988.4 340.3 L988.4 324.0 L988.7 304.0 L988.7 322.5 L989.1 310.4 L989.1 282.5 L989.4 287.8 L989.4 311.5 L989.7 335.2 L989.7 292.9 L990.0 316.9 L990.0 336.1 L990.4 346.3 L990.4 337.5 L990.7 314.1 L990.7 349.8 L991.0 324.8 L991.0 308.4 L991.4 283.7 L991.4 302.5 L991.7 298.7 L991.7 285.3 L992.0 292.3 L992.0 325.2 L992.4 349.1 L992.4 304.9 L992.7 335.6 L992.7 361.2 L993.0 344.9 L993.0 315.5 L993.3 297.4 L993.3 333.2 L993.7 318.9 L993.7 268.4 L994.0 262.6 L994.0 303.7 L994.3 332.1 L994.3 276.9 L994.7 314.5 L994.7 340.8 L995.0 366.9 L995.0 337.9 L995.3 324.4 L995.3 355.0 L995.7 324.4 L995.7 293.3 L996.0 274.2 L996.0 307.5 L996.3 296.0 L996.3 287.3 L996.6 288.0 L996.6 307.9 L997.0 347.1 L997.0 304.1 L997.3 324.8 L997.3 347.4 L997.6 343.2 L997.6 321.4 L998.0 299.8 L998.0 348.9 L998.3 309.8 L998.3 266.2 L998.6 281.6 L998.6 297.1 L999.0 315.6 L999.0 298.4 L999.3 319.0 L999.3 326.1 L999.6 354.5 L999.6 338.1 L999.9 316.5 L999.9 341.4 L1000.3 341.9 L1000.3 304.7 L1000.6 285.6 L1000.6 304.3 L1000.9 300.5 L1000.9 282.4 L1001.3 284.6 L1001.3 314.7 L1001.6 337.1 L1001.6 315.1 L1001.9 328.7 L1001.9 353.8 L1002.3 351.8 L1002.3 319.5 L1002.6 305.6 L1002.6 335.0 L1002.9 322.0 L1002.9 285.9 L1003.2 282.5 L1003.2 301.8 L1003.6 315.8 L1003.6 289.0 L1003.9 308.5 L1003.9 332.3 L1004.2 342.7 L1004.2 331.0 L1004.6 329.8 L1004.6 348.8 L1004.9 332.2 L1004.9 305.4 L1005.2 293.7 L1005.2 307.7 L1005.6 302.3 L1005.6 281.1 L1005.9 295.7 L1005.9 315.3 L1006.2 328.6 L1006.2 309.4 L1006.5 327.8 L1006.5 338.5 L1006.9 353.5 L1006.9 333.2 L1007.2 314.5 L1007.2 337.6 L1007.5 312.9 L1007.5 299.7 L1007.9 285.5 L1007.9 312.6 L1008.2 314.3 L1008.2 293.1 L1008.5 294.2 L1008.5 332.1 L1008.9 348.8 L1008.9 329.7 L1009.2 324.4 L1009.2 344.1 L1009.5 333.9 L1009.5 317.4 L1009.8 290.9 L1009.8 322.9 L1010.2 307.8 L1010.2 283.6 L1010.5 284.5 L1010.5 309.4 L1010.8 329.1 L1010.8 298.0 L1011.2 331.5 L1011.2 356.7 L1011.5 347.2 L1011.5 327.8 L1011.8 314.6 L1011.8 341.4 L1012.2 317.5 L1012.2 288.8 L1012.5 278.6 L1012.5 301.7 L1012.8 310.2 L1012.8 290.7 L1013.1 307.2 L1013.1 328.2 L1013.5 342.1 L1013.5 328.1 L1013.8 334.0 L1013.8 355.7 L1014.1 344.7 L1014.1 315.4 L1014.5 289.2 L1014.5 321.0 L1014.8 299.1 L1014.8 282.8 L1015.1 288.3 L1015.1 306.4 L1015.5 329.3 L1015.5 307.9 L1015.8 330.5 L1015.8 338.7 L1016.1 352.5 L1016.1 324.4 L1016.4 316.4 L1016.4 340.1 L1016.8 319.8 L1016.8 301.0 L1017.1 280.8 L1017.1 301.1 L1017.4 304.0 L1017.4 286.1 L1017.8 305.5 L1017.8 321.3 L1018.1 339.1 L1018.1 329.9 L1018.4 330.8 L1018.4 339.0 L1018.8 337.2 L1018.8 315.5 L1019.1 300.3 L1019.1 323.3 L1019.4 304.0 L1019.4 287.7 L1019.7 294.3 L1019.7 307.2 L1020.1 321.7 L1020.1 300.6 L1020.4 325.2 L1020.4 348.0 L1020.7 347.8 L1020.7 335.2 L1021.1 325.3 L1021.1 343.0 L1021.4 326.8 L1021.4 296.0 L1021.7 283.1 L1021.7 305.3 L1022.1 300.2 L1022.1 282.3 L1022.4 295.5 L1022.4 324.2 L1022.7 336.5 L1022.7 316.8 L1023.0 332.8 L1023.0 350.3 L1023.4 342.1 L1023.4 324.4 L1023.7 299.5 L1023.7 324.0 L1024.0 297.2 L1024.0 287.5 L1024.4 282.5 L1024.4 300.8 L1024.7 330.0 L1024.7 295.0 L1025.0 319.9 L1025.0 342.0 L1025.4 350.0 L1025.4 331.1 L1025.7 322.5 L1025.7 341.9 L1026.0 323.8 L1026.0 308.3 L1026.3 287.8 L1026.3 302.2 L1026.7 303.3 L1026.7 283.3 L1027.0 298.8 L1027.0 324.4 L1027.3 341.6 L1027.3 321.6 L1027.7 328.6 L1027.7 349.9 L1028.0 341.7 L1028.0 313.7 L1028.3 303.5 L1028.3 322.0 L1028.7 301.9 L1028.7 282.4 L1029.0 292.4 L1029.0 303.7 L1029.3 317.8 L1029.3 292.9 L1029.6 307.6 L1029.6 344.0 L1030.0 351.0 L1030.0 329.9 L1030.3 320.5 L1030.3 345.7 L1030.6 331.4 L1030.6 301.0 L1031.0 293.0 L1031.0 316.2 L1031.3 302.8 L1031.3 286.5 L1031.6 301.7 L1031.6 326.2 L1032.0 330.8 L1032.0 317.4 L1032.3 329.0 L1032.3 349.0 L1032.6 344.8 L1032.6 329.9 L1032.9 304.4 L1032.9 334.0 L1033.3 325.5 L1033.3 287.5 L1033.6 282.7 L1033.6 300.4 L1033.9 316.8 L1033.9 297.5 L1034.3 317.7 L1034.3 337.8 L1034.6 344.8 L1034.6 332.0 L1034.9 328.0 L1034.9 348.5 L1035.3 334.0 L1035.3 308.9 L1035.6 289.6 L1035.6 316.1 L1035.9 298.1 L1035.9 274.7 L1036.2 294.0 L1036.2 317.4 L1036.6 330.4 L1036.6 318.7 L1036.9 328.8 L1036.9 343.1 L1037.2 347.8 L1037.2 323.7 L1037.6 309.9 L1037.6 327.3 L1037.9 313.1 L1037.9 290.3 L1038.2 284.8 L1038.2 299.0 L1038.6 308.3 L1038.6 289.9 L1038.9 318.9 L1038.9 327.7 L1039.2 347.1 L1039.2 332.5 L1039.5 326.6 L1039.5 348.1 L1039.9 331.2 L1039.9 300.7 L1040.2 296.3 L1040.2 308.4 L1040.5 297.2 L1040.5 288.9 L1040.9 290.8 L1040.9 308.9 L1041.2 333.9 L1041.2 312.4 L1041.5 330.2 L1041.5 344.2 L1041.9 344.5 L1041.9 337.3 L1042.2 310.2 L1042.2 328.2 L1042.5 318.5 L1042.5 294.9 L1042.8 290.3 L1042.8 301.7 L1043.2 309.2 L1043.2 291.1 L1043.5 314.3 L1043.5 334.9 L1043.8 346.4 L1043.8 322.0 L1044.2 325.2 L1044.2 356.7 L1044.5 340.4 L1044.5 318.1 L1044.8 296.0 L1044.8 323.5 L1045.2 304.8 L1045.2 288.9 L1045.5 285.6 L1045.5 305.4 L1045.8 336.3 L1045.8 308.6 L1046.1 326.2 L1046.1 345.9 L1046.5 348.9 L1046.5 330.7 L1046.8 312.9 L1046.8 337.2 L1047.1 316.2 L1047.1 299.3 L1047.5 293.6 L1047.5 304.9 L1047.8 308.7 L1047.8 292.2 L1048.1 308.5 L1048.1 326.8 L1048.5 344.5 L1048.5 330.9 L1048.8 327.8 L1048.8 349.7 L1049.1 336.8 L1049.1 308.1 L1049.4 293.6 L1049.4 317.9 L1049.8 303.3 L1049.8 294.8 L1050.1 293.0 L1050.1 310.4 L1050.4 326.0 L1050.4 314.4 L1050.8 323.8 L1050.8 334.8 L1051.1 350.5 L1051.1 330.5 L1051.4 316.4 L1051.4 338.6 L1051.8 318.1 L1051.8 299.4 L1052.1 277.0 L1052.1 318.3 L1052.4 313.5 L1052.4 292.1 L1052.7 316.2 L1052.7 332.3 L1053.1 351.4 L1053.1 325.7 L1053.4 327.6 L1053.4 336.4 L1053.7 334.9 L1053.7 308.4 L1054.1 296.5 L1054.1 318.3 L1054.4 307.4 L1054.4 279.6 L1054.7 283.3 L1054.7 312.3 L1055.1 331.4 L1055.1 305.1 L1055.4 317.5 L1055.4 349.4 L1055.7 352.4 L1055.7 337.3 L1056.0 316.2 L1056.0 341.4 L1056.4 335.4 L1056.4 297.8 L1056.7 278.0 L1056.7 292.2 L1057.0 327.3 L1057.0 287.0 L1057.4 301.9 L1057.4 332.2 L1057.7 359.6 L1057.7 316.1 L1058.0 329.4 L1058.0 345.5 L1058.4 354.7 L1058.4 326.7 L1058.7 289.4 L1058.7 336.0 L1059.0 301.5 L1059.0 275.3 L1059.3 290.0 L1059.3 320.5 L1059.7 323.4 L1059.7 299.0 L1060.0 329.0 L1060.0 342.4 L1060.3 360.2 L1060.3 331.8 L1060.7 317.0 L1060.7 340.6 L1061.0 322.9 L1061.0 293.9 L1061.3 284.6 L1061.3 304.3 L1061.7 302.7 L1061.7 282.1 L1062.0 301.8 L1062.0 319.2 L1062.3 348.5 L1062.3 311.0 L1062.6 328.1 L1062.6 351.9 L1063.0 342.6 L1063.0 321.2 L1063.3 308.2 L1063.3 328.6 L1063.6 312.6 L1063.6 283.0 L1064.0 287.8 L1064.0 302.5 L1064.3 317.0 L1064.3 307.7 L1064.6 323.0 L1064.6 346.7 L1065.0 347.7 L1065.0 333.9 L1065.3 321.1 L1065.3 342.4 L1065.6 333.5 L1065.6 297.9 L1065.9 281.4 L1065.9 302.8 L1066.3 303.3 L1066.3 291.9 L1066.6 300.8 L1066.6 315.0 L1066.9 346.6 L1066.9 322.6 L1067.3 331.6 L1067.3 347.9 L1067.6 339.5 L1067.6 321.1 L1067.9 306.6 L1067.9 328.9 L1068.3 302.4 L1068.3 290.6 L1068.6 286.5 L1068.6 299.8 L1068.9 312.0 L1068.9 293.6 L1069.2 319.3 L1069.2 334.3 L1069.6 351.7 L1069.6 327.7 L1069.9 325.8 L1069.9 345.1 L1070.2 330.1 L1070.2 307.5 L1070.6 298.1 L1070.6 304.6 L1070.9 297.7 L1070.9 286.1 L1071.2 291.8 L1071.2 324.7 L1071.6 332.6 L1071.6 323.8 L1071.9 332.9 L1071.9 352.2 L1072.2 340.6 L1072.2 317.5 L1072.5 305.9 L1072.5 334.3 L1072.9 309.7 L1072.9 279.4 L1073.2 284.1 L1073.2 302.7 L1073.5 313.3 L1073.5 302.3 L1073.9 311.7 L1073.9 334.0 L1074.2 356.7 L1074.2 325.8 L1074.5 333.4 L1074.5 342.9 L1074.9 334.1 L1074.9 310.8 L1075.2 288.1 L1075.2 306.9 L1075.5 305.0 L1075.5 286.1 L1075.8 291.2 L1075.8 318.4 L1076.2 335.5 L1076.2 311.7 L1076.5 326.5 L1076.5 350.7 L1076.8 343.8 L1076.8 328.8 L1077.2 310.4 L1077.2 324.4 L1077.5 317.0 L1077.5 294.6 L1077.8 290.2 L1077.8 304.7 L1078.2 314.0 L1078.2 297.9 L1078.5 308.8 L1078.5 337.8 L1078.8 349.3 L1078.8 325.0 L1079.1 322.4 L1079.1 346.6 L1079.5 340.4 L1079.5 306.2 L1079.8 297.0 L1079.8 315.2 L1080.1 302.3 L1080.1 286.9 L1080.5 286.6 L1080.5 316.4 L1080.8 336.3 L1080.8 305.4 L1081.1 331.6 L1081.1 349.2 L1081.5 351.7 L1081.5 330.9 L1081.8 311.9 L1081.8 337.3 L1082.1 314.9 L1082.1 298.8 L1082.4 285.5 L1082.4 298.9 L1082.8 317.4 L1082.8 300.8 L1083.1 302.3 L1083.1 336.0 L1083.4 353.9 L1083.4 324.3 L1083.8 330.9 L1083.8 349.2 L1084.1 333.6 L1084.1 305.6 L1084.4 291.2 L1084.4 304.6 L1084.8 310.3 L1084.8 287.9 L1085.1 286.0 L1085.1 315.0 L1085.4 331.2 L1085.4 311.2 L1085.7 320.0 L1085.7 350.2 L1086.1 347.7 L1086.1 329.3 L1086.4 310.1 L1086.4 332.7 L1086.7 310.6 L1086.7 297.2 L1087.1 277.6 L1087.1 296.5 L1087.4 305.9 L1087.4 287.2 L1087.7 302.5 L1087.7 324.8 L1088.1 340.3 L1088.1 320.7 L1088.4 332.0 L1088.4 357.5 L1088.7 341.2 L1088.7 315.3 L1089.0 282.5 L1089.0 318.1 L1089.4 299.0 L1089.4 287.5 L1089.7 281.5 L1089.7 310.5 L1090.0 330.6 L1090.0 305.1 L1090.4 325.8 L1090.4 354.3 L1090.7 355.6 L1090.7 327.6 L1091.0 321.5 L1091.0 344.2 L1091.4 320.1 L1091.4 296.3 L1091.7 283.2 L1091.7 302.5 L1092.0 324.6 L1092.0 293.4 L1092.3 301.9 L1092.3 348.3 L1092.7 355.5 L1092.7 320.9 L1093.0 323.6 L1093.0 351.5 L1093.3 339.1 L1093.3 308.1 L1093.7 302.6 L1093.7 336.2 L1094.0 294.5 L1094.0 282.9 L1094.3 287.3 L1094.3 317.7 L1094.7 330.0 L1094.7 297.8 L1095.0 328.5 L1095.0 351.9 L1095.3 353.5 L1095.3 335.0 L1095.6 316.3 L1095.6 346.1 L1096.0 313.0 L1096.0 297.8 L1096.3 288.7 L1096.3 304.4 L1096.6 304.2 L1096.6 288.9 L1097.0 292.8 L1097.0 323.7 L1097.3 340.5 L1097.3 324.7 L1097.6 337.5 L1097.6 354.0 L1098.0 335.0 L1098.0 316.1 L1098.3 307.1 L1098.3 323.3 L1098.6 295.0 L1098.6 287.1 L1098.9 287.2 L1098.9 307.9 L1099.3 318.6 L1099.3 304.5 L1099.6 325.6 L1099.6 338.0 L1099.9 345.1 L1099.9 336.6 L1100.3 305.7 L1100.3 341.1 L1100.6 332.2 L1100.6 300.9 L1100.9 280.2 L1100.9 315.2 L1101.3 310.3 L1101.3 281.6 L1101.6 285.0 L1101.6 336.5 L1101.9 340.4 L1101.9 322.8 L1102.2 322.1 L1102.2 348.4 L1102.6 340.4 L1102.6 324.8 L1102.9 301.6 L1102.9 326.7 L1103.2 302.2 L1103.2 280.8 L1103.6 278.5 L1103.6 308.9 L1103.9 330.8 L1103.9 300.5 L1104.2 322.0 L1104.2 342.5 L1104.6 352.4 L1104.6 331.7 L1104.9 325.8 L1104.9 341.3 L1105.2 326.3 L1105.2 301.4 L1105.5 288.2 L1105.5 300.6 L1105.9 301.3 L1105.9 284.3 L1106.2 291.4 L1106.2 321.3 L1106.5 342.1 L1106.5 316.6 L1106.9 330.9 L1106.9 352.2 L1107.2 345.8 L1107.2 328.1 L1107.5 305.5 L1107.5 333.9 L1107.9 308.0 L1107.9 292.8 L1108.2 277.3 L1108.2 303.9 L1108.5 324.8 L1108.5 302.1 L1108.8 321.6 L1108.8 334.9 L1109.2 349.0 L1109.2 331.4 L1109.5 324.8 L1109.5 347.9 L1109.8 331.0 L1109.8 296.4 L1110.2 287.5 L1110.2 303.1 L1110.5 303.4 L1110.5 280.3 L1110.8 298.7 L1110.8 318.7 L1111.2 336.3 L1111.2 307.1 L1111.5 324.4 L1111.5 355.9 L1111.8 346.6 L1111.8 319.9 L1112.1 299.6 L1112.1 333.8 L1112.5 313.9 L1112.5 293.6 L1112.8 275.4 L1112.8 307.0 L1113.1 323.4 L1113.1 291.0 L1113.5 315.7 L1113.5 357.3 L1113.8 354.8 L1113.8 330.3 L1114.1 326.5 L1114.1 352.2 L1114.5 327.7 L1114.5 307.5 L1114.8 286.8 L1114.8 315.1 L1115.1 301.0 L1115.1 277.7 L1115.4 281.1 L1115.4 312.7 L1115.8 340.9 L1115.8 306.5 L1116.1 324.4 L1116.1 347.7 L1116.4 354.4 L1116.4 324.0 L1116.8 314.1 L1116.8 334.8 L1117.1 322.2 L1117.1 289.7 L1117.4 276.0 L1117.4 306.0 L1117.8 314.2 L1117.8 287.3 L1118.1 320.8 L1118.1 336.9 L1118.4 350.5 L1118.4 313.7 L1118.7 332.1 L1118.7 346.6 L1119.1 331.1 L1119.1 318.7 L1119.4 294.2 L1119.4 317.8 L1119.7 313.1 L1119.7 289.7 L1120.1 293.6 L1120.1 309.5 L1120.4 335.4 L1120.4 311.1 L1120.7 329.0 L1120.7 350.2 L1121.1 344.7 L1121.1 323.3 L1121.4 308.2 L1121.4 339.8 L1121.7 319.1 L1121.7 286.1 L1122.0 281.9 L1122.0 300.2 L1122.4 315.2 L1122.4 287.0 L1122.7 309.6 L1122.7 328.8 L1123.0 354.4 L1123.0 329.1 L1123.4 322.1 L1123.4 350.7 L1123.7 336.8 L1123.7 310.7 L1124.0 294.9 L1124.0 318.6 L1124.4 305.5 L1124.4 290.9 L1124.7 286.0 L1124.7 309.7 L1125.0 334.6 L1125.0 302.3 L1125.3 329.8 L1125.3 344.5 L1125.7 345.8 L1125.7 329.0 L1126.0 302.3 L1126.0 336.5 L1126.3 314.1 L1126.3 292.0 L1126.7 292.0 L1126.7 303.3 L1127.0 306.2 L1127.0 291.2 L1127.3 304.0 L1127.3 322.9 L1127.7 349.1 L1127.7 322.9 L1128.0 329.6 L1128.0 354.6 L1128.3 346.1 L1128.3 322.0 L1128.6 288.0 L1128.6 316.4 L1129.0 303.3 L1129.0 285.9 L1129.3 289.0 L1129.3 305.6 L1129.6 322.5 L1129.6 308.7 L1130.0 323.1 L1130.0 341.7 L1130.3 343.9 L1130.3 329.3 L1130.6 320.3 L1130.6 337.4 L1131.0 320.4 L1131.0 303.5 L1131.3 286.3 L1131.3 302.2 L1131.6 310.6 L1131.6 286.1 L1131.9 311.1 L1131.9 329.5 L1132.3 341.7 L1132.3 326.2 L1132.6 323.9 L1132.6 348.5 L1132.9 347.8 L1132.9 315.3 L1133.3 292.9 L1133.3 320.9 L1133.6 298.0 L1133.6 292.6 L1133.9 288.3 L1133.9 307.3 L1134.3 323.6 L1134.3 291.6 L1134.6 323.2 L1134.6 347.5 L1134.9 353.1 L1134.9 331.8 L1135.2 324.3 L1135.2 349.7 L1135.6 329.3 L1135.6 297.1 L1135.9 286.8 L1135.9 309.3 L1136.2 309.6 L1136.2 284.4 L1136.6 298.3 L1136.6 322.8 L1136.9 340.2 L1136.9 314.5 L1137.2 329.1 L1137.2 350.1 L1137.6 337.1 L1137.6 312.9 L1137.9 290.3 L1137.9 328.8 L1138.2 302.6 L1138.2 277.4 L1138.5 285.0 L1138.5 302.2 L1138.9 323.9 L1138.9 296.3 L1139.2 313.2 L1139.2 338.5 L1139.5 348.3 L1139.5 336.6 L1139.9 318.6 L1139.9 340.9 L1140.2 334.6 L1140.2 290.7 L1140.5 286.9 L1140.5 307.3 L1140.9 310.6 L1140.9 283.6 L1141.2 284.9 L1141.2 333.8 L1141.5 351.8 L1141.5 315.1 L1141.8 341.8 L1141.8 356.0 L1142.2 336.4 L1142.2 327.3 L1142.5 285.6 L1142.5 326.3 L1142.8 311.9 L1142.8 287.9 L1143.2 282.8 L1143.2 300.5 L1143.5 318.2 L1143.5 302.3 L1143.8 316.8 L1143.8 343.8 L1144.2 354.1 L1144.2 324.8 L1144.5 322.9 L1144.5 333.9 L1144.8 328.9 L1144.8 300.2 L1145.1 284.8 L1145.1 314.2 L1145.5 296.5 L1145.5 278.3 L1145.8 293.3 L1145.8 337.0 L1146.1 345.2 L1146.1 318.2 L1146.5 327.5 L1146.5 352.7 L1146.8 343.3 L1146.8 330.1 L1147.1 310.3 L1147.1 342.2 L1147.5 312.3 L1147.5 279.5 L1147.8 282.4 L1147.8 297.1 L1148.1 319.0 L1148.1 283.3 L1148.4 321.1 L1148.4 345.5 L1148.8 357.5 L1148.8 338.0 L1149.1 323.8 L1149.1 343.9 L1149.4 336.6 L1149.4 303.0 L1149.8 281.0 L1149.8 301.6 L1150.1 312.6 L1150.1 290.1 L1150.4 301.7 L1150.4 319.3 L1150.8 341.9 L1150.8 299.0 L1151.1 323.9 L1151.1 347.2 L1151.4 340.4 L1151.4 320.0 L1151.7 304.6 L1151.7 335.6 L1152.1 308.6 L1152.1 296.5 L1152.4 274.2 L1152.4 300.7 L1152.7 316.4 L1152.7 292.9 L1153.1 310.9 L1153.1 337.4 L1153.4 350.6 L1153.4 335.9 L1153.7 334.5 L1153.7 344.4 L1154.1 331.3 L1154.1 300.7 L1154.4 282.2 L1154.4 318.2 L1154.7 297.9 L1154.7 277.9 L1155.0 293.5 L1155.0 311.7 L1155.4 340.9 L1155.4 311.3 L1155.7 326.1 L1155.7 348.2 L1156.0 347.7 L1156.0 307.6 L1156.4 317.8 L1156.4 332.7 L1156.7 310.5 L1156.7 296.3 L1157.0 284.1 L1157.0 305.7 L1157.4 311.2 L1157.4 292.9 L1157.7 309.5 L1157.7 333.4 L1158.0 346.8 L1158.0 326.2 L1158.3 317.3 L1158.3 353.7 L1158.7 325.6 L1158.7 311.4 L1159.0 286.8 L1159.0 309.8 L1159.3 303.7 L1159.3 267.1 L1159.7 289.2 L1159.7 311.3 L1160.0 331.6 L1160.0 308.3 L1160.3 318.8 L1160.3 346.8 L1160.7 341.7 L1160.7 324.5 L1161.0 311.9 L1161.0 330.5 L1161.3 320.5 L1161.3 290.4 L1161.6 285.9 L1161.6 304.7 L1162.0 311.7 L1162.0 272.4 L1162.3 307.8 L1162.3 340.5 L1162.6 342.1 L1162.6 320.3 L1163.0 329.8 L1163.0 343.5 L1163.3 335.7 L1163.3 318.9 L1163.6 294.0 L1163.6 310.3 L1164.0 298.6 L1164.0 289.9 L1164.3 295.4 L1164.3 307.0 L1164.6 322.5 L1164.6 306.4 L1164.9 328.0 L1164.9 350.7 L1165.3 349.5 L1165.3 325.1 L1165.6 321.4 L1165.6 336.7 L1165.9 316.9 L1165.9 296.7 L1166.3 284.2 L1166.3 303.1 L1166.6 309.6 L1166.6 280.4 L1166.9 311.7 L1166.9 330.8 L1167.3 340.2 L1167.3 328.7 L1167.6 334.7 L1167.6 345.0 L1167.9 334.4 L1167.9 314.9 L1168.2 291.1 L1168.2 323.7 L1168.6 300.2 L1168.6 282.7 L1168.9 286.4 L1168.9 310.0 L1169.2 332.0 L1169.2 301.0 L1169.6 327.7 L1169.6 339.5 L1169.9 356.3 L1169.9 329.1 L1170.2 315.5 L1170.2 341.7 L1170.6 327.3 L1170.6 301.6 L1170.9 279.6 L1170.9 306.1 L1171.2 307.4 L1171.2 287.2 L1171.5 313.5 L1171.5 330.5 L1171.9 341.4 L1171.9 319.0 L1172.2 325.2 L1172.2 354.6 L1172.5 337.4 L1172.5 308.6 L1172.9 300.5 L1172.9 321.0 L1173.2 300.6 L1173.2 284.8 L1173.5 294.9 L1173.5 306.0 L1173.9 338.3 L1173.9 299.6 L1174.2 323.6 L1174.2 338.9 L1174.5 349.2 L1174.5 335.4 L1174.8 319.6 L1174.8 351.9 L1175.2 317.3 L1175.2 299.0 L1175.5 289.8 L1175.5 310.4 L1175.8 317.1 L1175.8 288.6 L1176.2 295.2 L1176.2 327.3 L1176.5 353.8 L1176.5 317.4 L1176.8 332.3 L1176.8 347.7 L1177.2 339.4 L1177.2 318.7 L1177.5 292.8 L1177.5 321.6 L1177.8 310.6 L1177.8 292.5 L1178.1 293.4 L1178.1 308.7 L1178.5 321.8 L1178.5 307.8 L1178.8 322.9 L1178.8 350.4 L1179.1 348.3 L1179.1 330.3 L1179.5 319.9 L1179.5 342.0 L1179.8 332.7 L1179.8 301.1 L1180.1 290.8 L1180.1 302.9 L1180.5 300.6 L1180.5 287.8 L1180.8 294.6 L1180.8 323.6 L1181.1 334.1 L1181.1 311.5 L1181.4 330.5 L1181.4 343.8 L1181.8 340.9 L1181.8 322.5 L1182.1 301.2 L1182.1 321.8 L1182.4 307.8 L1182.4 289.3 L1182.8 285.9 L1182.8 299.7 L1183.1 318.4 L1183.1 293.9 L1183.4 321.2 L1183.4 337.3 L1183.8 345.7 L1183.8 337.0 L1184.1 322.2 L1184.1 342.4 L1184.4 319.0 L1184.4 304.7 L1184.7 287.6 L1184.7 309.6 L1185.1 300.6 L1185.1 282.8 L1185.4 296.4 L1185.4 321.7 L1185.7 343.2 L1185.7 321.0 L1186.1 322.7 L1186.1 341.1 L1186.4 339.1 L1186.4 322.8 L1186.7 302.6 L1186.7 331.9 L1187.1 315.6 L1187.1 286.4 L1187.4 280.7 L1187.4 309.2 L1187.7 311.1 L1187.7 295.1 L1188.0 319.4 L1188.0 348.6 L1188.4 347.1 L1188.4 330.5 L1188.7 327.9 L1188.7 345.3 L1189.0 327.6 L1189.0 302.2 L1189.4 298.7 L1189.4 305.7 L1189.7 297.7 L1189.7 283.5 L1190.0 289.8 L1190.0 315.2 L1190.4 332.7 L1190.4 309.7 L1190.7 329.6 L1190.7 360.1 L1191.0 347.2 L1191.0 331.0 L1191.3 305.0 L1191.3 338.3 L1191.7 319.9 L1191.7 282.7 L1192.0 286.1 L1192.0 310.3 L1192.3 324.1 L1192.3 293.0 L1192.7 312.1 L1192.7 337.2 L1193.0 347.5 L1193.0 330.0 L1193.3 330.0 L1193.3 353.5 L1193.7 327.6 L1193.7 299.1 L1194.0 287.8 L1194.0 313.5 L1194.3 308.8 L1194.3 288.8 L1194.6 279.8 L1194.6 327.0 L1195.0 330.6 L1195.0 313.9 L1195.3 327.6 L1195.3 342.1 L1195.6 341.1 L1195.6 322.9 L1196.0 309.6 L1196.0 339.7 L1196.3 312.1 L1196.3 281.6 L1196.6 279.7 L1196.6 295.3 L1197.0 309.8 L1197.0 284.0 L1197.3 308.4 L1197.3 332.3 L1197.6 352.8 L1197.6 331.0 L1197.9 324.7 L1197.9 352.6 L1198.3 339.1 L1198.3 315.6 L1198.6 294.7 L1198.6 321.7 L1198.9 315.9 L1198.9 288.7 L1199.3 285.8 L1199.3 315.5 L1199.6 330.5 L1199.6 315.2 L1199.9 324.6 L1199.9 343.7 L1200.3 353.3 L1200.3 332.1 L1200.6 309.5 L1200.6 344.5 L1200.9 320.0 L1200.9 282.2 L1201.2 275.8 L1201.2 294.7 L1201.6 318.2 L1201.6 290.3 L1201.9 310.2 L1201.9 347.0 L1202.2 364.3 L1202.2 333.5 L1202.6 329.0 L1202.6 346.6 L1202.9 335.6 L1202.9 317.2 L1203.2 288.1 L1203.2 319.2 L1203.6 313.2 L1203.6 289.1 L1203.9 287.6 L1203.9 309.6 L1204.2 338.1 L1204.2 301.2 L1204.5 327.8 L1204.5 352.3 L1204.9 353.3 L1204.9 321.6 L1205.2 312.7 L1205.2 333.9 L1205.5 322.1 L1205.5 299.7 L1205.9 277.8 L1205.9 307.3 L1206.2 305.4 L1206.2 288.0 L1206.5 298.6 L1206.5 325.6 L1206.9 347.9 L1206.9 322.7 L1207.2 328.8 L1207.2 344.3 L1207.5 344.1 L1207.5 314.9 L1207.8 296.7 L1207.8 317.3 L1208.2 306.7 L1208.2 285.3 L1208.5 286.0 L1208.5 311.3 L1208.8 327.1 L1208.8 307.8 L1209.2 324.5 L1209.2 344.9 L1209.5 352.5 L1209.5 334.1 L1209.8 311.6 L1209.8 342.9 L1210.2 314.4 L1210.2 289.6 L1210.5 286.9 L1210.5 300.1 L1210.8 312.9 L1210.8 286.0 L1211.1 302.1 L1211.1 324.5 L1211.5 358.2 L1211.5 319.4 L1211.8 329.2 L1211.8 348.1 L1212.1 339.0 L1212.1 320.2 L1212.5 294.9 L1212.5 320.0 L1212.8 308.0 L1212.8 273.4 L1213.1 288.1 L1213.1 307.8 L1213.5 326.9 L1213.5 298.1 L1213.8 313.5 L1213.8 343.5 L1214.1 354.7 L1214.1 335.6 L1214.4 310.8 L1214.4 341.9 L1214.8 322.0 L1214.8 294.5 L1215.1 273.6 L1215.1 295.9 L1215.4 306.0 L1215.4 284.5 L1215.8 286.1 L1215.8 318.8 L1216.1 340.5 L1216.1 319.7 L1216.4 335.1 L1216.4 352.3 L1216.8 344.7 L1216.8 326.0 L1217.1 287.6 L1217.1 316.7 L1217.4 301.3 L1217.4 289.0 L1217.7 286.9 L1217.7 300.4 L1218.1 325.1 L1218.1 294.6 L1218.4 318.0 L1218.4 341.7 L1218.7 349.8 L1218.7 323.5 L1219.1 321.7 L1219.1 339.8 L1219.4 321.3 L1219.4 297.5 L1219.7 284.8 L1219.7 305.8 L1220.1 300.8 L1220.1 280.7 L1220.4 297.2 L1220.4 324.4 L1220.7 342.5 L1220.7 314.1 L1221.0 330.0 L1221.0 355.2 L1221.4 351.2 L1221.4 311.3 L1221.7 293.3 L1221.7 327.9 L1222.0 307.1 L1222.0 277.8 L1222.4 277.7 L1222.4 294.2 L1222.7 322.0 L1222.7 288.6 L1223.0 320.5 L1223.0 333.9 L1223.4 343.8 L1223.4 333.8 L1223.7 323.4 L1223.7 335.6 L1224.0 318.9 L1224.0 299.5 L1224.3 289.6 L1224.3 309.1 L1224.7 307.0 L1224.7 283.7 L1225.0 302.3 L1225.0 320.0 L1225.3 333.0 L1225.3 322.9 L1225.7 313.1 L1225.7 356.3 L1226.0 347.8 L1226.0 330.2 L1226.3 300.0 L1226.3 325.2 L1226.7 313.5 L1226.7 285.3 L1227.0 288.2 L1227.0 297.1 L1227.3 317.1 L1227.3 293.7 L1227.6 318.9 L1227.6 344.6 L1228.0 345.2 L1228.0 328.5 L1228.3 326.7 L1228.3 342.5 L1228.6 338.6 L1228.6 306.4 L1229.0 290.6 L1229.0 317.7 L1229.3 297.2 L1229.3 284.4 L1229.6 299.6 L1229.6 325.4 L1230.0 338.6 L1230.0 321.4 L1230.3 329.7 L1230.3 347.2 L1230.6 353.3 L1230.6 323.1 L1230.9 304.5 L1230.9 332.6 L1231.3 309.1 L1231.3 279.2 L1231.6 283.9 L1231.6 299.9 L1231.9 310.5 L1231.9 283.0 L1232.3 309.4 L1232.3 336.1 L1232.6 351.6 L1232.6 332.8 L1232.9 331.3 L1232.9 344.9 L1233.3 349.9 L1233.3 310.8 L1233.6 287.5 L1233.6 322.7 L1233.9 306.9 L1233.9 287.7 L1234.2 300.8 L1234.2 315.1 L1234.6 330.1 L1234.6 318.6 L1234.9 333.5 L1234.9 350.6 L1235.2 351.1 L1235.2 324.0 L1235.6 313.1 L1235.6 342.6 L1235.9 316.4 L1235.9 291.5 L1236.2 276.1 L1236.2 295.4 L1236.6 309.6 L1236.6 290.6 L1236.9 300.1 L1236.9 338.2 L1237.2 348.5 L1237.2 325.8 L1237.5 329.4 L1237.5 355.1 L1237.9 336.2 L1237.9 310.4 L1238.2 295.7 L1238.2 312.6 L1238.5 301.0 L1238.5 279.5 L1238.9 278.9 L1238.9 324.0 L1239.2 338.7 L1239.2 302.8 L1239.5 326.6 L1239.5 357.2 L1239.9 364.0 L1239.9 338.2 L1240.2 315.1 L1240.2 337.1 L1240.5 321.1 L1240.5 284.5 L1240.8 284.3 L1240.8 306.5 L1241.2 312.8 L1241.2 291.1 L1241.5 312.3 L1241.5 328.6 L1241.8 348.5 L1241.8 322.5 L1242.2 326.7 L1242.2 353.3 L1242.5 358.6 L1242.5 307.4 L1242.8 292.5 L1242.8 315.4 L1243.2 299.3 L1243.2 288.1 L1243.5 285.9 L1243.5 306.4 L1243.8 339.7 L1243.8 308.0 L1244.1 325.9 L1244.1 347.3 L1244.5 345.5 L1244.5 334.1 L1244.8 319.4 L1244.8 339.4 L1245.1 325.2 L1245.1 295.3 L1245.5 279.6 L1245.5 302.3 L1245.8 310.6 L1245.8 288.5 L1246.1 301.8 L1246.1 325.9 L1246.5 345.9 L1246.5 320.1 L1246.8 333.1 L1246.8 349.7 L1247.1 344.4 L1247.1 317.8 L1247.4 298.0 L1247.4 325.4 L1247.8 297.2 L1247.8 284.5 L1248.1 284.3 L1248.1 295.9 L1248.4 330.8 L1248.4 309.0 L1248.8 325.6 L1248.8 345.1 L1249.1 343.1 L1249.1 332.8 L1249.4 316.2 L1249.4 342.5 L1249.8 325.1 L1249.8 299.5 L1250.1 289.6 L1250.1 299.0 L1250.4 299.8 L1250.4 280.5 L1250.7 299.3 L1250.7 324.2 L1251.1 344.6 L1251.1 325.8 L1251.4 332.0 L1251.4 344.8 L1251.7 341.5 L1251.7 321.4 L1252.1 301.3 L1252.1 321.5 L1252.4 301.6 L1252.4 280.1 L1252.7 289.0 L1252.7 303.9 L1253.1 325.0 L1253.1 301.2 L1253.4 319.1 L1253.4 343.1 L1253.7 346.5 L1253.7 327.1 L1254.0 313.3 L1254.0 341.0 L1254.4 320.6 L1254.4 290.2 L1254.7 284.8 L1254.7 298.1 L1255.0 305.5 L1255.0 284.9 L1255.4 304.9 L1255.4 318.9 L1255.7 337.1 L1255.7 327.0 L1256.0 329.3 L1256.0 342.4 L1256.4 349.7 L1256.4 316.3 L1256.7 301.3 L1256.7 329.5 L1257.0 304.9 L1257.0 286.6 L1257.3 290.6 L1257.3 298.9 L1257.7 326.6 L1257.7 298.0 L1258.0 321.4 L1258.0 345.6 L1258.3 358.9 L1258.3 338.4 L1258.7 329.7 L1258.7 339.3 L1259.0 340.1 L1259.0 303.3 L1259.3 273.7 L1259.3 305.7 L1259.7 306.9 L1259.7 285.0 L1260.0 291.3 L1260.0 323.1 L1260.3 343.0 L1260.3 320.4 L1260.6 336.9 L1260.6 360.7 L1261.0 347.7 L1261.0 306.6 L1261.3 290.1 L1261.3 325.5 L1261.6 307.8 L1261.6 285.8 L1262.0 291.4 L1262.0 309.7 L1262.3 313.4 L1262.3 290.8 L1262.6 312.6 L1262.6 343.4 L1263.0 355.6 L1263.0 333.7 L1263.3 325.4 L1263.3 353.2 L1263.6 319.4 L1263.6 299.1 L1263.9 286.6 L1263.9 327.3 L1264.3 302.3 L1264.3 286.9 L1264.6 299.6 L1264.6 313.3 L1264.9 331.1 L1264.9 316.6 L1265.3 325.1 L1265.3 352.7 L1265.6 351.9 L1265.6 313.0 L1265.9 303.7 L1265.9 327.5 L1266.3 311.8 L1266.3 282.2 L1266.6 275.5 L1266.6 298.0 L1266.9 321.0 L1266.9 296.4 L1267.2 312.6 L1267.2 343.6 L1267.6 344.6 L1267.6 323.0 L1267.9 316.8 L1267.9 353.9 L1268.2 329.2 L1268.2 304.5 L1268.6 276.6 L1268.6 307.2 L1268.9 302.6 L1268.9 273.7 L1269.2 290.7 L1269.2 314.2 L1269.6 336.1 L1269.6 289.5 L1269.9 327.0 L1269.9 352.2 L1270.2 344.8 L1270.2 317.6 L1270.5 307.5 L1270.5 344.2 L1270.9 315.8 L1270.9 296.9 L1271.2 286.1 L1271.2 303.7 L1271.5 315.3 L1271.5 293.3 L1271.9 307.0 L1271.9 330.6 L1272.2 357.2 L1272.2 332.5 L1272.5 326.2 L1272.5 349.1 L1272.9 335.7 L1272.9 308.7 L1273.2 277.8 L1273.2 302.0 L1273.5 301.7 L1273.5 280.1 L1273.8 294.0 L1273.8 312.5 L1274.2 327.6 L1274.2 310.6 L1274.5 326.4 L1274.5 357.3 L1274.8 360.4 L1274.8 333.2 L1275.2 311.0 L1275.2 330.3 L1275.5 308.5 L1275.5 288.1 L1275.8 280.2 L1275.8 297.1 L1276.2 313.6 L1276.2 293.2 L1276.5 311.1 L1276.5 326.0 L1276.8 344.4 L1276.8 320.3 L1277.1 332.4 L1277.1 357.6 L1277.5 346.6 L1277.5 311.9 L1277.8 286.7 L1277.8 323.9 L1278.1 312.6 L1278.1 289.2 L1278.5 296.0 L1278.5 314.9 L1278.8 327.0 L1278.8 299.9 L1279.1 328.5 L1279.1 341.9 L1279.5 348.6 L1279.5 331.2 L1279.8 316.7 L1279.8 346.8 L1280.1 307.0 L1280.1 293.6 L1280.4 288.5 L1280.4 309.5 L1280.8 316.3 L1280.8 294.6 L1281.1 305.8 L1281.1 326.3 L1281.4 344.6 L1281.4 331.9 L1281.8 333.8 L1281.8 348.7 L1282.1 350.8 L1282.1 317.6 L1282.4 299.1 L1282.4 316.4 L1282.8 295.2 L1282.8 280.7 L1283.1 287.3 L1283.1 308.1 L1283.4 336.6 L1283.4 302.1 L1283.7 326.3 L1283.7 347.4 L1284.1 354.2 L1284.1 331.7 L1284.4 317.7 L1284.4 350.2 L1284.7 332.9 L1284.7 285.6 L1285.1 282.7 L1285.1 305.0 L1285.4 307.4 L1285.4 286.4 L1285.7 309.0 L1285.7 328.3 L1286.1 348.9 L1286.1 323.7 L1286.4 319.4 L1286.4 342.5 L1286.7 339.0 L1286.7 323.2 L1287.0 293.8 L1287.0 332.9 L1287.4 300.8 L1287.4 280.6 L1287.7 285.5 L1287.7 304.0 L1288.0 316.6 L1288.0 298.2 L1288.4 328.3 L1288.4 348.4 L1288.7 351.7 L1288.7 336.9 L1289.0 317.2 L1289.0 341.3 L1289.4 316.3 L1289.4 299.7 L1289.7 284.4 L1289.7 301.6 L1290.0 304.7 L1290.0 279.2 L1290.3 300.2 L1290.3 319.9 L1290.7 346.7 L1290.7 317.3 L1291.0 341.1 L1291.0 358.0 L1291.3 343.5 L1291.3 316.9 L1291.7 301.0 L1291.7 325.9 L1292.0 302.4 L1292.0 280.7 L1292.3 291.8 L1292.3 303.7 L1292.7 320.9 L1292.7 296.3 L1293.0 323.1 L1293.0 344.2 L1293.3 349.2 L1293.3 327.7 L1293.6 326.1 L1293.6 340.5 L1294.0 323.1 L1294.0 294.9 L1294.3 296.3 L1294.3 302.1 L1294.6 312.5 L1294.6 290.4 L1295.0 301.1 L1295.0 327.6 L1295.3 333.8 L1295.3 318.6 L1295.6 326.2 L1295.6 348.6 L1296.0 348.2 L1296.0 325.1 L1296.3 296.5 L1296.3 329.8 L1296.6 311.6 L1296.6 276.3 L1296.9 281.2 L1296.9 307.9 L1297.3 314.9 L1297.3 299.8 L1297.6 318.1 L1297.6 339.5 L1297.9 349.5 L1297.9 334.0 L1298.3 315.1 L1298.3 342.6 L1298.6 321.7 L1298.6 303.7 L1298.9 291.1 L1298.9 303.4 L1299.3 310.1 L1299.3 283.4 L1299.6 294.2 L1299.6 315.2 L1299.9 331.8 L1299.9 319.3 L1300.2 328.7 L1300.2 343.5 L1300.6 343.2 L1300.6 323.1 L1300.9 302.0 L1300.9 330.3 L1301.2 303.9 L1301.2 283.3 L1301.6 280.2 L1301.6 305.0 L1301.9 320.8 L1301.9 290.3 L1302.2 315.1 L1302.2 337.1 L1302.6 353.6 L1302.6 328.0 L1302.9 325.8 L1302.9 341.3 L1303.2 320.0 L1303.2 304.4 L1303.5 289.7 L1303.5 310.3 L1303.9 295.0 L1303.9 285.4 L1304.2 297.9 L1304.2 319.5 L1304.5 340.3 L1304.5 310.5 L1304.9 325.4 L1304.9 346.6 L1305.2 338.3 L1305.2 333.0 L1305.5 308.5 L1305.5 323.9 L1305.9 308.5 L1305.9 281.7 L1306.2 286.5 L1306.2 304.3 L1306.5 315.2 L1306.5 289.1 L1306.8 316.0 L1306.8 340.7 L1307.2 347.4 L1307.2 326.7 L1307.5 318.7 L1307.5 350.1 L1307.8 334.0 L1307.8 308.9 L1308.2 288.3 L1308.2 303.9 L1308.5 300.3 L1308.5 282.0 L1308.8 287.5 L1308.8 310.4 L1309.2 337.0 L1309.2 310.5 L1309.5 322.4 L1309.5 356.2 L1309.8 366.0 L1309.8 312.7 L1310.1 307.9 L1310.1 334.3 L1310.5 313.0 L1310.5 289.2 L1310.8 285.4 L1310.8 310.8 L1311.1 316.9 L1311.1 287.9 L1311.5 307.7 L1311.5 351.5 L1311.8 346.2 L1311.8 335.3 L1312.1 324.6 L1312.1 351.7 L1312.5 340.0 L1312.5 306.9 L1312.8 277.8 L1312.8 310.4 L1313.1 306.5 L1313.1 287.1 L1313.4 282.2 L1313.4 311.1 L1313.8 330.9 L1313.8 307.3 L1314.1 332.8 L1314.1 352.2 L1314.4 344.7 L1314.4 323.0 L1314.8 304.6 L1314.8 336.0 L1315.1 314.9 L1315.1 291.7 L1315.4 281.5 L1315.4 307.7 L1315.8 313.9 L1315.8 296.3 L1316.1 309.5 L1316.1 332.8 L1316.4 344.4 L1316.4 326.5 L1316.7 321.6 L1316.7 359.5 L1317.1 336.4 L1317.1 319.6 L1317.4 293.6 L1317.4 317.4 L1317.7 294.6 L1317.7 273.0 L1318.1 291.2 L1318.1 312.6 L1318.4 326.8 L1318.4 311.6 L1318.7 318.1 L1318.7 345.8 L1319.1 343.9 L1319.1 330.2 L1319.4 321.5 L1319.4 333.1 L1319.7 312.7 L1319.7 296.2 L1320.0 288.8 L1320.0 309.6 L1320.4 315.1 L1320.4 280.4 L1320.7 304.1 L1320.7 327.2 L1321.0 343.6 L1321.0 321.1 L1321.4 334.3 L1321.4 350.3 L1321.7 332.2 L1321.7 322.9 L1322.0 299.2 L1322.0 315.8 L1322.4 300.6 L1322.4 287.3 L1322.7 289.3 L1322.7 317.6 L1323.0 325.7 L1323.0 316.5 L1323.3 324.3 L1323.3 341.7 L1323.7 351.7 L1323.7 332.2 L1324.0 323.9 L1324.0 334.4 L1324.3 318.0 L1324.3 296.0 L1324.7 285.0 L1324.7 301.9 L1325.0 307.7 L1325.0 284.0 L1325.3 299.8 L1325.3 321.3 L1325.7 340.5 L1325.7 316.8 L1326.0 335.6 L1326.0 351.3 L1326.3 334.0 L1326.3 316.8 L1326.6 306.0 L1326.6 327.5 L1327.0 304.2 L1327.0 278.2 L1327.3 285.2 L1327.3 315.0 L1327.6 329.5 L1327.6 295.8 L1328.0 330.9 L1328.0 349.9 L1328.3 346.8 L1328.3 334.9 L1328.6 318.9 L1328.6 343.3 L1329.0 322.7 L1329.0 312.3" fill="none" stroke="#3d5a9a" stroke-width="0.8" opacity="0.95" stroke-linejoin="bevel"/><path d="M863.0 312.8 L863.0 299.5 L863.3 281.3 L863.3 304.8 L863.7 299.7 L863.7 286.3 L864.0 302.3 L864.0 330.9 L864.3 347.9 L864.3 321.8 L864.6 331.6 L864.6 349.4 L865.0 337.8 L865.0 311.8 L865.3 298.0 L865.3 323.0 L865.6 319.4 L865.6 281.0 L866.0 289.0 L866.0 303.9 L866.3 325.2 L866.3 306.6 L866.6 326.1 L866.6 343.1 L867.0 344.8 L867.0 324.9 L867.3 325.3 L867.3 336.1 L867.6 335.7 L867.6 295.4 L867.9 285.4 L867.9 304.4 L868.3 311.6 L868.3 285.0 L868.6 311.1 L868.6 322.2 L868.9 335.6 L868.9 316.2 L869.3 336.6 L869.3 350.6 L869.6 339.2 L869.6 310.2 L869.9 304.8 L869.9 319.2 L870.3 305.9 L870.3 285.3 L870.6 283.1 L870.6 305.1 L870.9 320.9 L870.9 299.8 L871.2 313.1 L871.2 332.9 L871.6 342.3 L871.6 330.8 L871.9 317.3 L871.9 348.8 L872.2 327.8 L872.2 306.9 L872.6 285.2 L872.6 301.3 L872.9 302.3 L872.9 284.4 L873.2 299.7 L873.2 313.5 L873.6 341.0 L873.6 317.1 L873.9 326.6 L873.9 346.2 L874.2 343.8 L874.2 329.3 L874.5 290.8 L874.5 320.8 L874.9 306.6 L874.9 284.1 L875.2 279.9 L875.2 297.9 L875.5 324.0 L875.5 285.9 L875.9 317.4 L875.9 345.1 L876.2 363.1 L876.2 330.0 L876.5 324.7 L876.5 344.0 L876.9 328.9 L876.9 306.7 L877.2 283.0 L877.2 304.1 L877.5 307.6 L877.5 268.1 L877.8 292.2 L877.8 322.4 L878.2 337.7 L878.2 309.2 L878.5 334.3 L878.5 363.0 L878.8 346.1 L878.8 319.4 L879.2 297.8 L879.2 318.7 L879.5 305.5 L879.5 291.9 L879.8 277.9 L879.8 314.7 L880.2 322.0 L880.2 296.0 L880.5 309.8 L880.5 331.6 L880.8 353.8 L880.8 331.3 L881.1 319.5 L881.1 351.5 L881.5 338.1 L881.5 294.8 L881.8 295.7 L881.8 307.4 L882.1 311.1 L882.1 283.9 L882.5 302.1 L882.5 319.2 L882.8 333.1 L882.8 300.2 L883.1 337.7 L883.1 348.5 L883.5 346.6 L883.5 326.1 L883.8 307.1 L883.8 332.8 L884.1 311.1 L884.1 290.2 L884.4 291.1 L884.4 298.1 L884.8 315.6 L884.8 291.2 L885.1 316.1 L885.1 334.7 L885.4 349.2 L885.4 330.8 L885.8 329.9 L885.8 342.5 L886.1 331.8 L886.1 307.4 L886.4 293.6 L886.4 307.3 L886.8 301.6 L886.8 289.9 L887.1 289.6 L887.1 315.2 L887.4 326.9 L887.4 316.4 L887.7 320.2 L887.7 346.8 L888.1 341.3 L888.1 328.4 L888.4 316.7 L888.4 332.9 L888.7 308.2 L888.7 285.9 L889.1 281.0 L889.1 297.0 L889.4 319.6 L889.4 298.4 L889.7 308.2 L889.7 338.7 L890.1 347.4 L890.1 319.9 L890.4 326.0 L890.4 345.6 L890.7 347.9 L890.7 311.2 L891.0 296.5 L891.0 321.7 L891.4 308.1 L891.4 280.3 L891.7 280.0 L891.7 314.1 L892.0 328.8 L892.0 311.9 L892.4 328.2 L892.4 354.3 L892.7 344.8 L892.7 334.4 L893.0 315.1 L893.0 342.6 L893.4 327.7 L893.4 289.4 L893.7 286.8 L893.7 301.4 L894.0 314.2 L894.0 286.1 L894.3 306.9 L894.3 332.8 L894.7 350.3 L894.7 332.9 L895.0 331.3 L895.0 342.8 L895.3 339.1 L895.3 317.7 L895.7 289.7 L895.7 329.7 L896.0 306.2 L896.0 284.7 L896.3 289.0 L896.3 302.2 L896.7 326.3 L896.7 305.0 L897.0 326.9 L897.0 344.7 L897.3 344.2 L897.3 327.8 L897.6 308.5 L897.6 338.9 L898.0 315.8 L898.0 296.9 L898.3 281.6 L898.3 306.2 L898.6 304.4 L898.6 285.5 L899.0 309.0 L899.0 328.0 L899.3 339.6 L899.3 322.4 L899.6 326.0 L899.6 348.8 L900.0 348.6 L900.0 309.1 L900.3 302.1 L900.3 311.4 L900.6 306.0 L900.6 290.0 L900.9 291.6 L900.9 304.2 L901.3 327.2 L901.3 299.7 L901.6 324.3 L901.6 342.7 L901.9 354.8 L901.9 329.5 L902.3 307.9 L902.3 337.3 L902.6 323.2 L902.6 295.0 L902.9 285.5 L902.9 301.7 L903.3 310.6 L903.3 293.6 L903.6 306.4 L903.6 323.1 L903.9 348.4 L903.9 317.0 L904.2 322.4 L904.2 348.8 L904.6 334.0 L904.6 319.2 L904.9 297.4 L904.9 325.0 L905.2 297.5 L905.2 288.5 L905.6 292.0 L905.6 300.2 L905.9 332.1 L905.9 300.2 L906.2 327.2 L906.2 338.7 L906.6 345.5 L906.6 331.6 L906.9 315.9 L906.9 348.6 L907.2 314.4 L907.2 299.7 L907.5 285.9 L907.5 304.2 L907.9 297.4 L907.9 280.4 L908.2 299.2 L908.2 324.0 L908.5 344.8 L908.5 320.6 L908.9 327.2 L908.9 342.4 L909.2 341.6 L909.2 316.6 L909.5 298.9 L909.5 319.0 L909.9 307.4 L909.9 282.0 L910.2 284.9 L910.2 305.9 L910.5 323.8 L910.5 302.7 L910.8 317.8 L910.8 338.7 L911.2 357.8 L911.2 333.3 L911.5 321.5 L911.5 346.8 L911.8 329.9 L911.8 306.8 L912.2 284.5 L912.2 310.7 L912.5 320.4 L912.5 283.9 L912.8 288.6 L912.8 321.1 L913.2 343.2 L913.2 318.1 L913.5 334.2 L913.5 352.5 L913.8 340.0 L913.8 317.1 L914.1 302.7 L914.1 334.4 L914.5 306.1 L914.5 282.1 L914.8 285.4 L914.8 316.8 L915.1 325.9 L915.1 296.2 L915.5 310.9 L915.5 336.3 L915.8 351.5 L915.8 322.2 L916.1 325.8 L916.1 351.1 L916.5 334.9 L916.5 307.0 L916.8 277.4 L916.8 302.1 L917.1 317.0 L917.1 274.1 L917.4 284.7 L917.4 322.3 L917.8 342.5 L917.8 321.7 L918.1 331.9 L918.1 357.8 L918.4 346.2 L918.4 326.1 L918.8 298.3 L918.8 332.9 L919.1 312.0 L919.1 289.2 L919.4 286.2 L919.4 303.6 L919.8 316.7 L919.8 292.1 L920.1 310.7 L920.1 333.6 L920.4 348.6 L920.4 326.6 L920.7 329.3 L920.7 345.8 L921.1 331.0 L921.1 304.3 L921.4 285.9 L921.4 314.6 L921.7 300.5 L921.7 276.5 L922.1 287.7 L922.1 323.0 L922.4 339.8 L922.4 311.4 L922.7 328.2 L922.7 346.9 L923.1 347.7 L923.1 324.3 L923.4 310.5 L923.4 334.6 L923.7 308.2 L923.7 281.8 L924.0 289.3 L924.0 298.6 L924.4 317.2 L924.4 291.5 L924.7 314.2 L924.7 333.3 L925.0 348.6 L925.0 336.8 L925.4 328.3 L925.4 342.6 L925.7 330.6 L925.7 308.4 L926.0 292.1 L926.0 317.6 L926.4 298.8 L926.4 284.0 L926.7 297.2 L926.7 311.5 L927.0 329.3 L927.0 304.8 L927.3 333.7 L927.3 346.0 L927.7 346.2 L927.7 330.8 L928.0 310.4 L928.0 336.4 L928.3 315.7 L928.3 295.4 L928.7 289.7 L928.7 298.7 L929.0 312.8 L929.0 289.5 L929.3 302.2 L929.3 335.9 L929.7 348.3 L929.7 330.2 L930.0 326.9 L930.0 345.5 L930.3 339.6 L930.3 305.8 L930.6 292.6 L930.6 315.7 L931.0 301.0 L931.0 281.1 L931.3 291.6 L931.3 305.8 L931.6 331.1 L931.6 299.8 L932.0 321.5 L932.0 349.1 L932.3 344.9 L932.3 331.5 L932.6 312.1 L932.6 330.5 L933.0 311.0 L933.0 297.3 L933.3 281.6 L933.3 292.1 L933.6 316.8 L933.6 287.6 L933.9 311.9 L933.9 325.9 L934.3 343.6 L934.3 322.3 L934.6 333.2 L934.6 350.6 L934.9 333.6 L934.9 317.8 L935.3 298.8 L935.3 307.3 L935.6 310.0 L935.6 283.4 L935.9 287.4 L935.9 307.2 L936.3 336.7 L936.3 309.0 L936.6 328.3 L936.6 347.6 L936.9 356.1 L936.9 322.7 L937.2 311.7 L937.2 336.4 L937.6 320.7 L937.6 293.4 L937.9 285.5 L937.9 300.4 L938.2 311.7 L938.2 291.4 L938.6 303.1 L938.6 328.1 L938.9 340.3 L938.9 327.5 L939.2 338.8 L939.2 349.1 L939.6 335.8 L939.6 322.5 L939.9 301.7 L939.9 317.3 L940.2 308.8 L940.2 280.7 L940.5 291.1 L940.5 306.1 L940.9 329.0 L940.9 296.4 L941.2 314.3 L941.2 341.8 L941.5 353.2 L941.5 329.3 L941.9 316.2 L941.9 338.9 L942.2 318.7 L942.2 302.3 L942.5 283.8 L942.5 312.5 L942.9 306.4 L942.9 292.1 L943.2 297.9 L943.2 323.1 L943.5 345.4 L943.5 323.0 L943.8 332.3 L943.8 353.6 L944.2 336.0 L944.2 321.0 L944.5 292.1 L944.5 330.1 L944.8 300.3 L944.8 278.8 L945.2 288.0 L945.2 308.0 L945.5 315.9 L945.5 306.2 L945.8 314.0 L945.8 336.3 L946.2 346.3 L946.2 338.7 L946.5 314.3 L946.5 343.5 L946.8 325.3 L946.8 303.2 L947.1 278.0 L947.1 300.0 L947.5 305.2 L947.5 285.7 L947.8 297.3 L947.8 324.5 L948.1 344.4 L948.1 317.0 L948.5 332.3 L948.5 348.5 L948.8 344.5 L948.8 317.3 L949.1 295.8 L949.1 322.2 L949.5 299.9 L949.5 289.4 L949.8 281.8 L949.8 309.0 L950.1 330.7 L950.1 301.6 L950.4 316.4 L950.4 346.0 L950.8 353.9 L950.8 323.7 L951.1 320.3 L951.1 351.4 L951.4 326.2 L951.4 302.7 L951.8 287.1 L951.8 311.3 L952.1 309.0 L952.1 292.8 L952.4 292.6 L952.4 326.1 L952.8 339.0 L952.8 316.5 L953.1 325.3 L953.1 351.4 L953.4 346.8 L953.4 326.9 L953.7 298.6 L953.7 323.8 L954.1 307.6 L954.1 288.9 L954.4 288.3 L954.4 298.8 L954.7 320.9 L954.7 294.4 L955.1 319.2 L955.1 337.1 L955.4 344.3 L955.4 321.8 L955.7 308.5 L955.7 351.1 L956.1 331.5 L956.1 304.2 L956.4 292.5 L956.4 306.1 L956.7 305.9 L956.7 287.7 L957.0 291.5 L957.0 313.0 L957.4 338.1 L957.4 306.4 L957.7 327.4 L957.7 346.7 L958.0 342.8 L958.0 326.8 L958.4 295.0 L958.4 328.2 L958.7 310.3 L958.7 285.0 L959.0 280.8 L959.0 304.0 L959.4 322.3 L959.4 294.2 L959.7 296.7 L959.7 345.8 L960.0 346.5 L960.0 330.1 L960.3 330.3 L960.3 354.5 L960.7 323.0 L960.7 299.5 L961.0 284.2 L961.0 316.5 L961.3 300.4 L961.3 278.1 L961.7 298.9 L961.7 315.9 L962.0 345.4 L962.0 309.9 L962.3 325.8 L962.3 362.0 L962.7 344.3 L962.7 335.8 L963.0 309.5 L963.0 341.3 L963.3 317.6 L963.3 292.4 L963.6 288.5 L963.6 300.9 L964.0 315.4 L964.0 289.7 L964.3 307.6 L964.3 338.0 L964.6 341.1 L964.6 325.5 L965.0 324.8 L965.0 341.8 L965.3 330.6 L965.3 314.0 L965.6 288.1 L965.6 317.7 L966.0 303.0 L966.0 290.2 L966.3 287.4 L966.3 322.1 L966.6 341.1 L966.6 306.3 L966.9 327.9 L966.9 355.9 L967.3 346.8 L967.3 328.8 L967.6 307.2 L967.6 331.6 L967.9 315.3 L967.9 295.2 L968.3 293.0 L968.3 303.4 L968.6 315.8 L968.6 289.8 L968.9 311.0 L968.9 329.4 L969.3 347.2 L969.3 332.8 L969.6 329.6 L969.6 351.5 L969.9 337.0 L969.9 314.8 L970.2 299.6 L970.2 321.5 L970.6 307.3 L970.6 289.4 L970.9 290.5 L970.9 320.5 L971.2 329.2 L971.2 313.6 L971.6 330.1 L971.6 353.3 L971.9 344.2 L971.9 331.4 L972.2 315.9 L972.2 338.4 L972.6 310.5 L972.6 295.4 L972.9 287.2 L972.9 302.6 L973.2 299.8 L973.2 284.5 L973.5 310.4 L973.5 328.1 L973.9 354.7 L973.9 326.4 L974.2 331.9 L974.2 350.2 L974.5 339.3 L974.5 320.0 L974.9 300.3 L974.9 326.8 L975.2 302.4 L975.2 286.6 L975.5 286.5 L975.5 306.2 L975.9 337.2 L975.9 300.8 L976.2 330.8 L976.2 346.3 L976.5 348.5 L976.5 330.4 L976.8 309.8 L976.8 354.2 L977.2 318.4 L977.2 289.3 L977.5 290.2 L977.5 300.5 L977.8 310.0 L977.8 286.9 L978.2 304.9 L978.2 318.8 L978.5 353.4 L978.5 312.5 L978.8 342.8 L978.8 353.0 L979.2 336.1 L979.2 316.0 L979.5 287.4 L979.5 327.7 L979.8 309.1 L979.8 285.4 L980.1 282.8 L980.1 312.2 L980.5 336.2 L980.5 302.5 L980.8 324.7 L980.8 348.4 L981.1 347.6 L981.1 328.1 L981.5 319.0 L981.5 330.8 L981.8 318.2 L981.8 295.8 L982.1 283.4 L982.1 312.3 L982.5 301.5 L982.5 291.2 L982.8 301.3 L982.8 323.9 L983.1 348.2 L983.1 329.5 L983.4 323.5 L983.4 340.7 L983.8 341.9 L983.8 325.4 L984.1 292.6 L984.1 318.1 L984.4 305.9 L984.4 277.7 L984.8 276.5 L984.8 307.2 L985.1 323.1 L985.1 304.3 L985.4 319.7 L985.4 337.9 L985.8 352.1 L985.8 330.0 L986.1 321.7 L986.1 348.3 L986.4 319.7 L986.4 304.7 L986.7 289.5 L986.7 305.0 L987.1 300.1 L987.1 289.9 L987.4 299.4 L987.4 330.7 L987.7 341.2 L987.7 325.3 L988.1 335.4 L988.1 353.7 L988.4 342.4 L988.4 321.8 L988.7 300.2 L988.7 325.7 L989.1 313.4 L989.1 276.4 L989.4 271.3 L989.4 308.4 L989.7 323.6 L989.7 288.7 L990.0 314.8 L990.0 339.2 L990.4 345.8 L990.4 326.8 L990.7 326.5 L990.7 335.9 L991.0 338.1 L991.0 298.5 L991.4 292.5 L991.4 308.2 L991.7 307.6 L991.7 266.2 L992.0 297.0 L992.0 311.4 L992.4 348.8 L992.4 310.3 L992.7 324.4 L992.7 342.8 L993.0 345.1 L993.0 309.5 L993.3 297.0 L993.3 338.5 L993.7 308.4 L993.7 287.4 L994.0 274.6 L994.0 305.9 L994.3 332.7 L994.3 293.6 L994.7 326.2 L994.7 354.6 L995.0 349.6 L995.0 322.3 L995.3 330.6 L995.3 349.7 L995.7 327.2 L995.7 305.6 L996.0 278.1 L996.0 304.0 L996.3 304.1 L996.3 284.1 L996.6 287.5 L996.6 314.2 L997.0 346.7 L997.0 314.9 L997.3 326.0 L997.3 355.8 L997.6 351.5 L997.6 328.9 L998.0 300.6 L998.0 347.5 L998.3 316.3 L998.3 297.2 L998.6 265.2 L998.6 308.3 L999.0 328.0 L999.0 298.8 L999.3 310.9 L999.3 336.2 L999.6 344.2 L999.6 328.3 L999.9 327.4 L999.9 350.2 L1000.3 323.3 L1000.3 309.8 L1000.6 290.1 L1000.6 310.0 L1000.9 296.2 L1000.9 283.8 L1001.3 279.1 L1001.3 322.6 L1001.6 327.2 L1001.6 312.5 L1001.9 321.7 L1001.9 352.2 L1002.3 351.2 L1002.3 329.3 L1002.6 310.0 L1002.6 332.3 L1002.9 316.6 L1002.9 289.8 L1003.2 291.7 L1003.2 299.7 L1003.6 318.2 L1003.6 293.8 L1003.9 314.2 L1003.9 339.9 L1004.2 347.6 L1004.2 334.4 L1004.6 331.6 L1004.6 343.6 L1004.9 331.0 L1004.9 309.5 L1005.2 292.7 L1005.2 310.8 L1005.6 298.4 L1005.6 291.6 L1005.9 293.2 L1005.9 312.4 L1006.2 342.2 L1006.2 309.3 L1006.5 323.8 L1006.5 347.9 L1006.9 348.8 L1006.9 328.3 L1007.2 306.6 L1007.2 338.4 L1007.5 312.4 L1007.5 293.6 L1007.9 281.4 L1007.9 311.1 L1008.2 314.9 L1008.2 293.5 L1008.5 306.8 L1008.5 331.8 L1008.9 353.4 L1008.9 327.3 L1009.2 339.5 L1009.2 348.0 L1009.5 334.8 L1009.5 314.0 L1009.8 297.3 L1009.8 310.4 L1010.2 303.2 L1010.2 281.6 L1010.5 291.2 L1010.5 318.3 L1010.8 329.9 L1010.8 306.2 L1011.2 326.3 L1011.2 343.9 L1011.5 347.9 L1011.5 331.8 L1011.8 314.3 L1011.8 330.4 L1012.2 327.7 L1012.2 291.0 L1012.5 280.3 L1012.5 300.7 L1012.8 311.4 L1012.8 290.1 L1013.1 298.2 L1013.1 326.9 L1013.5 346.1 L1013.5 322.7 L1013.8 332.4 L1013.8 343.0 L1014.1 333.7 L1014.1 316.1 L1014.5 305.8 L1014.5 325.4 L1014.8 310.9 L1014.8 285.8 L1015.1 296.1 L1015.1 304.9 L1015.5 325.6 L1015.5 300.6 L1015.8 322.2 L1015.8 337.8 L1016.1 352.0 L1016.1 328.6 L1016.4 313.3 L1016.4 333.9 L1016.8 319.3 L1016.8 301.5 L1017.1 292.1 L1017.1 302.7 L1017.4 299.6 L1017.4 293.7 L1017.8 305.6 L1017.8 325.8 L1018.1 349.8 L1018.1 320.5 L1018.4 327.5 L1018.4 346.5 L1018.8 341.9 L1018.8 321.3 L1019.1 296.3 L1019.1 319.2 L1019.4 302.5 L1019.4 288.2 L1019.7 280.3 L1019.7 300.8 L1020.1 343.9 L1020.1 293.4 L1020.4 320.5 L1020.4 344.7 L1020.7 348.6 L1020.7 330.6 L1021.1 319.2 L1021.1 341.2 L1021.4 325.4 L1021.4 304.8 L1021.7 287.5 L1021.7 295.9 L1022.1 305.9 L1022.1 287.9 L1022.4 300.5 L1022.4 318.8 L1022.7 339.1 L1022.7 315.4 L1023.0 331.7 L1023.0 357.4 L1023.4 339.5 L1023.4 309.8 L1023.7 299.6 L1023.7 324.1 L1024.0 311.6 L1024.0 285.7 L1024.4 292.5 L1024.4 312.1 L1024.7 331.1 L1024.7 304.0 L1025.0 315.8 L1025.0 339.2 L1025.4 358.3 L1025.4 331.5 L1025.7 324.2 L1025.7 341.4 L1026.0 328.6 L1026.0 300.3 L1026.3 286.7 L1026.3 309.0 L1026.7 301.6 L1026.7 274.8 L1027.0 306.4 L1027.0 321.4 L1027.3 339.8 L1027.3 323.9 L1027.7 326.2 L1027.7 347.5 L1028.0 343.3 L1028.0 311.8 L1028.3 288.7 L1028.3 324.7 L1028.7 305.0 L1028.7 282.0 L1029.0 272.8 L1029.0 307.3 L1029.3 314.0 L1029.3 287.7 L1029.6 314.0 L1029.6 340.1 L1030.0 352.6 L1030.0 324.9 L1030.3 319.3 L1030.3 344.8 L1030.6 329.1 L1030.6 306.8 L1031.0 293.7 L1031.0 312.0 L1031.3 303.7 L1031.3 293.3 L1031.6 293.7 L1031.6 331.8 L1032.0 336.8 L1032.0 311.8 L1032.3 335.5 L1032.3 359.4 L1032.6 344.3 L1032.6 321.5 L1032.9 298.2 L1032.9 329.7 L1033.3 314.8 L1033.3 287.2 L1033.6 282.1 L1033.6 304.4 L1033.9 318.9 L1033.9 299.7 L1034.3 318.1 L1034.3 337.2 L1034.6 348.4 L1034.6 324.4 L1034.9 328.0 L1034.9 341.8 L1035.3 324.0 L1035.3 304.4 L1035.6 282.6 L1035.6 306.0 L1035.9 304.2 L1035.9 286.2 L1036.2 286.5 L1036.2 325.6 L1036.6 333.2 L1036.6 314.9 L1036.9 336.1 L1036.9 342.4 L1037.2 348.2 L1037.2 330.9 L1037.6 302.5 L1037.6 328.7 L1037.9 318.2 L1037.9 288.2 L1038.2 285.9 L1038.2 307.3 L1038.6 323.1 L1038.6 296.4 L1038.9 311.8 L1038.9 323.9 L1039.2 341.2 L1039.2 326.1 L1039.5 320.7 L1039.5 344.0 L1039.9 327.2 L1039.9 303.6 L1040.2 288.5 L1040.2 304.1 L1040.5 304.8 L1040.5 286.5 L1040.9 292.1 L1040.9 316.5 L1041.2 333.8 L1041.2 311.6 L1041.5 326.2 L1041.5 348.0 L1041.9 340.4 L1041.9 322.8 L1042.2 314.7 L1042.2 331.8 L1042.5 323.0 L1042.5 295.9 L1042.8 283.8 L1042.8 294.1 L1043.2 310.5 L1043.2 293.3 L1043.5 312.0 L1043.5 345.6 L1043.8 355.6 L1043.8 329.7 L1044.2 333.2 L1044.2 357.5 L1044.5 333.9 L1044.5 312.5 L1044.8 296.2 L1044.8 312.2 L1045.2 303.3 L1045.2 287.3 L1045.5 272.7 L1045.5 312.8 L1045.8 336.7 L1045.8 306.5 L1046.1 326.2 L1046.1 346.2 L1046.5 346.9 L1046.5 322.7 L1046.8 308.6 L1046.8 333.1 L1047.1 318.2 L1047.1 289.3 L1047.5 282.4 L1047.5 299.1 L1047.8 320.6 L1047.8 283.2 L1048.1 309.6 L1048.1 334.9 L1048.5 343.3 L1048.5 327.3 L1048.8 325.5 L1048.8 353.9 L1049.1 336.2 L1049.1 319.7 L1049.4 292.9 L1049.4 316.6 L1049.8 302.6 L1049.8 285.0 L1050.1 282.0 L1050.1 312.0 L1050.4 333.7 L1050.4 294.5 L1050.8 326.6 L1050.8 347.2 L1051.1 351.0 L1051.1 325.4 L1051.4 312.0 L1051.4 330.5 L1051.8 312.6 L1051.8 295.2 L1052.1 282.1 L1052.1 302.5 L1052.4 308.2 L1052.4 293.8 L1052.7 292.2 L1052.7 328.1 L1053.1 358.8 L1053.1 319.6 L1053.4 336.8 L1053.4 353.0 L1053.7 347.4 L1053.7 319.4 L1054.1 295.7 L1054.1 322.2 L1054.4 308.6 L1054.4 284.6 L1054.7 293.6 L1054.7 311.9 L1055.1 323.9 L1055.1 301.4 L1055.4 324.5 L1055.4 348.3 L1055.7 353.3 L1055.7 331.9 L1056.0 307.1 L1056.0 343.4 L1056.4 311.4 L1056.4 276.4 L1056.7 282.3 L1056.7 305.5 L1057.0 329.2 L1057.0 289.7 L1057.4 303.1 L1057.4 339.0 L1057.7 352.4 L1057.7 324.0 L1058.0 338.5 L1058.0 345.9 L1058.4 352.4 L1058.4 312.6 L1058.7 293.1 L1058.7 332.0 L1059.0 301.7 L1059.0 269.9 L1059.3 285.8 L1059.3 305.9 L1059.7 335.6 L1059.7 295.1 L1060.0 321.2 L1060.0 338.3 L1060.3 354.1 L1060.3 331.7 L1060.7 320.9 L1060.7 349.9 L1061.0 325.7 L1061.0 289.3 L1061.3 275.9 L1061.3 308.3 L1061.7 308.7 L1061.7 290.8 L1062.0 301.7 L1062.0 323.9 L1062.3 356.0 L1062.3 315.0 L1062.6 330.8 L1062.6 352.4 L1063.0 342.2 L1063.0 318.1 L1063.3 299.6 L1063.3 321.6 L1063.6 308.6 L1063.6 282.7 L1064.0 289.9 L1064.0 304.8 L1064.3 327.1 L1064.3 301.0 L1064.6 310.1 L1064.6 340.9 L1065.0 344.2 L1065.0 331.8 L1065.3 324.8 L1065.3 347.1 L1065.6 325.8 L1065.6 295.4 L1065.9 289.1 L1065.9 309.4 L1066.3 306.0 L1066.3 282.3 L1066.6 295.9 L1066.6 312.5 L1066.9 331.9 L1066.9 315.1 L1067.3 327.1 L1067.3 349.7 L1067.6 339.7 L1067.6 318.0 L1067.9 301.6 L1067.9 326.3 L1068.3 303.6 L1068.3 287.9 L1068.6 287.3 L1068.6 298.5 L1068.9 319.8 L1068.9 293.9 L1069.2 319.9 L1069.2 340.3 L1069.6 351.4 L1069.6 335.2 L1069.9 334.3 L1069.9 342.8 L1070.2 326.0 L1070.2 300.6 L1070.6 288.1 L1070.6 311.5 L1070.9 307.1 L1070.9 281.3 L1071.2 290.8 L1071.2 316.1 L1071.6 345.3 L1071.6 311.0 L1071.9 329.1 L1071.9 345.3 L1072.2 346.3 L1072.2 328.9 L1072.5 304.5 L1072.5 324.0 L1072.9 311.3 L1072.9 295.6 L1073.2 287.3 L1073.2 300.9 L1073.5 320.4 L1073.5 291.4 L1073.9 316.8 L1073.9 338.9 L1074.2 350.3 L1074.2 325.8 L1074.5 330.0 L1074.5 350.4 L1074.9 327.4 L1074.9 309.4 L1075.2 295.9 L1075.2 310.6 L1075.5 302.6 L1075.5 286.0 L1075.8 297.3 L1075.8 313.1 L1076.2 332.6 L1076.2 321.3 L1076.5 330.7 L1076.5 340.1 L1076.8 349.1 L1076.8 326.7 L1077.2 316.8 L1077.2 341.7 L1077.5 304.5 L1077.5 290.6 L1077.8 281.0 L1077.8 302.7 L1078.2 307.5 L1078.2 300.0 L1078.5 311.1 L1078.5 327.3 L1078.8 347.3 L1078.8 333.1 L1079.1 323.5 L1079.1 345.9 L1079.5 335.5 L1079.5 313.1 L1079.8 298.0 L1079.8 316.6 L1080.1 303.7 L1080.1 288.0 L1080.5 288.2 L1080.5 307.0 L1080.8 332.8 L1080.8 310.6 L1081.1 332.3 L1081.1 356.1 L1081.5 346.2 L1081.5 327.4 L1081.8 302.2 L1081.8 335.3 L1082.1 308.8 L1082.1 291.1 L1082.4 285.0 L1082.4 309.3 L1082.8 310.8 L1082.8 283.0 L1083.1 311.8 L1083.1 330.3 L1083.4 346.1 L1083.4 323.6 L1083.8 330.3 L1083.8 360.4 L1084.1 326.2 L1084.1 315.3 L1084.4 290.2 L1084.4 320.6 L1084.8 306.0 L1084.8 276.7 L1085.1 295.7 L1085.1 312.6 L1085.4 327.2 L1085.4 312.3 L1085.7 315.5 L1085.7 339.8 L1086.1 342.6 L1086.1 331.9 L1086.4 313.6 L1086.4 339.3 L1086.7 319.1 L1086.7 293.1 L1087.1 283.6 L1087.1 294.5 L1087.4 316.3 L1087.4 286.0 L1087.7 298.6 L1087.7 336.6 L1088.1 356.2 L1088.1 311.3 L1088.4 328.9 L1088.4 345.6 L1088.7 337.1 L1088.7 313.9 L1089.0 290.0 L1089.0 321.7 L1089.4 302.3 L1089.4 285.1 L1089.7 295.6 L1089.7 310.9 L1090.0 337.5 L1090.0 301.2 L1090.4 328.0 L1090.4 343.4 L1090.7 356.4 L1090.7 331.9 L1091.0 321.2 L1091.0 346.9 L1091.4 312.5 L1091.4 291.8 L1091.7 282.6 L1091.7 299.5 L1092.0 321.1 L1092.0 287.0 L1092.3 303.3 L1092.3 319.7 L1092.7 338.6 L1092.7 328.1 L1093.0 336.0 L1093.0 350.6 L1093.3 348.3 L1093.3 310.0 L1093.7 298.1 L1093.7 327.7 L1094.0 305.5 L1094.0 288.4 L1094.3 281.7 L1094.3 296.5 L1094.7 330.7 L1094.7 306.5 L1095.0 325.3 L1095.0 347.9 L1095.3 355.4 L1095.3 330.8 L1095.6 323.2 L1095.6 348.5 L1096.0 328.0 L1096.0 304.0 L1096.3 283.3 L1096.3 303.0 L1096.6 303.5 L1096.6 278.1 L1097.0 297.6 L1097.0 326.5 L1097.3 349.6 L1097.3 318.0 L1097.6 334.2 L1097.6 349.6 L1098.0 335.7 L1098.0 312.6 L1098.3 304.1 L1098.3 331.8 L1098.6 306.4 L1098.6 281.5 L1098.9 280.9 L1098.9 301.7 L1099.3 311.3 L1099.3 306.2 L1099.6 318.8 L1099.6 353.9 L1099.9 360.9 L1099.9 332.5 L1100.3 320.0 L1100.3 341.5 L1100.6 319.3 L1100.6 298.0 L1100.9 279.1 L1100.9 304.9 L1101.3 307.2 L1101.3 284.9 L1101.6 290.2 L1101.6 322.4 L1101.9 361.1 L1101.9 309.7 L1102.2 337.1 L1102.2 353.0 L1102.6 342.0 L1102.6 325.5 L1102.9 299.5 L1102.9 324.5 L1103.2 315.0 L1103.2 289.9 L1103.6 282.3 L1103.6 298.7 L1103.9 318.1 L1103.9 299.8 L1104.2 323.0 L1104.2 348.7 L1104.6 351.4 L1104.6 331.1 L1104.9 318.2 L1104.9 337.0 L1105.2 332.5 L1105.2 292.0 L1105.5 290.4 L1105.5 308.0 L1105.9 307.8 L1105.9 283.0 L1106.2 289.6 L1106.2 312.7 L1106.5 345.4 L1106.5 304.2 L1106.9 337.5 L1106.9 353.2 L1107.2 352.6 L1107.2 328.6 L1107.5 306.7 L1107.5 327.6 L1107.9 309.9 L1107.9 277.4 L1108.2 283.4 L1108.2 299.2 L1108.5 312.1 L1108.5 294.5 L1108.8 314.0 L1108.8 343.8 L1109.2 346.5 L1109.2 338.2 L1109.5 328.9 L1109.5 341.9 L1109.8 332.6 L1109.8 300.6 L1110.2 287.3 L1110.2 313.0 L1110.5 309.2 L1110.5 288.3 L1110.8 298.9 L1110.8 316.8 L1111.2 345.6 L1111.2 311.9 L1111.5 322.7 L1111.5 355.7 L1111.8 354.7 L1111.8 328.9 L1112.1 303.8 L1112.1 330.2 L1112.5 321.3 L1112.5 275.3 L1112.8 285.9 L1112.8 305.3 L1113.1 318.8 L1113.1 278.3 L1113.5 311.3 L1113.5 349.5 L1113.8 345.2 L1113.8 324.7 L1114.1 318.3 L1114.1 341.5 L1114.5 333.9 L1114.5 308.8 L1114.8 287.1 L1114.8 310.7 L1115.1 300.5 L1115.1 279.0 L1115.4 293.8 L1115.4 302.2 L1115.8 338.7 L1115.8 313.3 L1116.1 329.0 L1116.1 347.4 L1116.4 354.2 L1116.4 313.3 L1116.8 303.1 L1116.8 345.9 L1117.1 309.6 L1117.1 284.9 L1117.4 280.2 L1117.4 302.3 L1117.8 319.8 L1117.8 291.9 L1118.1 308.2 L1118.1 330.9 L1118.4 343.4 L1118.4 324.9 L1118.7 332.1 L1118.7 350.6 L1119.1 336.0 L1119.1 315.8 L1119.4 288.6 L1119.4 313.0 L1119.7 298.0 L1119.7 267.4 L1120.1 286.8 L1120.1 309.3 L1120.4 329.4 L1120.4 309.8 L1120.7 327.4 L1120.7 344.3 L1121.1 351.4 L1121.1 332.0 L1121.4 308.1 L1121.4 340.4 L1121.7 315.9 L1121.7 300.7 L1122.0 291.1 L1122.0 305.3 L1122.4 311.9 L1122.4 293.9 L1122.7 305.7 L1122.7 327.2 L1123.0 351.3 L1123.0 332.4 L1123.4 327.4 L1123.4 351.3 L1123.7 334.9 L1123.7 319.1 L1124.0 300.3 L1124.0 315.5 L1124.4 303.2 L1124.4 283.7 L1124.7 291.4 L1124.7 302.7 L1125.0 330.5 L1125.0 301.5 L1125.3 326.7 L1125.3 344.9 L1125.7 346.2 L1125.7 327.2 L1126.0 315.9 L1126.0 331.2 L1126.3 319.0 L1126.3 292.3 L1126.7 281.4 L1126.7 300.5 L1127.0 316.9 L1127.0 292.7 L1127.3 301.4 L1127.3 323.3 L1127.7 339.7 L1127.7 329.9 L1128.0 327.1 L1128.0 347.8 L1128.3 330.1 L1128.3 308.8 L1128.6 299.7 L1128.6 311.8 L1129.0 299.6 L1129.0 287.6 L1129.3 283.6 L1129.3 311.3 L1129.6 330.0 L1129.6 311.8 L1130.0 327.8 L1130.0 351.9 L1130.3 350.0 L1130.3 322.2 L1130.6 320.1 L1130.6 334.4 L1131.0 324.7 L1131.0 290.8 L1131.3 292.0 L1131.3 305.8 L1131.6 307.7 L1131.6 291.5 L1131.9 310.8 L1131.9 333.4 L1132.3 345.4 L1132.3 318.5 L1132.6 332.7 L1132.6 343.5 L1132.9 340.8 L1132.9 318.1 L1133.3 295.5 L1133.3 319.0 L1133.6 315.4 L1133.6 288.9 L1133.9 294.6 L1133.9 306.2 L1134.3 321.8 L1134.3 298.2 L1134.6 325.8 L1134.6 343.7 L1134.9 354.9 L1134.9 325.3 L1135.2 319.0 L1135.2 348.2 L1135.6 325.9 L1135.6 299.6 L1135.9 285.5 L1135.9 304.3 L1136.2 319.1 L1136.2 288.4 L1136.6 299.3 L1136.6 324.9 L1136.9 342.1 L1136.9 321.5 L1137.2 323.1 L1137.2 349.0 L1137.6 337.6 L1137.6 321.6 L1137.9 292.0 L1137.9 322.0 L1138.2 302.0 L1138.2 285.8 L1138.5 291.5 L1138.5 300.6 L1138.9 326.4 L1138.9 292.9 L1139.2 315.8 L1139.2 343.6 L1139.5 350.3 L1139.5 333.6 L1139.9 326.1 L1139.9 336.5 L1140.2 324.9 L1140.2 305.8 L1140.5 287.7 L1140.5 303.9 L1140.9 308.8 L1140.9 284.3 L1141.2 296.0 L1141.2 314.8 L1141.5 353.1 L1141.5 328.1 L1141.8 314.2 L1141.8 347.8 L1142.2 353.1 L1142.2 320.3 L1142.5 293.3 L1142.5 321.7 L1142.8 299.8 L1142.8 291.3 L1143.2 288.9 L1143.2 305.1 L1143.5 322.1 L1143.5 301.4 L1143.8 320.7 L1143.8 352.4 L1144.2 352.6 L1144.2 323.1 L1144.5 318.3 L1144.5 345.3 L1144.8 329.1 L1144.8 303.0 L1145.1 294.2 L1145.1 308.3 L1145.5 309.6 L1145.5 289.4 L1145.8 289.0 L1145.8 321.5 L1146.1 341.7 L1146.1 313.2 L1146.5 329.1 L1146.5 352.7 L1146.8 352.5 L1146.8 323.0 L1147.1 294.3 L1147.1 326.7 L1147.5 301.0 L1147.5 284.5 L1147.8 282.4 L1147.8 304.9 L1148.1 312.4 L1148.1 298.0 L1148.4 319.2 L1148.4 342.2 L1148.8 351.7 L1148.8 338.7 L1149.1 327.0 L1149.1 345.0 L1149.4 323.1 L1149.4 301.0 L1149.8 283.2 L1149.8 314.1 L1150.1 303.9 L1150.1 290.0 L1150.4 289.1 L1150.4 316.8 L1150.8 333.0 L1150.8 308.4 L1151.1 332.5 L1151.1 350.5 L1151.4 345.1 L1151.4 330.9 L1151.7 308.1 L1151.7 328.3 L1152.1 312.1 L1152.1 295.4 L1152.4 284.0 L1152.4 306.6 L1152.7 313.9 L1152.7 290.7 L1153.1 323.3 L1153.1 335.7 L1153.4 348.6 L1153.4 323.5 L1153.7 329.2 L1153.7 348.1 L1154.1 332.0 L1154.1 307.0 L1154.4 290.8 L1154.4 316.1 L1154.7 295.7 L1154.7 288.4 L1155.0 291.1 L1155.0 314.9 L1155.4 341.9 L1155.4 307.6 L1155.7 341.4 L1155.7 356.9 L1156.0 348.7 L1156.0 331.6 L1156.4 302.2 L1156.4 330.5 L1156.7 308.7 L1156.7 293.5 L1157.0 283.0 L1157.0 303.1 L1157.4 308.9 L1157.4 287.8 L1157.7 311.9 L1157.7 328.9 L1158.0 342.5 L1158.0 329.0 L1158.3 332.3 L1158.3 346.0 L1158.7 328.3 L1158.7 304.7 L1159.0 285.1 L1159.0 312.8 L1159.3 306.7 L1159.3 287.7 L1159.7 295.5 L1159.7 308.0 L1160.0 325.6 L1160.0 309.2 L1160.3 327.1 L1160.3 347.5 L1160.7 345.8 L1160.7 326.8 L1161.0 308.3 L1161.0 322.5 L1161.3 314.4 L1161.3 296.3 L1161.6 286.9 L1161.6 306.9 L1162.0 304.6 L1162.0 289.5 L1162.3 305.4 L1162.3 336.6 L1162.6 345.6 L1162.6 326.9 L1163.0 330.1 L1163.0 349.6 L1163.3 333.3 L1163.3 318.8 L1163.6 284.0 L1163.6 318.6 L1164.0 310.9 L1164.0 291.2 L1164.3 293.8 L1164.3 317.3 L1164.6 324.8 L1164.6 297.9 L1164.9 329.4 L1164.9 349.8 L1165.3 357.9 L1165.3 329.3 L1165.6 311.1 L1165.6 335.3 L1165.9 319.2 L1165.9 298.4 L1166.3 278.6 L1166.3 301.6 L1166.6 313.0 L1166.6 289.8 L1166.9 307.7 L1166.9 339.6 L1167.3 348.0 L1167.3 320.1 L1167.6 339.6 L1167.6 357.5 L1167.9 338.0 L1167.9 296.0 L1168.2 292.5 L1168.2 327.2 L1168.6 301.8 L1168.6 284.0 L1168.9 284.4 L1168.9 306.9 L1169.2 333.6 L1169.2 292.9 L1169.6 329.9 L1169.6 342.2 L1169.9 344.8 L1169.9 321.2 L1170.2 324.3 L1170.2 341.9 L1170.6 319.1 L1170.6 298.3 L1170.9 283.8 L1170.9 301.6 L1171.2 308.9 L1171.2 294.9 L1171.5 310.0 L1171.5 320.9 L1171.9 343.8 L1171.9 319.5 L1172.2 333.1 L1172.2 342.9 L1172.5 346.6 L1172.5 315.8 L1172.9 294.4 L1172.9 317.1 L1173.2 304.2 L1173.2 283.0 L1173.5 292.0 L1173.5 312.3 L1173.9 334.5 L1173.9 298.1 L1174.2 316.7 L1174.2 346.1 L1174.5 351.1 L1174.5 333.8 L1174.8 313.2 L1174.8 337.1 L1175.2 327.1 L1175.2 292.0 L1175.5 284.7 L1175.5 314.8 L1175.8 303.4 L1175.8 284.6 L1176.2 305.7 L1176.2 321.6 L1176.5 345.6 L1176.5 320.5 L1176.8 331.1 L1176.8 348.1 L1177.2 334.7 L1177.2 316.2 L1177.5 289.7 L1177.5 321.7 L1177.8 301.4 L1177.8 282.0 L1178.1 286.6 L1178.1 303.3 L1178.5 330.1 L1178.5 301.5 L1178.8 310.2 L1178.8 342.5 L1179.1 346.3 L1179.1 325.2 L1179.5 327.2 L1179.5 340.4 L1179.8 329.0 L1179.8 305.8 L1180.1 284.5 L1180.1 307.3 L1180.5 310.9 L1180.5 291.2 L1180.8 294.3 L1180.8 317.0 L1181.1 341.6 L1181.1 320.2 L1181.4 333.1 L1181.4 348.0 L1181.8 336.9 L1181.8 312.9 L1182.1 303.6 L1182.1 328.4 L1182.4 313.2 L1182.4 286.9 L1182.8 293.2 L1182.8 303.5 L1183.1 318.3 L1183.1 290.2 L1183.4 320.8 L1183.4 340.3 L1183.8 343.2 L1183.8 333.3 L1184.1 320.1 L1184.1 340.0 L1184.4 321.5 L1184.4 306.4 L1184.7 288.4 L1184.7 309.5 L1185.1 304.8 L1185.1 287.9 L1185.4 296.0 L1185.4 314.2 L1185.7 342.1 L1185.7 320.8 L1186.1 329.8 L1186.1 345.3 L1186.4 346.3 L1186.4 325.9 L1186.7 306.4 L1186.7 337.6 L1187.1 305.5 L1187.1 292.6 L1187.4 289.1 L1187.4 300.7 L1187.7 317.2 L1187.7 303.1 L1188.0 310.7 L1188.0 336.9 L1188.4 343.3 L1188.4 327.6 L1188.7 327.0 L1188.7 343.8 L1189.0 326.3 L1189.0 308.8 L1189.4 296.4 L1189.4 307.3 L1189.7 296.6 L1189.7 284.2 L1190.0 294.4 L1190.0 313.3 L1190.4 335.9 L1190.4 310.4 L1190.7 328.6 L1190.7 352.8 L1191.0 342.8 L1191.0 325.4 L1191.3 316.7 L1191.3 327.6 L1191.7 306.9 L1191.7 287.8 L1192.0 286.5 L1192.0 303.4 L1192.3 318.7 L1192.3 292.8 L1192.7 308.2 L1192.7 332.3 L1193.0 347.8 L1193.0 323.2 L1193.3 328.8 L1193.3 347.7 L1193.7 337.0 L1193.7 299.0 L1194.0 292.1 L1194.0 311.9 L1194.3 310.4 L1194.3 271.2 L1194.6 286.9 L1194.6 309.6 L1195.0 341.2 L1195.0 309.0 L1195.3 316.9 L1195.3 356.2 L1195.6 358.3 L1195.6 330.2 L1196.0 303.2 L1196.0 340.3 L1196.3 316.3 L1196.3 276.1 L1196.6 274.5 L1196.6 305.9 L1197.0 331.9 L1197.0 289.3 L1197.3 301.7 L1197.3 345.0 L1197.6 351.9 L1197.6 329.2 L1197.9 328.2 L1197.9 358.0 L1198.3 338.8 L1198.3 320.1 L1198.6 293.7 L1198.6 320.4 L1198.9 302.1 L1198.9 283.9 L1199.3 282.3 L1199.3 310.4 L1199.6 338.0 L1199.6 306.0 L1199.9 325.8 L1199.9 351.7 L1200.3 350.5 L1200.3 333.8 L1200.6 318.1 L1200.6 344.6 L1200.9 314.7 L1200.9 294.0 L1201.2 282.3 L1201.2 305.7 L1201.6 312.0 L1201.6 296.8 L1201.9 302.2 L1201.9 330.4 L1202.2 355.3 L1202.2 323.3 L1202.6 333.9 L1202.6 347.1 L1202.9 343.7 L1202.9 317.6 L1203.2 296.4 L1203.2 312.0 L1203.6 300.9 L1203.6 278.0 L1203.9 289.8 L1203.9 305.3 L1204.2 332.1 L1204.2 296.3 L1204.5 321.0 L1204.5 346.4 L1204.9 337.8 L1204.9 327.3 L1205.2 313.5 L1205.2 333.9 L1205.5 315.2 L1205.5 296.3 L1205.9 286.3 L1205.9 299.6 L1206.2 307.0 L1206.2 289.0 L1206.5 299.1 L1206.5 340.2 L1206.9 348.6 L1206.9 328.0 L1207.2 329.2 L1207.2 339.5 L1207.5 337.1 L1207.5 322.2 L1207.8 293.5 L1207.8 315.0 L1208.2 306.8 L1208.2 280.3 L1208.5 284.9 L1208.5 312.4 L1208.8 321.5 L1208.8 311.6 L1209.2 328.3 L1209.2 341.8 L1209.5 347.5 L1209.5 334.8 L1209.8 319.0 L1209.8 335.2 L1210.2 315.8 L1210.2 289.0 L1210.5 285.5 L1210.5 303.5 L1210.8 306.9 L1210.8 283.5 L1211.1 306.4 L1211.1 332.0 L1211.5 344.5 L1211.5 324.7 L1211.8 336.2 L1211.8 354.6 L1212.1 332.8 L1212.1 315.5 L1212.5 296.6 L1212.5 319.2 L1212.8 310.3 L1212.8 294.5 L1213.1 284.7 L1213.1 303.7 L1213.5 324.3 L1213.5 303.0 L1213.8 321.0 L1213.8 343.9 L1214.1 346.3 L1214.1 330.1 L1214.4 320.9 L1214.4 333.6 L1214.8 318.6 L1214.8 301.1 L1215.1 278.5 L1215.1 313.1 L1215.4 313.1 L1215.4 292.7 L1215.8 303.6 L1215.8 333.4 L1216.1 350.1 L1216.1 324.8 L1216.4 330.6 L1216.4 351.8 L1216.8 347.6 L1216.8 306.3 L1217.1 304.8 L1217.1 323.9 L1217.4 302.9 L1217.4 290.4 L1217.7 293.2 L1217.7 309.9 L1218.1 326.1 L1218.1 294.2 L1218.4 324.6 L1218.4 340.0 L1218.7 349.0 L1218.7 328.3 L1219.1 327.0 L1219.1 348.2 L1219.4 323.7 L1219.4 302.1 L1219.7 288.3 L1219.7 307.0 L1220.1 307.6 L1220.1 292.1 L1220.4 298.2 L1220.4 321.6 L1220.7 334.0 L1220.7 314.4 L1221.0 327.0 L1221.0 345.6 L1221.4 342.1 L1221.4 322.6 L1221.7 307.7 L1221.7 324.9 L1222.0 299.6 L1222.0 284.3 L1222.4 282.5 L1222.4 300.5 L1222.7 309.5 L1222.7 298.4 L1223.0 317.2 L1223.0 344.0 L1223.4 345.8 L1223.4 334.4 L1223.7 319.8 L1223.7 347.4 L1224.0 338.4 L1224.0 298.3 L1224.3 276.2 L1224.3 316.4 L1224.7 298.8 L1224.7 281.1 L1225.0 292.5 L1225.0 317.4 L1225.3 330.5 L1225.3 308.8 L1225.7 335.0 L1225.7 346.0 L1226.0 342.5 L1226.0 325.7 L1226.3 303.7 L1226.3 328.3 L1226.7 311.1 L1226.7 289.7 L1227.0 281.7 L1227.0 293.6 L1227.3 327.1 L1227.3 286.6 L1227.6 310.4 L1227.6 342.1 L1228.0 349.5 L1228.0 329.5 L1228.3 323.7 L1228.3 347.5 L1228.6 336.9 L1228.6 306.2 L1229.0 290.1 L1229.0 310.8 L1229.3 300.6 L1229.3 285.5 L1229.6 294.8 L1229.6 316.2 L1230.0 332.9 L1230.0 308.8 L1230.3 322.6 L1230.3 354.3 L1230.6 353.2 L1230.6 325.7 L1230.9 309.9 L1230.9 332.0 L1231.3 309.5 L1231.3 292.4 L1231.6 279.1 L1231.6 311.3 L1231.9 317.7 L1231.9 291.9 L1232.3 315.4 L1232.3 329.9 L1232.6 352.1 L1232.6 330.8 L1232.9 327.5 L1232.9 341.2 L1233.3 343.4 L1233.3 313.9 L1233.6 291.4 L1233.6 320.6 L1233.9 310.3 L1233.9 291.1 L1234.2 296.6 L1234.2 313.3 L1234.6 343.8 L1234.6 306.5 L1234.9 323.6 L1234.9 345.0 L1235.2 345.1 L1235.2 329.9 L1235.6 307.7 L1235.6 331.8 L1235.9 317.8 L1235.9 291.4 L1236.2 288.6 L1236.2 303.4 L1236.6 310.3 L1236.6 293.3 L1236.9 310.5 L1236.9 333.7 L1237.2 352.4 L1237.2 318.7 L1237.5 337.4 L1237.5 347.2 L1237.9 344.0 L1237.9 314.4 L1238.2 294.1 L1238.2 309.2 L1238.5 302.5 L1238.5 280.7 L1238.9 282.5 L1238.9 306.9 L1239.2 340.7 L1239.2 309.0 L1239.5 329.1 L1239.5 346.6 L1239.9 349.5 L1239.9 331.3 L1240.2 300.7 L1240.2 334.3 L1240.5 316.7 L1240.5 291.8 L1240.8 266.9 L1240.8 307.3 L1241.2 305.1 L1241.2 289.6 L1241.5 307.9 L1241.5 330.2 L1241.8 348.1 L1241.8 314.3 L1242.2 341.1 L1242.2 351.2 L1242.5 349.5 L1242.5 310.2 L1242.8 293.3 L1242.8 314.8 L1243.2 300.5 L1243.2 285.0 L1243.5 298.2 L1243.5 308.9 L1243.8 330.1 L1243.8 300.9 L1244.1 329.9 L1244.1 354.9 L1244.5 353.7 L1244.5 328.8 L1244.8 316.8 L1244.8 339.9 L1245.1 322.4 L1245.1 294.6 L1245.5 280.1 L1245.5 307.2 L1245.8 306.4 L1245.8 284.3 L1246.1 298.9 L1246.1 336.6 L1246.5 339.2 L1246.5 330.3 L1246.8 329.5 L1246.8 345.7 L1247.1 340.4 L1247.1 308.0 L1247.4 300.9 L1247.4 328.2 L1247.8 307.1 L1247.8 286.0 L1248.1 287.3 L1248.1 297.2 L1248.4 331.3 L1248.4 291.0 L1248.8 327.8 L1248.8 348.8 L1249.1 349.3 L1249.1 339.7 L1249.4 316.2 L1249.4 340.7 L1249.8 319.1 L1249.8 301.8 L1250.1 283.2 L1250.1 299.8 L1250.4 306.4 L1250.4 286.5 L1250.7 295.9 L1250.7 325.3 L1251.1 339.9 L1251.1 327.5 L1251.4 334.1 L1251.4 353.2 L1251.7 340.3 L1251.7 317.4 L1252.1 281.7 L1252.1 325.4 L1252.4 304.7 L1252.4 286.0 L1252.7 281.8 L1252.7 310.7 L1253.1 322.3 L1253.1 299.5 L1253.4 310.8 L1253.4 347.6 L1253.7 349.5 L1253.7 326.4 L1254.0 321.3 L1254.0 344.5 L1254.4 335.4 L1254.4 296.9 L1254.7 271.9 L1254.7 296.6 L1255.0 308.2 L1255.0 277.1 L1255.4 299.6 L1255.4 321.2 L1255.7 347.7 L1255.7 306.6 L1256.0 332.0 L1256.0 349.4 L1256.4 351.4 L1256.4 320.2 L1256.7 306.9 L1256.7 330.9 L1257.0 313.3 L1257.0 286.1 L1257.3 274.4 L1257.3 319.2 L1257.7 343.1 L1257.7 285.2 L1258.0 325.3 L1258.0 354.8 L1258.3 352.6 L1258.3 332.4 L1258.7 320.0 L1258.7 361.2 L1259.0 341.9 L1259.0 302.5 L1259.3 286.3 L1259.3 320.9 L1259.7 299.3 L1259.7 279.0 L1260.0 290.4 L1260.0 321.9 L1260.3 354.4 L1260.3 323.8 L1260.6 327.4 L1260.6 350.1 L1261.0 345.4 L1261.0 326.4 L1261.3 298.5 L1261.3 319.7 L1261.6 311.8 L1261.6 277.8 L1262.0 282.0 L1262.0 297.6 L1262.3 316.6 L1262.3 292.5 L1262.6 312.5 L1262.6 344.3 L1263.0 346.7 L1263.0 321.6 L1263.3 323.5 L1263.3 351.4 L1263.6 336.5 L1263.6 306.6 L1263.9 287.8 L1263.9 312.5 L1264.3 315.3 L1264.3 292.0 L1264.6 299.4 L1264.6 322.9 L1264.9 335.9 L1264.9 311.4 L1265.3 334.9 L1265.3 350.8 L1265.6 342.3 L1265.6 324.7 L1265.9 292.7 L1265.9 329.1 L1266.3 305.5 L1266.3 289.9 L1266.6 287.8 L1266.6 305.7 L1266.9 318.1 L1266.9 297.2 L1267.2 309.5 L1267.2 344.9 L1267.6 349.2 L1267.6 321.7 L1267.9 329.5 L1267.9 351.0 L1268.2 332.1 L1268.2 305.9 L1268.6 281.6 L1268.6 311.3 L1268.9 293.5 L1268.9 276.6 L1269.2 290.9 L1269.2 313.0 L1269.6 334.7 L1269.6 314.1 L1269.9 335.2 L1269.9 355.1 L1270.2 348.7 L1270.2 322.4 L1270.5 306.2 L1270.5 340.1 L1270.9 319.3 L1270.9 287.9 L1271.2 291.3 L1271.2 308.4 L1271.5 312.3 L1271.5 287.3 L1271.9 303.0 L1271.9 335.8 L1272.2 345.1 L1272.2 322.5 L1272.5 329.9 L1272.5 351.6 L1272.9 337.6 L1272.9 319.2 L1273.2 289.2 L1273.2 308.0 L1273.5 297.2 L1273.5 281.6 L1273.8 282.9 L1273.8 313.8 L1274.2 335.2 L1274.2 313.6 L1274.5 328.4 L1274.5 344.2 L1274.8 348.3 L1274.8 316.4 L1275.2 307.7 L1275.2 332.1 L1275.5 308.5 L1275.5 295.7 L1275.8 274.0 L1275.8 301.3 L1276.2 306.9 L1276.2 292.5 L1276.5 304.7 L1276.5 336.0 L1276.8 346.2 L1276.8 327.5 L1277.1 320.3 L1277.1 339.3 L1277.5 348.3 L1277.5 319.3 L1277.8 289.7 L1277.8 321.9 L1278.1 299.1 L1278.1 271.9 L1278.5 292.8 L1278.5 308.6 L1278.8 332.2 L1278.8 295.2 L1279.1 323.5 L1279.1 348.0 L1279.5 342.8 L1279.5 328.0 L1279.8 309.1 L1279.8 346.8 L1280.1 320.7 L1280.1 300.5 L1280.4 287.1 L1280.4 309.4 L1280.8 306.5 L1280.8 293.1 L1281.1 309.5 L1281.1 327.0 L1281.4 344.2 L1281.4 329.6 L1281.8 330.6 L1281.8 359.5 L1282.1 349.1 L1282.1 296.4 L1282.4 296.6 L1282.4 323.3 L1282.8 297.9 L1282.8 277.1 L1283.1 274.7 L1283.1 312.2 L1283.4 327.5 L1283.4 303.5 L1283.7 319.6 L1283.7 349.0 L1284.1 336.7 L1284.1 329.9 L1284.4 303.4 L1284.4 338.5 L1284.7 321.4 L1284.7 287.5 L1285.1 277.6 L1285.1 309.3 L1285.4 311.8 L1285.4 286.6 L1285.7 296.8 L1285.7 335.0 L1286.1 347.5 L1286.1 319.1 L1286.4 319.8 L1286.4 349.8 L1286.7 345.1 L1286.7 312.2 L1287.0 292.2 L1287.0 327.2 L1287.4 310.3 L1287.4 284.8 L1287.7 279.7 L1287.7 305.2 L1288.0 341.4 L1288.0 308.3 L1288.4 326.6 L1288.4 353.5 L1288.7 360.7 L1288.7 319.0 L1289.0 319.6 L1289.0 335.1 L1289.4 329.1 L1289.4 294.2 L1289.7 284.8 L1289.7 312.5 L1290.0 305.6 L1290.0 287.0 L1290.3 303.1 L1290.3 314.0 L1290.7 342.4 L1290.7 321.5 L1291.0 331.5 L1291.0 351.3 L1291.3 340.2 L1291.3 316.7 L1291.7 293.1 L1291.7 312.7 L1292.0 301.8 L1292.0 281.7 L1292.3 282.1 L1292.3 306.6 L1292.7 325.6 L1292.7 294.8 L1293.0 324.0 L1293.0 355.7 L1293.3 354.9 L1293.3 335.2 L1293.6 320.3 L1293.6 344.1 L1294.0 324.7 L1294.0 304.5 L1294.3 280.7 L1294.3 310.8 L1294.6 304.5 L1294.6 282.2 L1295.0 287.0 L1295.0 317.6 L1295.3 343.8 L1295.3 325.3 L1295.6 337.3 L1295.6 352.6 L1296.0 348.7 L1296.0 310.4 L1296.3 298.9 L1296.3 323.3 L1296.6 317.7 L1296.6 279.9 L1296.9 282.6 L1296.9 313.9 L1297.3 322.7 L1297.3 295.8 L1297.6 308.2 L1297.6 343.6 L1297.9 354.7 L1297.9 333.7 L1298.3 325.5 L1298.3 346.4 L1298.6 337.8 L1298.6 300.9 L1298.9 287.6 L1298.9 323.0 L1299.3 298.4 L1299.3 282.7 L1299.6 292.4 L1299.6 318.4 L1299.9 331.1 L1299.9 318.8 L1300.2 325.4 L1300.2 354.9 L1300.6 339.8 L1300.6 323.7 L1300.9 307.0 L1300.9 331.3 L1301.2 307.4 L1301.2 276.2 L1301.6 285.3 L1301.6 299.5 L1301.9 315.7 L1301.9 297.8 L1302.2 311.5 L1302.2 337.4 L1302.6 343.2 L1302.6 327.8 L1302.9 327.0 L1302.9 341.1 L1303.2 334.5 L1303.2 311.3 L1303.5 288.1 L1303.5 310.4 L1303.9 296.0 L1303.9 285.6 L1304.2 298.1 L1304.2 319.8 L1304.5 333.3 L1304.5 312.9 L1304.9 331.4 L1304.9 351.3 L1305.2 345.3 L1305.2 327.2 L1305.5 307.9 L1305.5 331.5 L1305.9 323.2 L1305.9 287.5 L1306.2 287.6 L1306.2 302.8 L1306.5 318.5 L1306.5 293.6 L1306.8 309.6 L1306.8 338.7 L1307.2 347.9 L1307.2 331.5 L1307.5 327.9 L1307.5 338.2 L1307.8 335.3 L1307.8 311.8 L1308.2 292.7 L1308.2 310.8 L1308.5 299.8 L1308.5 285.5 L1308.8 295.6 L1308.8 314.6 L1309.2 336.7 L1309.2 316.0 L1309.5 325.7 L1309.5 343.2 L1309.8 340.0 L1309.8 326.7 L1310.1 293.9 L1310.1 329.9 L1310.5 310.4 L1310.5 293.4 L1310.8 283.4 L1310.8 303.3 L1311.1 327.8 L1311.1 295.8 L1311.5 311.7 L1311.5 332.8 L1311.8 342.5 L1311.8 334.2 L1312.1 329.6 L1312.1 347.0 L1312.5 333.8 L1312.5 300.6 L1312.8 289.1 L1312.8 312.6 L1313.1 294.3 L1313.1 285.3 L1313.4 300.6 L1313.4 313.4 L1313.8 330.5 L1313.8 313.0 L1314.1 327.0 L1314.1 345.5 L1314.4 346.5 L1314.4 330.3 L1314.8 312.2 L1314.8 330.5 L1315.1 312.0 L1315.1 293.5 L1315.4 278.1 L1315.4 307.4 L1315.8 321.4 L1315.8 291.4 L1316.1 311.4 L1316.1 332.2 L1316.4 344.9 L1316.4 326.4 L1316.7 328.1 L1316.7 352.2 L1317.1 340.7 L1317.1 307.9 L1317.4 292.2 L1317.4 320.8 L1317.7 306.9 L1317.7 276.9 L1318.1 292.0 L1318.1 312.8 L1318.4 331.5 L1318.4 306.8 L1318.7 323.4 L1318.7 350.7 L1319.1 347.0 L1319.1 328.0 L1319.4 310.0 L1319.4 336.1 L1319.7 334.7 L1319.7 293.5 L1320.0 280.8 L1320.0 300.1 L1320.4 308.0 L1320.4 289.3 L1320.7 306.0 L1320.7 329.4 L1321.0 355.0 L1321.0 328.3 L1321.4 329.8 L1321.4 364.3 L1321.7 350.3 L1321.7 317.1 L1322.0 295.3 L1322.0 321.7 L1322.4 312.8 L1322.4 281.2 L1322.7 284.3 L1322.7 301.6 L1323.0 335.9 L1323.0 292.7 L1323.3 319.2 L1323.3 336.6 L1323.7 362.4 L1323.7 335.6 L1324.0 311.6 L1324.0 349.3 L1324.3 318.0 L1324.3 293.4 L1324.7 287.5 L1324.7 304.7 L1325.0 307.8 L1325.0 287.9 L1325.3 295.4 L1325.3 328.7 L1325.7 340.1 L1325.7 317.0 L1326.0 336.0 L1326.0 349.8 L1326.3 340.8 L1326.3 319.4 L1326.6 297.3 L1326.6 317.8 L1327.0 302.6 L1327.0 284.6 L1327.3 289.4 L1327.3 300.9 L1327.6 322.3 L1327.6 302.7 L1328.0 331.5 L1328.0 343.5 L1328.3 339.7 L1328.3 331.5 L1328.6 329.2 L1328.6 338.2 L1329.0 328.7 L1329.0 309.7" fill="none" stroke="#c52b3b" stroke-width="0.8" opacity="0.9" stroke-linejoin="bevel"/><rect x="862.5" y="174.5" width="467.0" height="287.0" fill="none" stroke="#484848" stroke-width="1"/></svg>
<span class="t" style="left:1080.0px;top:161.3px;font-size:11.5px;color:#111;transform:scaleX(0.951);">Scope</span>
<span class="t" style="left:1075.5px;top:477.6px;font-size:12px;color:#111;transform:scaleX(0.919);">Time (s)</span>
<span class="t" style="left:834.6px;top:442.37999999999994px;font-size:12px;color:#111;">-30u</span>
<span class="t" style="left:834.6px;top:420.54999999999995px;font-size:12px;color:#111;">-25u</span>
<span class="t" style="left:834.6px;top:398.71999999999997px;font-size:12px;color:#111;">-20u</span>
<span class="t" style="left:834.6px;top:376.89px;font-size:12px;color:#111;">-15u</span>
<span class="t" style="left:834.6px;top:355.06px;font-size:12px;color:#111;">-10u</span>
<span class="t" style="left:841.3px;top:333.22999999999996px;font-size:12px;color:#111;">-5u</span>
<span class="t" style="left:851.9px;top:311.4px;font-size:12px;color:#111;">0</span>
<span class="t" style="left:845.3px;top:289.57px;font-size:12px;color:#111;">5u</span>
<span class="t" style="left:838.6px;top:267.73999999999995px;font-size:12px;color:#111;">10u</span>
<span class="t" style="left:838.6px;top:245.90999999999997px;font-size:12px;color:#111;">15u</span>
<span class="t" style="left:838.6px;top:224.07999999999998px;font-size:12px;color:#111;">20u</span>
<span class="t" style="left:838.6px;top:202.25px;font-size:12px;color:#111;">25u</span>
<span class="t" style="left:838.6px;top:180.42px;font-size:12px;color:#111;">30u</span>
<span class="t" style="left:859.2px;top:465.6px;font-size:12px;color:#111;">0</span>
<span class="t" style="left:897.5px;top:465.6px;font-size:12px;color:#111;">20m</span>
<span class="t" style="left:944.2px;top:465.6px;font-size:12px;color:#111;">40m</span>
<span class="t" style="left:990.9px;top:465.6px;font-size:12px;color:#111;">60m</span>
<span class="t" style="left:1037.6px;top:465.6px;font-size:12px;color:#111;">80m</span>
<span class="t" style="left:1081.0px;top:465.6px;font-size:12px;color:#111;">100m</span>
<span class="t" style="left:1127.7px;top:465.6px;font-size:12px;color:#111;">120m</span>
<span class="t" style="left:1174.4px;top:465.6px;font-size:12px;color:#111;">140m</span>
<span class="t" style="left:1221.1px;top:465.6px;font-size:12px;color:#111;">160m</span>
<span class="t" style="left:1267.8px;top:465.6px;font-size:12px;color:#111;">180m</span>
<span class="t" style="left:818.2px;top:380.4px;font-size:11.5px;color:#111;transform-origin:0 0;transform:rotate(-90deg) scaleX(1.011);">Instantaneous Level (D)</span>
<div style="left:1369.8px;top:159.6px;width:540.2px;height:334.4px;background:#fff;"></div>
<svg class="a" style="left:0;top:0" width="1920" height="520" viewBox="0 0 1920 520"><path d="M1444.5 174.5V461.5" stroke="#c9c9c9" stroke-width="1"/><path d="M1464.5 174.5V461.5" stroke="#eaeaea" stroke-width="1"/><path d="M1479.5 174.5V461.5" stroke="#c9c9c9" stroke-width="1"/><path d="M1491.5 174.5V461.5" stroke="#eaeaea" stroke-width="1"/><path d="M1502.5 174.5V461.5" stroke="#eaeaea" stroke-width="1"/><path d="M1511.5 174.5V461.5" stroke="#eaeaea" stroke-width="1"/><path d="M1519.5 174.5V461.5" stroke="#eaeaea" stroke-width="1"/><path d="M1526.5 174.5V461.5" stroke="#c9c9c9" stroke-width="1"/><path d="M1573.5 174.5V461.5" stroke="#c9c9c9" stroke-width="1"/><path d="M1600.5 174.5V461.5" stroke="#c9c9c9" stroke-width="1"/><path d="M1620.5 174.5V461.5" stroke="#eaeaea" stroke-width="1"/><path d="M1635.5 174.5V461.5" stroke="#c9c9c9" stroke-width="1"/><path d="M1647.5 174.5V461.5" stroke="#eaeaea" stroke-width="1"/><path d="M1657.5 174.5V461.5" stroke="#eaeaea" stroke-width="1"/><path d="M1666.5 174.5V461.5" stroke="#eaeaea" stroke-width="1"/><path d="M1674.5 174.5V461.5" stroke="#eaeaea" stroke-width="1"/><path d="M1681.5 174.5V461.5" stroke="#c9c9c9" stroke-width="1"/><path d="M1728.5 174.5V461.5" stroke="#c9c9c9" stroke-width="1"/><path d="M1756.5 174.5V461.5" stroke="#c9c9c9" stroke-width="1"/><path d="M1775.5 174.5V461.5" stroke="#eaeaea" stroke-width="1"/><path d="M1790.5 174.5V461.5" stroke="#c9c9c9" stroke-width="1"/><path d="M1803.5 174.5V461.5" stroke="#eaeaea" stroke-width="1"/><path d="M1813.5 174.5V461.5" stroke="#eaeaea" stroke-width="1"/><path d="M1822.5 174.5V461.5" stroke="#eaeaea" stroke-width="1"/><path d="M1830.5 174.5V461.5" stroke="#eaeaea" stroke-width="1"/><path d="M1837.5 174.5V461.5" stroke="#c9c9c9" stroke-width="1"/><path d="M1417.5 181.5H1884.5" stroke="#c9c9c9" stroke-width="1"/><path d="M1417.5 195.5H1884.5" stroke="#eaeaea" stroke-width="1"/><path d="M1417.5 209.5H1884.5" stroke="#c9c9c9" stroke-width="1"/><path d="M1417.5 224.5H1884.5" stroke="#eaeaea" stroke-width="1"/><path d="M1417.5 238.5H1884.5" stroke="#c9c9c9" stroke-width="1"/><path d="M1417.5 252.5H1884.5" stroke="#eaeaea" stroke-width="1"/><path d="M1417.5 267.5H1884.5" stroke="#c9c9c9" stroke-width="1"/><path d="M1417.5 281.5H1884.5" stroke="#eaeaea" stroke-width="1"/><path d="M1417.5 296.5H1884.5" stroke="#c9c9c9" stroke-width="1"/><path d="M1417.5 310.5H1884.5" stroke="#eaeaea" stroke-width="1"/><path d="M1417.5 324.5H1884.5" stroke="#c9c9c9" stroke-width="1"/><path d="M1417.5 339.5H1884.5" stroke="#eaeaea" stroke-width="1"/><path d="M1417.5 353.5H1884.5" stroke="#c9c9c9" stroke-width="1"/><path d="M1417.5 368.5H1884.5" stroke="#eaeaea" stroke-width="1"/><path d="M1417.5 382.5H1884.5" stroke="#c9c9c9" stroke-width="1"/><path d="M1417.5 396.5H1884.5" stroke="#eaeaea" stroke-width="1"/><path d="M1417.5 411.5H1884.5" stroke="#c9c9c9" stroke-width="1"/><path d="M1417.5 425.5H1884.5" stroke="#eaeaea" stroke-width="1"/><path d="M1417.5 440.5H1884.5" stroke="#c9c9c9" stroke-width="1"/><path d="M1417.5 454.5H1884.5" stroke="#eaeaea" stroke-width="1"/><path d="M1417.5 399.8 L1418.3 400.1 L1419.1 401.1 L1419.9 402.5 L1420.7 404.1 L1421.5 405.8 L1422.3 407.2 L1423.1 408.1 L1424.0 408.4 L1424.8 407.9 L1425.6 406.4 L1426.4 404.2 L1427.2 401.8 L1428.0 399.5 L1428.8 397.8 L1429.6 397.0 L1430.4 396.7 L1431.2 396.0 L1432.0 394.9 L1432.8 393.5 L1433.6 392.3 L1434.4 391.5 L1435.2 391.2 L1436.0 391.3 L1436.9 391.8 L1437.7 392.5 L1438.5 393.2 L1439.3 393.8 L1440.1 394.0 L1440.9 394.2 L1441.7 395.1 L1442.5 396.5 L1443.3 398.2 L1444.1 400.0 L1444.9 401.8 L1445.7 403.1 L1446.5 403.9 L1447.3 404.1 L1448.1 402.8 L1449.0 400.2 L1449.8 396.5 L1450.6 392.5 L1451.4 388.7 L1452.2 385.7 L1453.0 384.1 L1453.8 383.9 L1454.6 383.1 L1455.4 382.0 L1456.2 381.0 L1457.0 380.4 L1457.8 380.7 L1458.6 382.0 L1459.4 384.2 L1460.2 386.7 L1461.0 389.0 L1461.9 390.6 L1462.7 391.2 L1463.5 391.6 L1464.3 392.9 L1465.1 394.6 L1465.9 396.3 L1466.7 397.7 L1467.5 398.3 L1468.3 398.3 L1469.1 398.0 L1469.9 397.7 L1470.7 397.3 L1471.5 397.0 L1472.3 396.9 L1473.1 396.5 L1474.0 395.3 L1474.8 393.6 L1475.6 391.7 L1476.4 390.0 L1477.2 388.8 L1478.0 388.3 L1478.8 388.2 L1479.6 387.8 L1480.4 387.4 L1481.2 387.0 L1482.0 386.8 L1482.8 386.8 L1483.6 386.5 L1484.4 386.2 L1485.2 385.8 L1486.0 385.5 L1486.9 385.4 L1487.7 385.8 L1488.5 387.6 L1489.3 390.5 L1490.1 393.6 L1490.9 395.9 L1491.7 396.9 L1492.5 398.3 L1493.3 402.4 L1494.1 408.1 L1494.9 413.4 L1495.7 416.6 L1496.5 416.6 L1497.3 413.1 L1498.1 407.3 L1498.9 401.4 L1499.8 397.6 L1500.6 396.5 L1501.4 392.6 L1502.2 387.2 L1503.0 384.1 L1503.8 384.8 L1504.6 387.7 L1505.4 390.5 L1506.2 391.3 L1507.0 393.2 L1507.8 396.6 L1508.6 399.8 L1509.4 401.2 L1510.2 400.7 L1511.0 399.4 L1511.9 397.8 L1512.7 397.0 L1513.5 401.3 L1514.3 411.9 L1515.1 410.3 L1515.9 401.2 L1516.7 394.4 L1517.5 393.8 L1518.3 393.1 L1519.1 392.6 L1519.0 397.4 L1521.8 412.8 L1523.2 399.8 L1526.0 394.4 L1527.4 412.2 L1528.8 390.2 L1531.6 394.3 L1533.0 394.5 L1534.4 383.2 L1537.2 406.7 L1538.6 399.5 L1540.0 386.2 L1541.4 397.1 L1542.8 404.9 L1544.2 388.9 L1545.6 401.0 L1547.0 389.5 L1548.4 398.9 L1549.8 387.7 L1551.2 414.5 L1552.6 406.7 L1554.0 387.6 L1555.4 387.4 L1556.8 396.4 L1558.2 382.3 L1559.6 392.8 L1561.0 403.9 L1562.4 395.5 L1562.4 394.4 L1563.8 382.9 L1565.2 400.2 L1566.6 401.8 L1568.0 385.7 L1568.0 392.7 L1569.4 388.3 L1570.8 400.8 L1572.2 407.7 L1572.2 392.8 L1573.6 395.2 L1575.0 401.0 L1575.0 401.6 L1576.4 410.9 L1577.8 406.3 L1577.8 388.2 L1579.2 390.5 L1580.6 391.5 L1580.6 392.5 L1582.0 388.0 L1583.4 397.9 L1583.4 385.7 L1584.8 390.6 L1584.8 421.0 L1586.2 395.9 L1587.6 394.9 L1587.6 385.6 L1589.0 395.0 L1589.0 401.9 L1590.4 409.4 L1590.4 397.3 L1591.8 387.9 L1591.8 394.4 L1593.2 435.6 L1593.2 395.0 L1594.6 397.2 L1596.0 392.9 L1596.0 394.9 L1597.4 419.3 L1597.4 392.4 L1598.8 387.4 L1598.8 413.7 L1600.2 402.3 L1600.2 391.9 L1601.6 398.1 L1601.6 401.3 L1603.0 400.5 L1603.0 393.6 L1604.4 389.4 L1604.4 398.6 L1605.8 398.7 L1605.8 384.3 L1607.2 393.4 L1607.2 403.8 L1608.6 404.9 L1608.6 393.7 L1610.0 390.7 L1610.0 414.2 L1611.4 395.9 L1611.4 387.2 L1612.8 391.3 L1612.8 399.3 L1614.2 403.2 L1614.2 394.5 L1615.6 383.8 L1615.6 401.6 L1617.0 396.5 L1617.0 387.2 L1618.4 387.7 L1618.4 394.3 L1619.8 395.7 L1619.8 384.2 L1621.2 390.3 L1621.2 395.2 L1622.6 402.8 L1622.6 390.8 L1624.0 374.3 L1624.0 396.7 L1625.4 383.5 L1625.4 364.2 L1626.8 392.7 L1626.8 410.2 L1628.2 405.6 L1628.2 395.8 L1629.6 390.9 L1629.6 417.6 L1631.0 405.1 L1631.0 390.8 L1632.4 391.0 L1632.4 395.1 L1633.8 400.5 L1633.8 384.6 L1635.2 387.6 L1635.2 409.7 L1636.6 421.2 L1636.6 389.3 L1638.0 390.4 L1638.0 401.2 L1639.4 400.6 L1639.4 390.8 L1640.8 383.3 L1640.8 400.4 L1642.2 408.7 L1642.2 387.8 L1643.6 400.0 L1643.6 406.4 L1645.0 401.4 L1645.0 394.5 L1646.4 385.7 L1646.4 414.3 L1647.8 409.4 L1647.8 398.6 L1649.2 389.7 L1649.2 396.6 L1650.6 404.3 L1650.6 384.8 L1652.0 386.2 L1652.0 398.2 L1653.4 400.7 L1653.4 391.8 L1654.8 387.3 L1654.8 399.0 L1656.2 400.0 L1656.2 383.8 L1657.6 387.2 L1657.6 401.4 L1659.0 404.7 L1659.0 390.5 L1660.4 385.1 L1660.4 398.8 L1661.8 408.4 L1661.8 379.5 L1663.2 386.7 L1663.2 394.9 L1664.6 408.5 L1664.6 390.6 L1666.0 386.6 L1666.0 392.3 L1667.4 407.9 L1667.4 380.8 L1668.8 384.4 L1668.8 394.0 L1670.2 414.6 L1670.2 385.4 L1671.6 373.0 L1671.6 395.5 L1673.0 409.2 L1673.0 385.5 L1674.4 386.2 L1674.4 403.0 L1675.8 407.8 L1675.8 384.8 L1677.2 392.5 L1677.2 413.7 L1678.6 408.8 L1678.6 385.9 L1680.0 388.0 L1680.0 402.8 L1681.4 400.7 L1681.4 355.1 L1682.8 365.2 L1682.8 416.2 L1684.2 405.0 L1684.2 388.5 L1685.6 384.4 L1685.6 402.8 L1687.0 419.2 L1687.0 390.5 L1688.4 386.9 L1688.4 400.6 L1689.8 410.4 L1689.8 391.6 L1691.2 387.7 L1691.2 401.5 L1692.6 407.4 L1692.6 388.7 L1694.0 387.5 L1694.0 413.6 L1695.4 410.4 L1695.4 386.4 L1696.8 387.0 L1696.8 414.0 L1698.2 406.1 L1698.2 387.4 L1699.6 390.6 L1699.6 404.3 L1701.0 415.1 L1701.0 383.8 L1702.4 384.2 L1702.4 412.5 L1703.8 436.8 L1703.8 389.0 L1705.2 386.9 L1705.2 412.4 L1706.6 413.3 L1706.6 385.5 L1708.0 382.6 L1708.0 410.1 L1709.4 407.8 L1709.4 385.0 L1710.8 386.1 L1710.8 414.0 L1712.2 410.6 L1712.2 380.4 L1713.6 387.4 L1713.6 407.6 L1715.0 408.7 L1715.0 388.5 L1716.4 384.7 L1716.4 415.1 L1717.8 407.1 L1717.8 377.4 L1719.2 386.0 L1719.2 413.3 L1720.6 403.6 L1720.6 386.7 L1722.0 382.9 L1722.0 411.5 L1723.4 414.8 L1723.4 379.3 L1724.8 383.2 L1724.8 403.8 L1726.2 409.9 L1726.2 380.8 L1727.6 384.1 L1727.6 410.8 L1729.0 412.2 L1729.0 383.9 L1730.4 386.0 L1730.4 406.8 L1731.8 399.7 L1731.8 384.2 L1733.2 384.6 L1733.2 404.3 L1734.6 413.4 L1734.6 385.8 L1736.0 384.8 L1736.0 409.9 L1737.4 408.8 L1737.4 382.7 L1738.8 382.6 L1738.8 414.9 L1740.2 406.6 L1740.2 382.1 L1741.6 384.9 L1741.6 399.7 L1743.0 411.5 L1743.0 387.5 L1744.4 384.2 L1744.4 416.2 L1745.8 407.9 L1745.8 381.9 L1747.2 382.1 L1747.2 430.1 L1748.6 409.9 L1748.6 383.8 L1750.0 384.4 L1750.0 410.1 L1751.4 406.3 L1751.4 386.6 L1752.8 385.0 L1752.8 421.6 L1754.2 418.2 L1754.2 383.4 L1755.6 383.2 L1755.6 410.4 L1757.0 412.7 L1757.0 389.1 L1758.4 385.6 L1758.4 418.5 L1759.8 439.5 L1759.8 385.2 L1761.2 386.4 L1761.2 410.7 L1762.6 411.3 L1762.6 383.7 L1764.0 386.3 L1764.0 421.4 L1765.4 424.5 L1765.4 388.7 L1766.8 386.2 L1766.8 409.8 L1768.2 425.4 L1768.2 387.6 L1769.6 383.3 L1769.6 410.9 L1771.0 416.5 L1771.0 383.3 L1772.4 383.8 L1772.4 406.3 L1773.8 415.5 L1773.8 385.1 L1775.2 383.6 L1775.2 418.1 L1776.6 416.7 L1776.6 385.9 L1778.0 387.0 L1778.0 409.9 L1779.4 412.5 L1779.4 380.0 L1780.8 387.9 L1780.8 423.3 L1782.2 427.0 L1782.2 379.8 L1783.6 381.9 L1783.6 419.3 L1785.0 419.4 L1785.0 383.7 L1786.4 385.0 L1786.4 410.9 L1787.8 432.5 L1787.8 384.3 L1789.2 382.7 L1789.2 432.6 L1790.6 435.2 L1790.6 379.2 L1792.0 384.3 L1792.0 451.9 L1793.4 419.2 L1793.4 383.7 L1794.8 383.9 L1794.8 438.3 L1796.2 423.2 L1796.2 380.8 L1797.6 384.7 L1797.6 411.2 L1799.0 423.0 L1799.0 381.1 L1800.4 387.0 L1800.4 429.6 L1801.8 410.3 L1801.8 386.2 L1803.2 380.3 L1803.2 427.0 L1804.6 415.9 L1804.6 382.5 L1806.0 382.5 L1806.0 428.4 L1807.4 413.1 L1807.4 379.9 L1808.8 381.2 L1808.8 419.1 L1810.2 413.3 L1810.2 384.0 L1811.6 385.2 L1811.6 410.3 L1813.0 410.9 L1813.0 383.9 L1814.4 384.5 L1814.4 422.8 L1815.8 414.4 L1815.8 384.5 L1817.2 381.3 L1817.2 447.1 L1818.6 412.8 L1818.6 383.3 L1820.0 379.7 L1820.0 421.3 L1821.4 416.4 L1821.4 383.0 L1822.8 380.1 L1822.8 411.5 L1824.2 436.9 L1824.2 384.0 L1825.6 382.8 L1825.6 416.5 L1827.0 418.5 L1827.0 384.1 L1828.4 382.1 L1828.4 429.1 L1829.8 414.0 L1829.8 380.9 L1831.2 383.2 L1831.2 422.5 L1832.6 412.3 L1832.6 383.3 L1834.0 384.0 L1834.0 422.9 L1835.4 424.1 L1835.4 380.8 L1836.8 381.7 L1836.8 421.3 L1838.2 417.9 L1838.2 382.4 L1839.6 383.0 L1839.6 416.2 L1841.0 425.0 L1841.0 378.4 L1842.4 381.1 L1842.4 425.9 L1843.8 426.3 L1843.8 385.9 L1845.2 384.1 L1845.2 426.7 L1846.6 416.9 L1846.6 382.7 L1848.0 381.9 L1848.0 429.5 L1849.4 413.0 L1849.4 382.0 L1850.8 383.1 L1850.8 411.2 L1852.2 448.6 L1852.2 383.4 L1853.6 379.8 L1853.6 430.5 L1855.0 419.1 L1855.0 377.4 L1856.4 382.1 L1856.4 429.9 L1857.8 439.6 L1857.8 379.8 L1859.2 380.3 L1859.2 429.3 L1860.6 423.9 L1860.6 383.1 L1862.0 383.5 L1862.0 432.7 L1863.4 421.3 L1863.4 381.9 L1864.8 383.6 L1864.8 425.8 L1866.2 419.8 L1866.2 381.4 L1867.6 380.6 L1867.6 431.8 L1869.0 420.8 L1869.0 379.4 L1870.4 382.0 L1870.4 431.7 L1871.8 436.1 L1871.8 382.0 L1873.2 381.5 L1873.2 447.3 L1874.6 448.2 L1874.6 380.4 L1876.0 381.4 L1876.0 418.8 L1877.4 426.0 L1877.4 383.3 L1878.8 380.5 L1878.8 422.5 L1880.2 432.9 L1880.2 379.2 L1881.6 381.7 L1881.6 424.9 L1883.0 424.9 L1883.0 380.1 L1884.4 379.6 L1884.4 437.0" fill="none" stroke="#3d5a9a" stroke-width="0.9" opacity="1" stroke-linejoin="bevel"/><path d="M1417.5 386.8 L1418.3 386.2 L1419.1 384.3 L1419.9 381.5 L1420.7 378.2 L1421.5 374.9 L1422.3 372.1 L1423.1 370.2 L1424.0 369.6 L1424.8 369.4 L1425.6 368.8 L1426.4 368.0 L1427.2 367.1 L1428.0 366.2 L1428.8 365.6 L1429.6 365.3 L1430.4 365.4 L1431.2 365.9 L1432.0 366.8 L1432.8 367.8 L1433.6 368.7 L1434.4 369.3 L1435.2 369.6 L1436.0 370.0 L1436.9 371.3 L1437.7 373.0 L1438.5 374.7 L1439.3 376.1 L1440.1 376.7 L1440.9 376.4 L1441.7 375.2 L1442.5 373.4 L1443.3 371.5 L1444.1 370.1 L1444.9 369.6 L1445.7 368.9 L1446.5 366.9 L1447.3 364.0 L1448.1 360.5 L1449.0 357.1 L1449.8 354.2 L1450.6 352.2 L1451.4 351.6 L1452.2 351.9 L1453.0 352.9 L1453.8 354.0 L1454.6 354.9 L1455.4 355.2 L1456.2 355.9 L1457.0 357.9 L1457.8 360.6 L1458.6 363.5 L1459.4 366.0 L1460.2 367.7 L1461.0 368.1 L1461.9 367.8 L1462.7 367.2 L1463.5 366.3 L1464.3 365.5 L1465.1 364.8 L1465.9 364.5 L1466.7 364.8 L1467.5 365.6 L1468.3 366.9 L1469.1 368.2 L1469.9 369.1 L1470.7 369.6 L1471.5 370.7 L1472.3 374.1 L1473.1 378.9 L1474.0 383.4 L1474.8 386.3 L1475.6 387.0 L1476.4 388.5 L1477.2 391.2 L1478.0 394.2 L1478.8 396.3 L1479.6 396.9 L1480.4 395.1 L1481.2 391.5 L1482.0 387.5 L1482.8 384.6 L1483.6 384.0 L1484.4 384.7 L1485.2 386.1 L1486.0 387.5 L1486.9 388.2 L1487.7 388.0 L1488.5 386.9 L1489.3 385.4 L1490.1 384.2 L1490.9 383.8 L1491.7 381.4 L1492.5 377.2 L1493.3 373.6 L1494.1 372.5 L1494.9 373.9 L1495.7 377.1 L1496.5 380.9 L1497.3 384.1 L1498.1 385.4 L1498.9 382.8 L1499.8 375.0 L1500.6 365.1 L1501.4 357.0 L1502.2 353.7 L1503.0 353.5 L1503.8 353.1 L1504.6 354.9 L1505.4 363.9 L1506.2 373.7 L1507.0 376.6 L1507.8 372.5 L1508.6 364.4 L1509.4 356.3 L1510.2 352.4 L1511.0 352.6 L1511.9 353.7 L1512.7 354.4 L1513.5 357.4 L1514.3 364.6 L1515.1 372.4 L1515.9 389.9 L1516.7 391.3 L1517.5 391.8 L1518.3 392.3 L1519.1 392.6 L1519.0 388.7 L1521.8 398.6 L1523.2 386.2 L1526.0 383.7 L1527.4 398.5 L1528.8 393.7 L1531.6 388.4 L1533.0 390.1 L1534.4 383.5 L1537.2 404.6 L1538.6 391.2 L1540.0 421.0 L1541.4 386.5 L1542.8 398.3 L1544.2 392.0 L1545.6 398.7 L1547.0 406.7 L1548.4 386.0 L1549.8 410.9 L1551.2 409.9 L1552.6 396.0 L1554.0 393.4 L1555.4 391.1 L1556.8 400.6 L1558.2 387.4 L1559.6 412.5 L1561.0 403.9 L1562.4 395.2 L1562.4 387.9 L1563.8 406.2 L1565.2 394.6 L1566.6 390.7 L1568.0 383.2 L1568.0 391.9 L1569.4 390.5 L1570.8 391.0 L1572.2 413.0 L1572.2 391.3 L1573.6 388.8 L1575.0 383.9 L1575.0 400.6 L1576.4 392.3 L1577.8 391.9 L1577.8 390.8 L1579.2 396.0 L1580.6 385.6 L1580.6 388.2 L1582.0 401.7 L1583.4 395.3 L1583.4 389.4 L1584.8 382.2 L1584.8 394.4 L1586.2 401.7 L1587.6 401.9 L1587.6 377.9 L1589.0 381.4 L1589.0 412.5 L1590.4 400.1 L1590.4 386.9 L1591.8 386.5 L1591.8 397.8 L1593.2 388.6 L1593.2 387.9 L1594.6 388.1 L1596.0 393.4 L1596.0 395.9 L1597.4 393.0 L1597.4 388.1 L1598.8 391.4 L1598.8 397.1 L1600.2 392.8 L1600.2 384.1 L1601.6 394.7 L1601.6 398.1 L1603.0 399.6 L1603.0 393.6 L1604.4 396.5 L1604.4 406.7 L1605.8 420.1 L1605.8 389.9 L1607.2 389.3 L1607.2 395.5 L1608.6 394.2 L1608.6 391.3 L1610.0 402.6 L1610.0 410.3 L1611.4 404.3 L1611.4 395.2 L1612.8 393.7 L1612.8 403.1 L1614.2 396.7 L1614.2 390.7 L1615.6 385.8 L1615.6 393.9 L1617.0 405.2 L1617.0 391.6 L1618.4 395.0 L1618.4 398.1 L1619.8 404.1 L1619.8 393.4 L1621.2 393.6 L1621.2 425.0 L1622.6 407.3 L1622.6 396.6 L1624.0 396.5 L1624.0 405.7 L1625.4 406.1 L1625.4 385.5 L1626.8 393.5 L1626.8 401.4 L1628.2 392.8 L1628.2 389.9 L1629.6 388.1 L1629.6 399.8 L1631.0 390.0 L1631.0 385.7 L1632.4 389.4 L1632.4 397.9 L1633.8 410.3 L1633.8 388.2 L1635.2 387.0 L1635.2 397.2 L1636.6 418.5 L1636.6 393.9 L1638.0 388.8 L1638.0 395.8 L1639.4 409.2 L1639.4 394.8 L1640.8 389.1 L1640.8 399.2 L1642.2 409.5 L1642.2 389.6 L1643.6 385.9 L1643.6 408.6 L1645.0 411.0 L1645.0 381.2 L1646.4 383.1 L1646.4 403.0 L1647.8 393.9 L1647.8 384.0 L1649.2 391.9 L1649.2 400.8 L1650.6 403.6 L1650.6 390.5 L1652.0 394.8 L1652.0 398.2 L1653.4 401.4 L1653.4 385.7 L1654.8 384.8 L1654.8 399.6 L1656.2 407.9 L1656.2 378.5 L1657.6 387.4 L1657.6 417.1 L1659.0 399.1 L1659.0 388.4 L1660.4 392.0 L1660.4 398.0 L1661.8 403.1 L1661.8 389.8 L1663.2 387.1 L1663.2 415.4 L1664.6 401.8 L1664.6 389.6 L1666.0 393.6 L1666.0 421.9 L1667.4 404.0 L1667.4 389.3 L1668.8 387.1 L1668.8 434.3 L1670.2 413.2 L1670.2 391.6 L1671.6 392.8 L1671.6 404.2 L1673.0 407.1 L1673.0 393.5 L1674.4 387.2 L1674.4 403.6 L1675.8 400.1 L1675.8 387.9 L1677.2 386.9 L1677.2 398.9 L1678.6 403.3 L1678.6 382.8 L1680.0 385.3 L1680.0 408.5 L1681.4 418.0 L1681.4 340.3 L1682.8 349.5 L1682.8 409.2 L1684.2 426.5 L1684.2 394.2 L1685.6 383.3 L1685.6 402.3 L1687.0 408.4 L1687.0 388.3 L1688.4 388.4 L1688.4 419.1 L1689.8 405.6 L1689.8 384.6 L1691.2 380.7 L1691.2 405.7 L1692.6 417.6 L1692.6 385.7 L1694.0 387.5 L1694.0 409.5 L1695.4 403.4 L1695.4 383.8 L1696.8 384.5 L1696.8 395.8 L1698.2 404.2 L1698.2 384.1 L1699.6 387.1 L1699.6 407.9 L1701.0 404.4 L1701.0 387.5 L1702.4 384.1 L1702.4 407.7 L1703.8 398.7 L1703.8 385.8 L1705.2 383.0 L1705.2 404.0 L1706.6 415.9 L1706.6 386.8 L1708.0 382.8 L1708.0 404.9 L1709.4 419.5 L1709.4 383.5 L1710.8 389.8 L1710.8 418.5 L1712.2 408.2 L1712.2 388.9 L1713.6 383.8 L1713.6 411.6 L1715.0 418.5 L1715.0 385.0 L1716.4 381.2 L1716.4 405.8 L1717.8 413.5 L1717.8 383.7 L1719.2 384.3 L1719.2 412.3 L1720.6 412.9 L1720.6 381.4 L1722.0 387.8 L1722.0 401.9 L1723.4 407.1 L1723.4 387.5 L1724.8 384.2 L1724.8 414.4 L1726.2 404.1 L1726.2 386.1 L1727.6 385.6 L1727.6 408.0 L1729.0 417.9 L1729.0 385.3 L1730.4 385.6 L1730.4 406.9 L1731.8 426.1 L1731.8 381.4 L1733.2 377.9 L1733.2 413.2 L1734.6 418.3 L1734.6 381.1 L1736.0 385.6 L1736.0 423.8 L1737.4 409.0 L1737.4 386.5 L1738.8 385.6 L1738.8 419.8 L1740.2 419.7 L1740.2 382.8 L1741.6 381.4 L1741.6 403.3 L1743.0 422.5 L1743.0 378.4 L1744.4 381.8 L1744.4 403.9 L1745.8 405.1 L1745.8 389.2 L1747.2 384.5 L1747.2 413.0 L1748.6 413.2 L1748.6 388.5 L1750.0 385.5 L1750.0 404.0 L1751.4 408.5 L1751.4 384.0 L1752.8 387.0 L1752.8 413.3 L1754.2 406.7 L1754.2 384.2 L1755.6 384.5 L1755.6 417.6 L1757.0 418.4 L1757.0 384.5 L1758.4 384.9 L1758.4 419.9 L1759.8 407.0 L1759.8 384.8 L1761.2 381.0 L1761.2 421.1 L1762.6 415.4 L1762.6 383.1 L1764.0 378.4 L1764.0 419.3 L1765.4 415.1 L1765.4 382.2 L1766.8 385.7 L1766.8 411.4 L1768.2 421.2 L1768.2 381.4 L1769.6 385.0 L1769.6 412.4 L1771.0 430.4 L1771.0 386.6 L1772.4 387.0 L1772.4 416.2 L1773.8 419.8 L1773.8 379.2 L1775.2 382.1 L1775.2 417.6 L1776.6 422.3 L1776.6 385.7 L1778.0 383.3 L1778.0 425.9 L1779.4 418.2 L1779.4 380.7 L1780.8 381.2 L1780.8 420.3 L1782.2 416.6 L1782.2 382.7 L1783.6 383.8 L1783.6 416.3 L1785.0 421.0 L1785.0 385.0 L1786.4 383.1 L1786.4 412.9 L1787.8 427.6 L1787.8 382.0 L1789.2 381.7 L1789.2 418.7 L1790.6 421.4 L1790.6 383.6 L1792.0 385.4 L1792.0 416.3 L1793.4 414.1 L1793.4 385.3 L1794.8 382.1 L1794.8 425.3 L1796.2 423.2 L1796.2 384.5 L1797.6 379.6 L1797.6 416.0 L1799.0 418.0 L1799.0 380.6 L1800.4 387.4 L1800.4 422.2 L1801.8 408.2 L1801.8 383.3 L1803.2 383.4 L1803.2 400.7 L1804.6 425.0 L1804.6 383.2 L1806.0 380.7 L1806.0 417.1 L1807.4 414.4 L1807.4 384.1 L1808.8 380.6 L1808.8 407.3 L1810.2 423.2 L1810.2 380.1 L1811.6 381.7 L1811.6 421.1 L1813.0 423.7 L1813.0 383.0 L1814.4 382.0 L1814.4 427.2 L1815.8 426.0 L1815.8 385.4 L1817.2 383.4 L1817.2 417.1 L1818.6 419.6 L1818.6 381.9 L1820.0 378.2 L1820.0 428.7 L1821.4 418.4 L1821.4 381.3 L1822.8 381.5 L1822.8 412.5 L1824.2 413.6 L1824.2 379.0 L1825.6 384.5 L1825.6 423.7 L1827.0 417.2 L1827.0 381.7 L1828.4 381.7 L1828.4 417.7 L1829.8 418.7 L1829.8 381.1 L1831.2 382.1 L1831.2 410.5 L1832.6 413.4 L1832.6 383.1 L1834.0 382.1 L1834.0 440.9 L1835.4 418.7 L1835.4 381.0 L1836.8 383.8 L1836.8 418.0 L1838.2 419.5 L1838.2 381.0 L1839.6 385.7 L1839.6 417.3 L1841.0 431.6 L1841.0 382.4 L1842.4 380.5 L1842.4 416.8 L1843.8 445.9 L1843.8 380.6 L1845.2 382.9 L1845.2 443.2 L1846.6 414.6 L1846.6 379.6 L1848.0 383.1 L1848.0 425.1 L1849.4 420.8 L1849.4 380.5 L1850.8 380.0 L1850.8 414.7 L1852.2 426.5 L1852.2 378.5 L1853.6 383.3 L1853.6 412.7 L1855.0 416.1 L1855.0 384.8 L1856.4 382.6 L1856.4 434.4 L1857.8 415.1 L1857.8 383.1 L1859.2 382.5 L1859.2 418.5 L1860.6 428.6 L1860.6 381.2 L1862.0 381.6 L1862.0 422.6 L1863.4 438.8 L1863.4 380.5 L1864.8 381.6 L1864.8 428.6 L1866.2 417.2 L1866.2 381.4 L1867.6 383.0 L1867.6 419.8 L1869.0 432.6 L1869.0 381.9 L1870.4 381.9 L1870.4 411.3 L1871.8 414.6 L1871.8 381.1 L1873.2 381.0 L1873.2 424.8 L1874.6 428.3 L1874.6 382.5 L1876.0 378.3 L1876.0 428.1 L1877.4 427.4 L1877.4 380.5 L1878.8 380.4 L1878.8 430.8 L1880.2 412.9 L1880.2 379.0 L1881.6 382.3 L1881.6 424.7 L1883.0 424.6 L1883.0 381.5 L1884.4 381.8 L1884.4 419.3" fill="none" stroke="#c52b3b" stroke-width="0.9" opacity="0.95" stroke-linejoin="bevel"/><rect x="1417.5" y="174.5" width="467.0" height="287.0" fill="none" stroke="#484848" stroke-width="1"/></svg>
<span class="t" style="left:1640.8px;top:161.3px;font-size:11.5px;color:#111;transform:scaleX(0.925);">FFT</span>
<span class="t" style="left:1610.5px;top:477.6px;font-size:12px;color:#111;transform:scaleX(0.955);">Frequency (Hz)</span>
<span class="t" style="left:1406.5px;top:174.2px;font-size:12px;color:#111;">0</span>
<span class="t" style="left:1395.9px;top:202.988px;font-size:12px;color:#111;">-20</span>
<span class="t" style="left:1395.9px;top:231.77599999999998px;font-size:12px;color:#111;">-40</span>
<span class="t" style="left:1395.9px;top:260.564px;font-size:12px;color:#111;">-60</span>
<span class="t" style="left:1395.9px;top:289.352px;font-size:12px;color:#111;">-80</span>
<span class="t" style="left:1389.2px;top:318.14px;font-size:12px;color:#111;">-100</span>
<span class="t" style="left:1389.2px;top:346.928px;font-size:12px;color:#111;">-120</span>
<span class="t" style="left:1389.2px;top:375.71599999999995px;font-size:12px;color:#111;">-140</span>
<span class="t" style="left:1389.2px;top:404.50399999999996px;font-size:12px;color:#111;">-160</span>
<span class="t" style="left:1389.2px;top:433.292px;font-size:12px;color:#111;">-180</span>
<span class="t" style="left:1410.8px;top:465.6px;font-size:12px;color:#111;">20</span>
<span class="t" style="left:1438.2px;top:465.6px;font-size:12px;color:#111;">30</span>
<span class="t" style="left:1472.8px;top:465.6px;font-size:12px;color:#111;">50</span>
<span class="t" style="left:1516.3px;top:465.6px;font-size:12px;color:#111;">100</span>
<span class="t" style="left:1563.2px;top:465.6px;font-size:12px;color:#111;">200</span>
<span class="t" style="left:1590.6px;top:465.6px;font-size:12px;color:#111;">300</span>
<span class="t" style="left:1625.1px;top:465.6px;font-size:12px;color:#111;">500</span>
<span class="t" style="left:1675.6px;top:465.6px;font-size:12px;color:#111;">1k</span>
<span class="t" style="left:1722.5px;top:465.6px;font-size:12px;color:#111;">2k</span>
<span class="t" style="left:1749.9px;top:465.6px;font-size:12px;color:#111;">3k</span>
<span class="t" style="left:1784.4px;top:465.6px;font-size:12px;color:#111;">5k</span>
<span class="t" style="left:1828.0px;top:465.6px;font-size:12px;color:#111;">10k</span>
<span class="t" style="left:1874.8px;top:465.6px;font-size:12px;color:#111;">20k</span>
<span class="t" style="left:1373.2px;top:350.3px;font-size:11.5px;color:#111;transform-origin:0 0;transform:rotate(-90deg) scaleX(0.951);">Level (dBFS)</span>
<div style="left:808px;top:500.7px;width:1110px;height:7.3px;background:#487584;"></div>
<div style="left:1356px;top:503px;width:3px;height:3px;background:#a5cfdc;border-radius:1.5px;"></div>
<div style="left:1362px;top:503px;width:3px;height:3px;background:#a5cfdc;border-radius:1.5px;"></div>
<div style="left:1368px;top:503px;width:3px;height:3px;background:#a5cfdc;border-radius:1.5px;"></div>
<div style="left:808px;top:508px;width:1110px;height:24.4px;background:#d3d3d3;"></div>
<div style="left:808px;top:532.4px;width:1110px;height:575px;background:#ababab;"></div>
<svg class="a" style="left:810px;top:512px;" width="16" height="16" viewBox="0 0 16 16"><rect width="16" height="16" fill="#2f4b5d"/><rect x="6.7" y="2" width="2.6" height="12" fill="#fff"/><rect x="2" y="6.7" width="12" height="2.6" fill="#fff"/></svg>
<span class="t" style="left:829.3px;top:513.3px;font-size:12px;color:#111;transform:scaleX(0.993);">Add Meter</span>
<svg class="a" style="left:890.2px;top:519px;" width="5.4" height="3" viewBox="0 0 5.4 3"><path d="M0 0H5.4L2.7 3Z" fill="#111"/></svg>
<div style="left:903.6px;top:511px;width:1px;height:17px;background:#f4f4f4;"></div>
<svg class="a" style="left:908px;top:512px;" width="16" height="16" viewBox="0 0 16 16"><rect width="16" height="16" fill="#2f4b5d"/><path d="M1.6 3.2C1.6 1.4 10.4 1.4 10.4 3.2V12.8C10.4 14.6 1.6 14.6 1.6 12.8Z" fill="#fff"/><path d="M1.6 4.6C1.6 6.2 10.4 6.2 10.4 4.6M1.6 7.9C1.6 9.5 10.4 9.5 10.4 7.9M1.6 11.2C1.6 12.8 10.4 12.8 10.4 11.2" fill="none" stroke="#2f4b5d" stroke-width="1"/><path d="M7.4 6.6H11.4V4.2L15.6 8L11.4 11.8V9.4H7.4Z" fill="#fff" stroke="#2f4b5d" stroke-width="0.8"/></svg>
<span class="t" style="left:927.3px;top:513.3px;font-size:12px;color:#111;transform:scaleX(0.938);">Save Meter Data</span>
<div style="left:1021.6px;top:511px;width:1px;height:17px;background:#f4f4f4;"></div>
<svg class="a" style="left:1026.2px;top:512px;" width="16" height="16" viewBox="0 0 16 16"><rect width="16" height="16" fill="#2f4b5d"/><path d="M5 3L12.4 8L5 13Z" fill="#fff"/></svg>
<span class="t" style="left:1045.3px;top:513.3px;font-size:12px;color:#111;transform:scaleX(0.951);">Regulate</span>
<svg class="a" style="left:1898px;top:514.6px;" width="13" height="11" viewBox="0 0 13 11"><rect x="0" y="8.6" width="13" height="1.7" fill="#2f4678"/><path d="M6.5 6.3 L10.1 2.9 H7.8 V0.6 H5.2 V2.9 H2.9 Z" fill="#2f4678"/></svg>
<div style="left:811px;top:536px;width:537px;height:157.6px;background:#dae5e8;"></div>
<div style="left:811px;top:561.2px;width:537px;height:1px;background:#aab3b6;"></div>
<div style="left:811px;top:562.2px;width:537px;height:1.6px;background:#eff4f5;"></div>
<span class="t" style="left:815.6px;top:540.3px;font-size:14.5px;color:#000;font-weight:bold;transform:scaleX(1.046);">RMS Level</span>
<div style="left:899.9000000000001px;top:536.8px;width:75px;height:23.6px;background:#fff;"></div>
<div style="left:958.9000000000001px;top:536.8px;width:16px;height:23.6px;background:#fbfbfb;"></div>
<span class="t" style="left:904.3px;top:543px;font-size:11.5px;color:#000;transform:scaleX(0.887);">dBFS</span>
<svg class="a" style="left:966.1000000000001px;top:547.6px;" width="5" height="2.8" viewBox="0 0 5 2.8"><path d="M0 0H5L2.5 2.8Z" fill="#111"/></svg>
<svg class="a" style="left:977.9000000000001px;top:540.2px;" width="16" height="16" viewBox="0 0 16 16"><rect width="16" height="16" fill="#2f4b5d"/><rect x="1" y="3.2" width="14" height="9.6" fill="#516a8a"/><rect x="1" y="3.2" width="14" height="1.8" fill="#fff"/><rect x="1" y="11" width="14" height="1.8" fill="#fff"/><path d="M1.2 10.8L5.6 6.2L9.4 10.8L14.6 5.2" fill="none" stroke="#fff" stroke-width="0.9"/></svg>
<svg class="a" style="left:996.5000000000001px;top:547.6px;" width="5" height="2.8" viewBox="0 0 5 2.8"><path d="M0 0H5L2.5 2.8Z" fill="#111"/></svg>
<svg class="a" style="left:1007.7px;top:540.2px;" width="16" height="16" viewBox="0 0 16 16"><rect width="16" height="16" fill="#2f4b5d"/><path d="M14.00 6.90 L14.00 9.10 L12.35 9.15 L11.89 10.26 L13.02 11.47 L11.47 13.02 L10.26 11.89 L9.15 12.35 L9.10 14.00 L6.90 14.00 L6.85 12.35 L5.74 11.89 L4.53 13.02 L2.98 11.47 L4.11 10.26 L3.65 9.15 L2.00 9.10 L2.00 6.90 L3.65 6.85 L4.11 5.74 L2.98 4.53 L4.53 2.98 L5.74 4.11 L6.85 3.65 L6.90 2.00 L9.10 2.00 L9.15 3.65 L10.26 4.11 L11.47 2.98 L13.02 4.53 L11.89 5.74 L12.35 6.85Z M10.00 8.00 A2.0 2.0 0 1 0 6.00 8.00 A2.0 2.0 0 1 0 10.00 8.00Z" fill="#fff" fill-rule="evenodd"/></svg>
<div style="left:1299px;top:539px;width:1px;height:19px;background:#f7f9fa;"></div>
<svg class="a" style="left:1305.8px;top:542.2px;" width="12.6" height="12.6" viewBox="0 0 13 13"><path d="M5.5 2.2H1.2V11.8H10.8V7.5" fill="none" stroke="#1f3f8f" stroke-width="2"/><path d="M6.2 0.4H12.6V6.8L10.4 4.6L6.6 8.4L4.6 6.4L8.4 2.6Z" fill="#1f3f8f"/></svg>
<svg class="a" style="left:1330px;top:543px;" width="10.4" height="10.4" viewBox="0 0 10.4 10.4"><path d="M0.8 0.8L9.6 9.6M9.6 0.8L0.8 9.6" stroke="#26455b" stroke-width="2"/></svg>
<div style="left:814px;top:626px;width:135px;height:1px;background:#9ba7ab;"></div>
<span class="t" style="left:819.2px;top:579px;font-size:32.5px;color:#1c1c1c;transform:scaleX(0.830);">Ch1</span>
<svg class="a" style="left:935.8px;top:591px;" width="10.2" height="10" viewBox="0 0 10.2 10"><path d="M0 0H10.2L5.1 10Z" fill="#000"/></svg>
<div style="left:948.7px;top:565.7px;width:390.39999999999986px;height:41.299999999999955px;background:#000;"></div>
<span class="t" style="left:1105.3px;top:570.3px;font-size:31.6px;color:#1bf01b;transform:scaleX(0.959);">-106.199</span>
<span class="t" style="left:1265.0px;top:570.3px;font-size:31.6px;color:#1bf01b;transform:scaleX(0.858);">dBFS</span>
<div style="left:948.7px;top:607px;width:390.39999999999986px;height:18px;background:#808080;border:1px solid #d8d8d8;"></div>
<div style="left:950.7px;top:613.9px;width:371.29999999999995px;height:3.0px;background:#000;"></div>
<div style="left:948.7px;top:625px;width:390.39999999999986px;height:1px;background:#000;"></div>
<span class="t" style="left:819.2px;top:641.4px;font-size:32.5px;color:#1c1c1c;transform:scaleX(0.830);">Ch2</span>
<svg class="a" style="left:935.8px;top:653.4px;" width="10.2" height="10" viewBox="0 0 10.2 10"><path d="M0 0H10.2L5.1 10Z" fill="#000"/></svg>
<div style="left:948.7px;top:646.6px;width:390.39999999999986px;height:42.39999999999998px;background:#000;"></div>
<span class="t" style="left:1105.3px;top:650.3px;font-size:31.6px;color:#1bf01b;transform:scaleX(0.959);">-105.585</span>
<span class="t" style="left:1265.0px;top:650.3px;font-size:31.6px;color:#1bf01b;transform:scaleX(0.858);">dBFS</span>
<div style="left:948.7px;top:628.7px;width:390.39999999999986px;height:18.0px;background:#808080;border:1px solid #d8d8d8;"></div>
<div style="left:950.7px;top:636.2px;width:365.29999999999995px;height:3.0px;background:#000;"></div>
<div style="left:1354px;top:536px;width:537px;height:157.6px;background:#dae5e8;"></div>
<div style="left:1354px;top:561.2px;width:537px;height:1px;background:#aab3b6;"></div>
<div style="left:1354px;top:562.2px;width:537px;height:1.6px;background:#eff4f5;"></div>
<span class="t" style="left:1358.6px;top:540.3px;font-size:14.5px;color:#000;font-weight:bold;transform:scaleX(1.073);">Frequency</span>
<div style="left:1444.8999999999999px;top:536.8px;width:75px;height:23.6px;background:#fff;"></div>
<div style="left:1503.8999999999999px;top:536.8px;width:16px;height:23.6px;background:#fbfbfb;"></div>
<span class="t" style="left:1449.3px;top:543px;font-size:11.5px;color:#000;transform:scaleX(0.889);">Hz</span>
<svg class="a" style="left:1511.1px;top:547.6px;" width="5" height="2.8" viewBox="0 0 5 2.8"><path d="M0 0H5L2.5 2.8Z" fill="#111"/></svg>
<svg class="a" style="left:1522.8999999999999px;top:540.2px;" width="16" height="16" viewBox="0 0 16 16"><rect width="16" height="16" fill="#2f4b5d"/><rect x="1" y="3.2" width="14" height="9.6" fill="#516a8a"/><rect x="1" y="3.2" width="14" height="1.8" fill="#fff"/><rect x="1" y="11" width="14" height="1.8" fill="#fff"/><path d="M1.2 10.8L5.6 6.2L9.4 10.8L14.6 5.2" fill="none" stroke="#fff" stroke-width="0.9"/></svg>
<svg class="a" style="left:1541.4999999999998px;top:547.6px;" width="5" height="2.8" viewBox="0 0 5 2.8"><path d="M0 0H5L2.5 2.8Z" fill="#111"/></svg>
<svg class="a" style="left:1552.6999999999998px;top:540.2px;" width="16" height="16" viewBox="0 0 16 16"><rect width="16" height="16" fill="#2f4b5d"/><path d="M14.00 6.90 L14.00 9.10 L12.35 9.15 L11.89 10.26 L13.02 11.47 L11.47 13.02 L10.26 11.89 L9.15 12.35 L9.10 14.00 L6.90 14.00 L6.85 12.35 L5.74 11.89 L4.53 13.02 L2.98 11.47 L4.11 10.26 L3.65 9.15 L2.00 9.10 L2.00 6.90 L3.65 6.85 L4.11 5.74 L2.98 4.53 L4.53 2.98 L5.74 4.11 L6.85 3.65 L6.90 2.00 L9.10 2.00 L9.15 3.65 L10.26 4.11 L11.47 2.98 L13.02 4.53 L11.89 5.74 L12.35 6.85Z M10.00 8.00 A2.0 2.0 0 1 0 6.00 8.00 A2.0 2.0 0 1 0 10.00 8.00Z" fill="#fff" fill-rule="evenodd"/></svg>
<div style="left:1842px;top:539px;width:1px;height:19px;background:#f7f9fa;"></div>
<svg class="a" style="left:1848.8px;top:542.2px;" width="12.6" height="12.6" viewBox="0 0 13 13"><path d="M5.5 2.2H1.2V11.8H10.8V7.5" fill="none" stroke="#1f3f8f" stroke-width="2"/><path d="M6.2 0.4H12.6V6.8L10.4 4.6L6.6 8.4L4.6 6.4L8.4 2.6Z" fill="#1f3f8f"/></svg>
<svg class="a" style="left:1873px;top:543px;" width="10.4" height="10.4" viewBox="0 0 10.4 10.4"><path d="M0.8 0.8L9.6 9.6M9.6 0.8L0.8 9.6" stroke="#26455b" stroke-width="2"/></svg>
<div style="left:1357px;top:626px;width:135px;height:1px;background:#9ba7ab;"></div>
<span class="t" style="left:1362.2px;top:579px;font-size:32.5px;color:#1c1c1c;transform:scaleX(0.830);">Ch1</span>
<svg class="a" style="left:1478.8px;top:591px;" width="10.2" height="10" viewBox="0 0 10.2 10"><path d="M0 0H10.2L5.1 10Z" fill="#000"/></svg>
<div style="left:1491.7px;top:565.7px;width:390.39999999999986px;height:41.299999999999955px;background:#000;"></div>
<span class="t" style="left:1682.7px;top:570.3px;font-size:31.6px;color:#1bf01b;transform:scaleX(0.946);">4.64024</span>
<span class="t" style="left:1824.6px;top:570.3px;font-size:31.6px;color:#1bf01b;transform:scaleX(0.963);">kHz</span>
<div style="left:1491.7px;top:607px;width:390.39999999999986px;height:18px;background:#808080;border:1px solid #d8d8d8;"></div>
<div style="left:1492.7px;top:608px;width:307.0px;height:16px;background:#1bf01b;"></div>
<div style="left:1493.7px;top:613.9px;width:377.29999999999995px;height:3.0px;background:#000;"></div>
<div style="left:1491.7px;top:625px;width:390.39999999999986px;height:1px;background:#000;"></div>
<span class="t" style="left:1362.2px;top:641.4px;font-size:32.5px;color:#1c1c1c;transform:scaleX(0.830);">Ch2</span>
<svg class="a" style="left:1478.8px;top:653.4px;" width="10.2" height="10" viewBox="0 0 10.2 10"><path d="M0 0H10.2L5.1 10Z" fill="#000"/></svg>
<div style="left:1491.7px;top:646.6px;width:390.39999999999986px;height:42.39999999999998px;background:#000;"></div>
<span class="t" style="left:1682.7px;top:650.3px;font-size:31.6px;color:#1bf01b;transform:scaleX(0.966);">4.60113</span>
<span class="t" style="left:1824.6px;top:650.3px;font-size:31.6px;color:#1bf01b;transform:scaleX(0.963);">kHz</span>
<div style="left:1491.7px;top:628.7px;width:390.39999999999986px;height:18.0px;background:#808080;border:1px solid #d8d8d8;"></div>
<div style="left:1492.7px;top:629.7px;width:305.70000000000005px;height:16.0px;background:#1bf01b;"></div>
<div style="left:1493.7px;top:636.2px;width:387.29999999999995px;height:3.0px;background:#000;"></div>
<div style="left:811px;top:700px;width:537px;height:157.6px;background:#dae5e8;"></div>
<div style="left:811px;top:725.2px;width:537px;height:1px;background:#aab3b6;"></div>
<div style="left:811px;top:726.2px;width:537px;height:1.6px;background:#eff4f5;"></div>
<span class="t" style="left:815.6px;top:704.3px;font-size:14.5px;color:#000;font-weight:bold;transform:scaleX(1.123);">THD+N Ratio</span>
<div style="left:923.2px;top:700.8px;width:75px;height:23.6px;background:#fff;"></div>
<div style="left:982.2px;top:700.8px;width:16px;height:23.6px;background:#fbfbfb;"></div>
<span class="t" style="left:927.6px;top:707px;font-size:11.5px;color:#000;transform:scaleX(0.924);">dB</span>
<svg class="a" style="left:989.4000000000001px;top:711.6px;" width="5" height="2.8" viewBox="0 0 5 2.8"><path d="M0 0H5L2.5 2.8Z" fill="#111"/></svg>
<svg class="a" style="left:1001.2px;top:704.2px;" width="16" height="16" viewBox="0 0 16 16"><rect width="16" height="16" fill="#2f4b5d"/><rect x="1" y="3.2" width="14" height="9.6" fill="#516a8a"/><rect x="1" y="3.2" width="14" height="1.8" fill="#fff"/><rect x="1" y="11" width="14" height="1.8" fill="#fff"/><path d="M1.2 10.8L5.6 6.2L9.4 10.8L14.6 5.2" fill="none" stroke="#fff" stroke-width="0.9"/></svg>
<svg class="a" style="left:1019.8000000000001px;top:711.6px;" width="5" height="2.8" viewBox="0 0 5 2.8"><path d="M0 0H5L2.5 2.8Z" fill="#111"/></svg>
<svg class="a" style="left:1031.0px;top:704.2px;" width="16" height="16" viewBox="0 0 16 16"><rect width="16" height="16" fill="#2f4b5d"/><path d="M14.00 6.90 L14.00 9.10 L12.35 9.15 L11.89 10.26 L13.02 11.47 L11.47 13.02 L10.26 11.89 L9.15 12.35 L9.10 14.00 L6.90 14.00 L6.85 12.35 L5.74 11.89 L4.53 13.02 L2.98 11.47 L4.11 10.26 L3.65 9.15 L2.00 9.10 L2.00 6.90 L3.65 6.85 L4.11 5.74 L2.98 4.53 L4.53 2.98 L5.74 4.11 L6.85 3.65 L6.90 2.00 L9.10 2.00 L9.15 3.65 L10.26 4.11 L11.47 2.98 L13.02 4.53 L11.89 5.74 L12.35 6.85Z M10.00 8.00 A2.0 2.0 0 1 0 6.00 8.00 A2.0 2.0 0 1 0 10.00 8.00Z" fill="#fff" fill-rule="evenodd"/></svg>
<div style="left:1299px;top:703px;width:1px;height:19px;background:#f7f9fa;"></div>
<svg class="a" style="left:1305.8px;top:706.2px;" width="12.6" height="12.6" viewBox="0 0 13 13"><path d="M5.5 2.2H1.2V11.8H10.8V7.5" fill="none" stroke="#1f3f8f" stroke-width="2"/><path d="M6.2 0.4H12.6V6.8L10.4 4.6L6.6 8.4L4.6 6.4L8.4 2.6Z" fill="#1f3f8f"/></svg>
<svg class="a" style="left:1330px;top:707px;" width="10.4" height="10.4" viewBox="0 0 10.4 10.4"><path d="M0.8 0.8L9.6 9.6M9.6 0.8L0.8 9.6" stroke="#26455b" stroke-width="2"/></svg>
<div style="left:814px;top:790px;width:135px;height:1px;background:#9ba7ab;"></div>
<span class="t" style="left:819.2px;top:743px;font-size:32.5px;color:#1c1c1c;transform:scaleX(0.830);">Ch1</span>
<svg class="a" style="left:935.8px;top:755px;" width="10.2" height="10" viewBox="0 0 10.2 10"><path d="M0 0H10.2L5.1 10Z" fill="#000"/></svg>
<div style="left:948.7px;top:729.7px;width:390.39999999999986px;height:41.299999999999955px;background:#000;"></div>
<span class="t" style="left:1181.8px;top:734.3px;font-size:31.6px;color:#1bf01b;transform:scaleX(0.970);">-4.829</span>
<span class="t" style="left:1296.6px;top:734.3px;font-size:31.6px;color:#1bf01b;transform:scaleX(0.931);">dB</span>
<div style="left:948.7px;top:771px;width:390.39999999999986px;height:18px;background:#808080;border:1px solid #d8d8d8;"></div>
<div style="left:949.7px;top:772px;width:372.79999999999995px;height:16px;background:#1bf01b;"></div>
<div style="left:950.7px;top:777.9px;width:386.79999999999995px;height:3.0px;background:#000;"></div>
<div style="left:948.7px;top:789px;width:390.39999999999986px;height:1px;background:#000;"></div>
<span class="t" style="left:819.2px;top:805.4px;font-size:32.5px;color:#1c1c1c;transform:scaleX(0.830);">Ch2</span>
<svg class="a" style="left:935.8px;top:817.4px;" width="10.2" height="10" viewBox="0 0 10.2 10"><path d="M0 0H10.2L5.1 10Z" fill="#000"/></svg>
<div style="left:948.7px;top:810.6px;width:390.39999999999986px;height:42.39999999999998px;background:#000;"></div>
<span class="t" style="left:1181.8px;top:814.3px;font-size:31.6px;color:#1bf01b;transform:scaleX(0.970);">-3.783</span>
<span class="t" style="left:1296.6px;top:814.3px;font-size:31.6px;color:#1bf01b;transform:scaleX(0.931);">dB</span>
<div style="left:948.7px;top:792.7px;width:390.39999999999986px;height:18.0px;background:#808080;border:1px solid #d8d8d8;"></div>
<div style="left:949.7px;top:793.7px;width:377.0999999999999px;height:16.0px;background:#1bf01b;"></div>
<div style="left:950.7px;top:800.2px;width:386.79999999999995px;height:3.0px;background:#000;"></div>
<div style="left:1354px;top:700px;width:537px;height:157.6px;background:#dae5e8;"></div>
<div style="left:1354px;top:725.2px;width:537px;height:1px;background:#aab3b6;"></div>
<div style="left:1354px;top:726.2px;width:537px;height:1.6px;background:#eff4f5;"></div>
<span class="t" style="left:1358.6px;top:704.3px;font-size:14.5px;color:#000;font-weight:bold;transform:scaleX(1.113);">THD+N Level</span>
<div style="left:1466.1999999999998px;top:700.8px;width:75px;height:23.6px;background:#fff;"></div>
<div style="left:1525.1999999999998px;top:700.8px;width:16px;height:23.6px;background:#fbfbfb;"></div>
<span class="t" style="left:1470.6px;top:707px;font-size:11.5px;color:#000;transform:scaleX(0.887);">dBFS</span>
<svg class="a" style="left:1532.3999999999999px;top:711.6px;" width="5" height="2.8" viewBox="0 0 5 2.8"><path d="M0 0H5L2.5 2.8Z" fill="#111"/></svg>
<svg class="a" style="left:1544.1999999999998px;top:704.2px;" width="16" height="16" viewBox="0 0 16 16"><rect width="16" height="16" fill="#2f4b5d"/><rect x="1" y="3.2" width="14" height="9.6" fill="#516a8a"/><rect x="1" y="3.2" width="14" height="1.8" fill="#fff"/><rect x="1" y="11" width="14" height="1.8" fill="#fff"/><path d="M1.2 10.8L5.6 6.2L9.4 10.8L14.6 5.2" fill="none" stroke="#fff" stroke-width="0.9"/></svg>
<svg class="a" style="left:1562.7999999999997px;top:711.6px;" width="5" height="2.8" viewBox="0 0 5 2.8"><path d="M0 0H5L2.5 2.8Z" fill="#111"/></svg>
<svg class="a" style="left:1573.9999999999998px;top:704.2px;" width="16" height="16" viewBox="0 0 16 16"><rect width="16" height="16" fill="#2f4b5d"/><path d="M14.00 6.90 L14.00 9.10 L12.35 9.15 L11.89 10.26 L13.02 11.47 L11.47 13.02 L10.26 11.89 L9.15 12.35 L9.10 14.00 L6.90 14.00 L6.85 12.35 L5.74 11.89 L4.53 13.02 L2.98 11.47 L4.11 10.26 L3.65 9.15 L2.00 9.10 L2.00 6.90 L3.65 6.85 L4.11 5.74 L2.98 4.53 L4.53 2.98 L5.74 4.11 L6.85 3.65 L6.90 2.00 L9.10 2.00 L9.15 3.65 L10.26 4.11 L11.47 2.98 L13.02 4.53 L11.89 5.74 L12.35 6.85Z M10.00 8.00 A2.0 2.0 0 1 0 6.00 8.00 A2.0 2.0 0 1 0 10.00 8.00Z" fill="#fff" fill-rule="evenodd"/></svg>
<div style="left:1842px;top:703px;width:1px;height:19px;background:#f7f9fa;"></div>
<svg class="a" style="left:1848.8px;top:706.2px;" width="12.6" height="12.6" viewBox="0 0 13 13"><path d="M5.5 2.2H1.2V11.8H10.8V7.5" fill="none" stroke="#1f3f8f" stroke-width="2"/><path d="M6.2 0.4H12.6V6.8L10.4 4.6L6.6 8.4L4.6 6.4L8.4 2.6Z" fill="#1f3f8f"/></svg>
<svg class="a" style="left:1873px;top:707px;" width="10.4" height="10.4" viewBox="0 0 10.4 10.4"><path d="M0.8 0.8L9.6 9.6M9.6 0.8L0.8 9.6" stroke="#26455b" stroke-width="2"/></svg>
<div style="left:1357px;top:790px;width:135px;height:1px;background:#9ba7ab;"></div>
<span class="t" style="left:1362.2px;top:743px;font-size:32.5px;color:#1c1c1c;transform:scaleX(0.830);">Ch1</span>
<svg class="a" style="left:1478.8px;top:755px;" width="10.2" height="10" viewBox="0 0 10.2 10"><path d="M0 0H10.2L5.1 10Z" fill="#000"/></svg>
<div style="left:1491.7px;top:729.7px;width:390.39999999999986px;height:41.299999999999955px;background:#000;"></div>
<span class="t" style="left:1648.3px;top:734.3px;font-size:31.6px;color:#1bf01b;transform:scaleX(0.985);">-110.749</span>
<span class="t" style="left:1807.2px;top:734.3px;font-size:31.6px;color:#1bf01b;transform:scaleX(0.879);">dBFS</span>
<div style="left:1491.7px;top:771px;width:390.39999999999986px;height:18px;background:#808080;border:1px solid #d8d8d8;"></div>
<div style="left:1492.7px;top:772px;width:31.0px;height:16px;background:#1bf01b;"></div>
<div style="left:1493.7px;top:777.9px;width:377.29999999999995px;height:3.0px;background:#000;"></div>
<div style="left:1491.7px;top:789px;width:390.39999999999986px;height:1px;background:#000;"></div>
<span class="t" style="left:1362.2px;top:805.4px;font-size:32.5px;color:#1c1c1c;transform:scaleX(0.830);">Ch2</span>
<svg class="a" style="left:1478.8px;top:817.4px;" width="10.2" height="10" viewBox="0 0 10.2 10"><path d="M0 0H10.2L5.1 10Z" fill="#000"/></svg>
<div style="left:1491.7px;top:810.6px;width:390.39999999999986px;height:42.39999999999998px;background:#000;"></div>
<span class="t" style="left:1648.3px;top:814.3px;font-size:31.6px;color:#1bf01b;transform:scaleX(0.967);">-109.091</span>
<span class="t" style="left:1807.2px;top:814.3px;font-size:31.6px;color:#1bf01b;transform:scaleX(0.879);">dBFS</span>
<div style="left:1491.7px;top:792.7px;width:390.39999999999986px;height:18.0px;background:#808080;border:1px solid #d8d8d8;"></div>
<div style="left:1492.7px;top:793.7px;width:35.899999999999864px;height:16.0px;background:#1bf01b;"></div>
<div style="left:1493.7px;top:800.2px;width:377.29999999999995px;height:3.0px;background:#000;"></div>
<div style="left:1348px;top:858px;width:545px;height:166.5px;background:#adadad;"></div>
<div style="left:813px;top:865.5px;width:534.5px;height:156px;background:#ababab;border:2px solid #1e1e1e;"></div>
<svg class="a" style="left:1027px;top:935px;" width="15.4" height="15.4" viewBox="0 0 16 16"><rect width="16" height="16" fill="#2f4b5d"/><rect x="6.7" y="2" width="2.6" height="12" fill="#fff"/><rect x="2" y="6.7" width="12" height="2.6" fill="#fff"/></svg>
<span class="t" style="left:1048.0px;top:935px;font-size:14px;color:#1a1a1a;transform:scaleX(1.067);">Add meter...</span>
<div style="left:0px;top:1107.5px;width:1920px;height:21.5px;background:#f0f0f0;"></div>
<span class="t" style="left:1216.0px;top:1113px;font-size:12px;color:#111;transform:scaleX(1.009);">Output:</span>
<div style="left:1263.2px;top:1111.2px;width:168.79999999999995px;height:16.6px;background:#000;"></div>
<span class="t" style="left:1266.6px;top:1113px;font-size:12px;color:#30e630;transform:scaleX(0.970);">Analog Balanced 2 Ch, 40 ohm</span>
<span class="t" style="left:1438.5px;top:1113px;font-size:12px;color:#111;transform:scaleX(0.974);">Input 1:</span>
<div style="left:1484.6px;top:1111.2px;width:99.20000000000005px;height:16.6px;background:#000;"></div>
<span class="t" style="left:1488.0px;top:1113px;font-size:12px;color:#30e630;transform:scaleX(0.955);">Digital Serial 8 Ch</span>
<div style="left:1587.2px;top:1111.2px;width:32.799999999999955px;height:16.6px;background:#000;"></div>
<span class="t" style="left:1590.4px;top:1113px;font-size:12px;color:#30e630;transform:scaleX(0.949);">PCM</span>
<div style="left:1623.2px;top:1111.2px;width:68.59999999999991px;height:16.6px;background:#000;"></div>
<span class="t" style="left:1626.0px;top:1113px;font-size:12px;color:#30e630;transform:scaleX(0.920);">48.0000 kHz</span>
<div style="left:1695px;top:1111.2px;width:116.79999999999995px;height:16.6px;background:#000;"></div>
<span class="t" style="left:1698.4px;top:1113px;font-size:12px;color:#30e630;transform:scaleX(0.958);">AC (&lt;10 Hz) - 20 kHz</span>
<span class="t" style="left:1818.4px;top:1113px;font-size:12px;color:#111;transform:scaleX(0.979);">Input 2:</span>
<div style="left:1865px;top:1111.2px;width:35.700000000000045px;height:16.6px;background:#000;"></div>
<span class="t" style="left:1868.4px;top:1113px;font-size:12px;color:#30e630;">None</span>
</body></html>
